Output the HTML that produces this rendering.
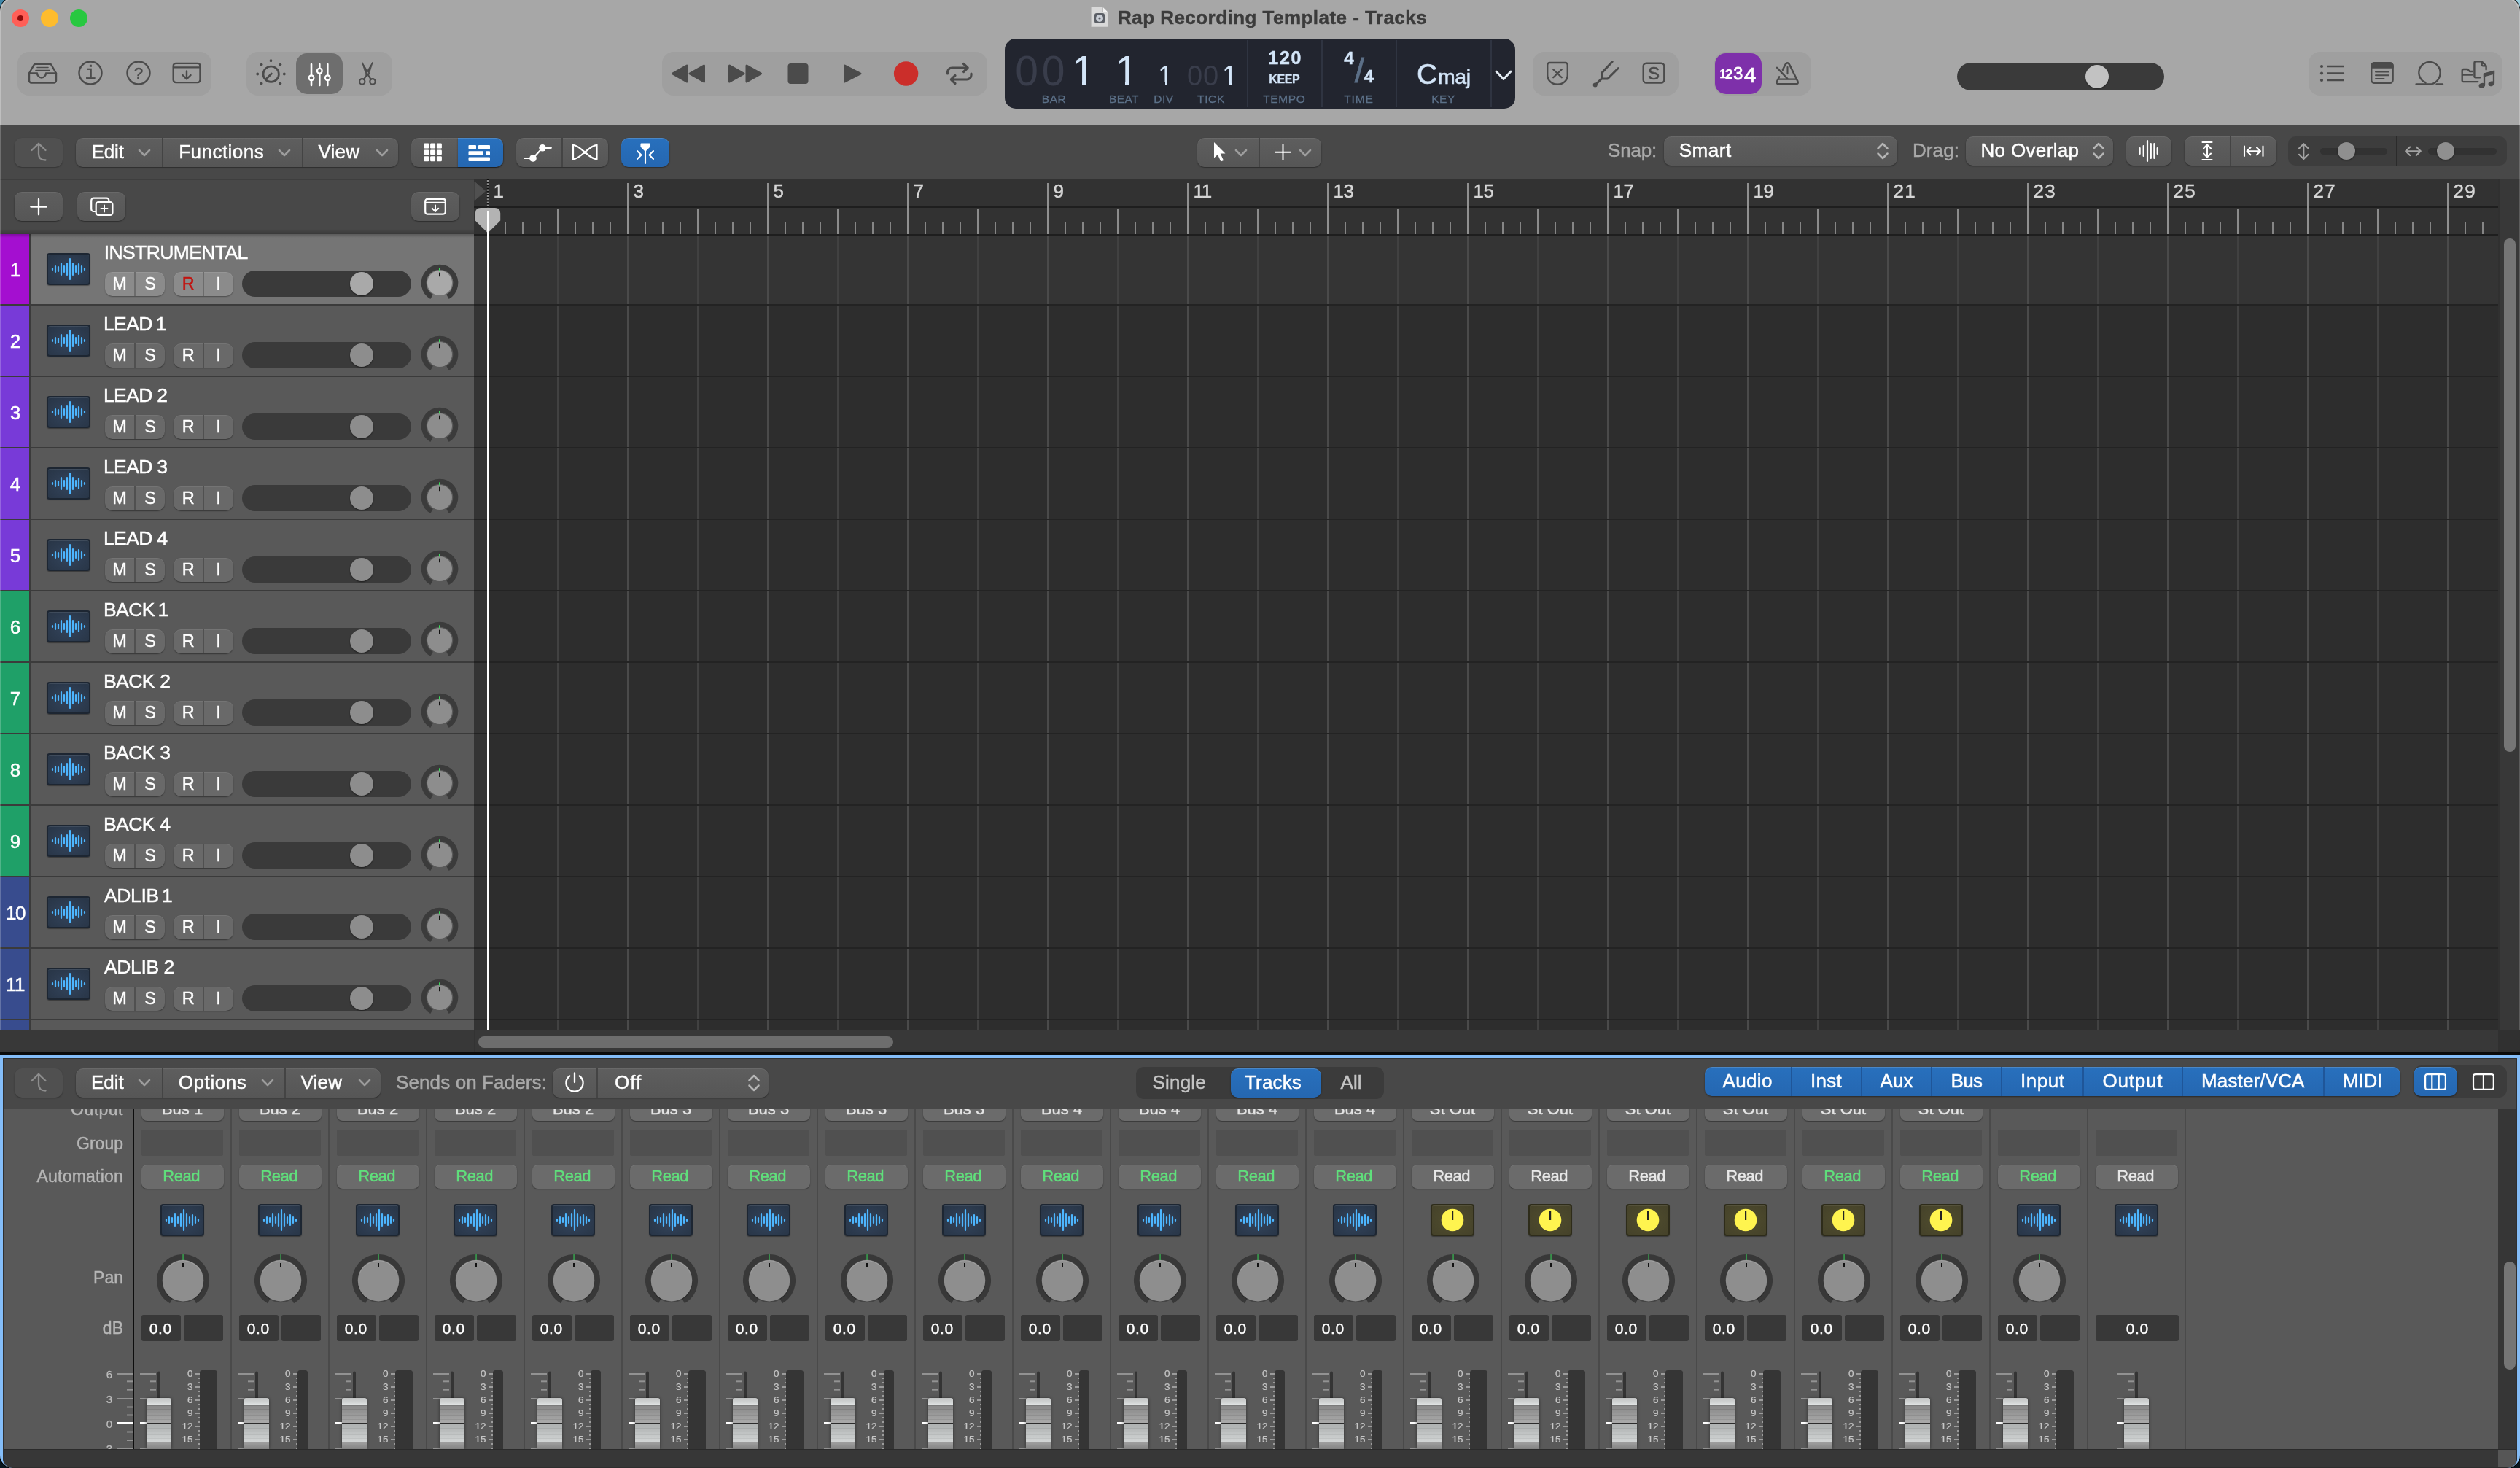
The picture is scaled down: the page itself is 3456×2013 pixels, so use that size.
<!DOCTYPE html>
<html lang="en"><head><meta charset="utf-8"><title>Rap Recording Template - Tracks</title>
<style>
html,body{margin:0;padding:0;}
body{width:3456px;height:2013px;position:relative;background:linear-gradient(to right,#3f86a8 0,#3f86a8 100px,#9ccfe0 3300px,#9ccfe0 100%) 0 0/3456px 60px no-repeat,#08161e;font-family:"Liberation Sans",sans-serif;}
#win{will-change:transform;position:absolute;left:0;top:-4px;width:3456px;height:2017px;overflow:hidden;background:#484848;border-radius:20px 20px 18px 18px;box-shadow:0 0 0 1px #000;}
#win div,#win span.t,#win svg{position:absolute;box-sizing:border-box;}
span.t{white-space:pre;display:block;-webkit-text-stroke:0.018em currentColor;}
.grp{background:#9f9f9f;border-radius:16px;}
.btn{background:linear-gradient(#5e5e5e,#565656);border-radius:10px;box-shadow:0 1px 2px rgba(0,0,0,.45),inset 0 1px 0 rgba(255,255,255,.07);}
.btnd{background:#505050;border-radius:10px;box-shadow:0 1px 2px rgba(0,0,0,.3);}
.blue{background:linear-gradient(#2870bd,#2567b1);border-radius:10px;box-shadow:0 1px 2px rgba(0,0,0,.45),inset 0 1px 0 rgba(255,255,255,.16);}
.sep{background:#444;width:2px;}
.tb{background:#696969;border-radius:10px;box-shadow:0 1px 1.5px rgba(0,0,0,.4),inset 0 1px 0 rgba(255,255,255,.08);}
.tbs{background:#8b8b8b;border-radius:10px;box-shadow:0 1px 1.5px rgba(0,0,0,.35),inset 0 1px 0 rgba(255,255,255,.1);}
.ico{border-radius:4px;border:2px solid #1d2632;background:radial-gradient(ellipse at 50% 55%,#33445c 0%,#2b394c 70%,#283546 100%);box-shadow:0 1px 1px rgba(0,0,0,.35),inset 0 1px 0 rgba(255,255,255,.1);}
.icoy{border-radius:4px;border:2px solid #2e2c1a;background:radial-gradient(ellipse at 50% 50%,#504d2e 0%,#45422a 100%);box-shadow:0 1px 1px rgba(0,0,0,.35),inset 0 1px 0 rgba(255,255,255,.08);}
.slot{background:#3a3a3a;border-radius:18px;}
.kn{border-radius:50%;box-shadow:0 1px 2px rgba(0,0,0,.5);}
.rd{background:#6b6b6b;border-radius:8px;box-shadow:0 1px 1.5px rgba(0,0,0,.4),inset 0 1px 0 rgba(255,255,255,.08);}
.db{background:#383838;border-radius:3px;}
.gs{background:#505050;border-radius:2px;}
#win #in{left:0;top:4px;width:3456px;height:2013px;}
</style></head><body><div id="win"><div id="in">
<div style="left:0px;top:0px;width:3456px;height:171px;background:#a7a7a7;"></div>
<div style="left:0px;top:-4px;width:3456px;height:175px;border:2px solid rgba(255,255,255,.28);border-bottom:none;border-radius:20px 20px 0 0;"></div>
<div style="left:16px;top:13px;width:24px;height:24px;background:#ff5f57;border-radius:50%;"></div>
<div style="left:24px;top:21px;width:8px;height:8px;background:#8e0b0b;border-radius:50%;"></div>
<div style="left:56px;top:13px;width:24px;height:24px;background:#febc2e;border-radius:50%;"></div>
<div style="left:96px;top:13px;width:24px;height:24px;background:#28c840;border-radius:50%;"></div>
<div class="grp" style="left:24px;top:71px;width:266px;height:60px;"></div>
<div class="grp" style="left:338px;top:71px;width:200px;height:60px;"></div>
<div class="grp" style="left:908px;top:71px;width:446px;height:60px;"></div>
<div class="grp" style="left:2102px;top:71px;width:200px;height:60px;"></div>
<div class="grp" style="left:2351px;top:71px;width:133px;height:60px;"></div>
<div class="grp" style="left:3166px;top:71px;width:266px;height:60px;"></div>
<svg style="left:1496px;top:9px;" width="24" height="28" viewBox="0 0 24 28"><path d="M1.5,0.5 h15 l7,7 v19.5 a1,1 0 0 1 -1,1 h-21 a1,1 0 0 1 -1,-1 v-25.5 a1,1 0 0 1 1,-1z" fill="#d9d9d9" stroke="#bdbdbd" stroke-width="1"/><path d="M16.5,0.5 v7 h7z" fill="#f2f2f2" stroke="#bdbdbd" stroke-width="1"/><rect x="5" y="9" width="14" height="14" rx="3" fill="#5b5f66"/><circle cx="12" cy="16" r="5" fill="#c9ced6"/><circle cx="12" cy="16" r="1.6" fill="#5b5f66"/></svg>
<span class="t" style="left:1533.00px;top:11.29px;font-size:26px;line-height:26px;color:#3b3b3b;font-weight:bold;letter-spacing:0.460px;">Rap Recording Template - Tracks</span>
<svg style="left:30px;top:75px;" width="260" height="52" viewBox="0 0 260 52"><g fill="none" stroke="#4b4b4b" stroke-width="2.4" stroke-linecap="round" stroke-linejoin="round"><path d="M10,25.5 L16.5,14 a2.5,2.5 0 0 1 2.2,-1.3 h19.6 a2.5,2.5 0 0 1 2.2,1.3 L47,25.5"/><path d="M10,25.5 h11 a6,6 0 0 0 12,0 h14 v10 a3,3 0 0 1 -3,3 h-31 a3,3 0 0 1 -3,-3 z"/><path d="M21,17.5 h15 M19,21.5 h19" stroke-width="1.6"/><circle cx="94" cy="25" r="15.5"/><circle cx="160" cy="25" r="15.5"/><rect x="207.7" y="11.9" width="36.8" height="26.2" rx="3.5"/><path d="M208,17.3 h36" stroke-width="2.2"/><path d="M226,22.5 v10.5 M220.5,28 l5.5,5.5 l5.5,-5.5"/></g><text x="94" y="32.6" font-family="Liberation Mono,monospace" font-size="25" text-anchor="middle" fill="#4b4b4b" stroke="#4b4b4b" stroke-width="0.5">i</text><text x="160" y="33" font-family="Liberation Sans,sans-serif" font-size="22.5" text-anchor="middle" fill="#4b4b4b" stroke="#4b4b4b" stroke-width="0.5">?</text></svg>
<div style="left:406px;top:73px;width:64px;height:56px;background:#6e6e6e;border-radius:15px;"></div>
<svg style="left:340px;top:75px;" width="200" height="52" viewBox="0 0 200 52"><g fill="none" stroke="#4b4b4b" stroke-width="2.4" stroke-linecap="round" stroke-linejoin="round"><circle cx="31.7" cy="26.7" r="10.7" stroke-width="2.7"/><path d="M25.2,33.2 L32.3,26" stroke-width="2.8"/><circle cx="49.8" cy="26.5" r="1.9" fill="#4b4b4b" stroke="none"/><circle cx="44.4" cy="13.6" r="1.9" fill="#4b4b4b" stroke="none"/><circle cx="31.5" cy="8.2" r="1.9" fill="#4b4b4b" stroke="none"/><circle cx="18.6" cy="13.6" r="1.9" fill="#4b4b4b" stroke="none"/><circle cx="13.2" cy="26.5" r="1.9" fill="#4b4b4b" stroke="none"/><circle cx="18.6" cy="39.4" r="1.9" fill="#4b4b4b" stroke="none"/><circle cx="44.4" cy="39.4" r="1.9" fill="#4b4b4b" stroke="none"/><circle cx="156.7" cy="36.9" r="3.7" stroke-width="2.2"/><circle cx="171" cy="36.9" r="3.7" stroke-width="2.2"/><path d="M156.7,10.4 L165.6,25 L162.4,28.2 Z M171,10.4 L162.1,25 L165.3,28.2 Z" fill="#4b4b4b" stroke-width="1"/><path d="M164.3,27 L168.6,33.6 M163.5,27 L159.1,33.6" stroke-width="2.2"/></g><g fill="none" stroke="#fff" stroke-width="2.6" stroke-linecap="round"><path d="M87,13 v29 M98.3,13 v29 M109.3,13 v29"/><circle cx="87" cy="31.7" r="3.4" fill="#6e6e6e" stroke-width="2.2"/><circle cx="98.3" cy="22.2" r="3.4" fill="#6e6e6e" stroke-width="2.2"/><circle cx="109.3" cy="31.7" r="3.4" fill="#6e6e6e" stroke-width="2.2"/></g></svg>
<svg style="left:908px;top:71px;" width="446" height="60" viewBox="0 0 446 60"><g fill="#4b4b4b" stroke="#4b4b4b" stroke-width="3" stroke-linejoin="round"><path d="M14.5,30 L34,19 V41 Z M38,30 L57.5,19 V41 Z"/><path d="M92.5,19 L112,30 L92.5,41 Z M116,19 L135.5,30 L116,41 Z"/><rect x="174" y="17.5" width="25" height="25" rx="2.5"/><path d="M250.5,19 L272,30 L250.5,41 Z"/></g><circle cx="334.6" cy="30" r="16.7" fill="#cb2e2a"/><g fill="none" stroke="#4b4b4b" stroke-width="3.2" stroke-linecap="round" stroke-linejoin="round"><path d="M391.5,30 v-2 a6,6 0 0 1 6,-6 h21.5 M413.5,16.5 l5.7,5.5 l-5.7,5.5"/><path d="M424,30 v2 a6,6 0 0 1 -6,6 h-21.5 M402,32.5 l-5.7,5.5 l5.7,5.5"/></g></svg>
<div style="left:1378px;top:53px;width:700px;height:95.5px;background:#22252f;border-radius:15px;"></div>
<div style="left:1710px;top:55px;width:2px;height:91.5px;background:#2f3441;"></div>
<div style="left:1812px;top:55px;width:2px;height:91.5px;background:#2f3441;"></div>
<div style="left:1914px;top:55px;width:2px;height:91.5px;background:#2f3441;"></div>
<div style="left:2043.5px;top:55px;width:2px;height:91.5px;background:#2f3441;"></div>
<span class="t" style="left:1392.15px;top:68.75px;font-size:57px;line-height:57px;color:#393d4b;-webkit-text-stroke:0;">0</span>
<span class="t" style="left:1428.65px;top:68.75px;font-size:57px;line-height:57px;color:#393d4b;-webkit-text-stroke:0;">0</span>
<span class="t" style="left:1627.93px;top:84.83px;font-size:38px;line-height:38px;color:#393d4b;-webkit-text-stroke:0;">0</span>
<span class="t" style="left:1649.93px;top:84.83px;font-size:38px;line-height:38px;color:#393d4b;-webkit-text-stroke:0;">0</span>
<span class="t" style="left:1469.65px;top:68.75px;font-size:57px;line-height:57px;color:#d3e5f8;-webkit-text-stroke:0;">1</span>
<div style="left:1472.15px;top:112.2px;width:11.9px;height:5.6px;background:#22252f;"></div>
<div style="left:1488.95px;top:112.2px;width:11.5px;height:5.6px;background:#22252f;"></div>
<span class="t" style="left:1528.95px;top:68.75px;font-size:57px;line-height:57px;color:#d3e5f8;-webkit-text-stroke:0;">1</span>
<div style="left:1531.45px;top:112.2px;width:11.9px;height:5.6px;background:#22252f;"></div>
<div style="left:1548.25px;top:112.2px;width:11.5px;height:5.6px;background:#22252f;"></div>
<span class="t" style="left:1588.03px;top:84.83px;font-size:38px;line-height:38px;color:#d3e5f8;-webkit-text-stroke:0;">1</span>
<div style="left:1589.53px;top:113.2px;width:8.3px;height:4.6px;background:#22252f;"></div>
<div style="left:1601.33px;top:113.2px;width:6.5px;height:4.6px;background:#22252f;"></div>
<span class="t" style="left:1676.03px;top:84.83px;font-size:38px;line-height:38px;color:#d3e5f8;-webkit-text-stroke:0;">1</span>
<div style="left:1677.53px;top:113.2px;width:8.3px;height:4.6px;background:#22252f;"></div>
<div style="left:1689.33px;top:113.2px;width:6.5px;height:4.6px;background:#22252f;"></div>
<span class="t" style="left:1428.75px;top:127.88px;font-size:15.5px;line-height:15.5px;color:#5c7088;letter-spacing:0.542px;">BAR</span>
<span class="t" style="left:1521.00px;top:127.88px;font-size:15.5px;line-height:15.5px;color:#5c7088;letter-spacing:0.414px;">BEAT</span>
<span class="t" style="left:1582.25px;top:127.88px;font-size:15.5px;line-height:15.5px;color:#5c7088;letter-spacing:0.552px;">DIV</span>
<span class="t" style="left:1642.00px;top:127.88px;font-size:15.5px;line-height:15.5px;color:#5c7088;letter-spacing:0.672px;">TICK</span>
<span class="t" style="left:1732.30px;top:127.88px;font-size:15.5px;line-height:15.5px;color:#5c7088;letter-spacing:0.575px;">TEMPO</span>
<span class="t" style="left:1843.25px;top:127.88px;font-size:15.5px;line-height:15.5px;color:#5c7088;letter-spacing:0.867px;">TIME</span>
<span class="t" style="left:1963.25px;top:127.88px;font-size:15.5px;line-height:15.5px;color:#5c7088;letter-spacing:0.490px;">KEY</span>
<span class="t" style="left:1739.30px;top:67.14px;font-size:25px;line-height:25px;color:#d3e5f8;font-weight:bold;letter-spacing:1.760px;">120</span>
<span class="t" style="left:1740.30px;top:101.16px;font-size:16px;line-height:16px;color:#d3e5f8;font-weight:bold;letter-spacing:-0.395px;">KEEP</span>
<span class="t" style="left:1843.13px;top:67.68px;font-size:24px;line-height:24px;color:#d3e5f8;font-weight:bold;">4</span>
<span class="t" style="left:1857.77px;top:72.71px;font-size:47px;line-height:47px;color:#5c7088;">/</span>
<span class="t" style="left:1870.83px;top:93.48px;font-size:24px;line-height:24px;color:#d3e5f8;font-weight:bold;">4</span>
<span class="t" style="left:1943.00px;top:81.99px;font-size:39px;line-height:39px;color:#d3e5f8;">C</span>
<span class="t" style="left:1972.00px;top:90.87px;font-size:28.5px;line-height:28.5px;color:#d3e5f8;letter-spacing:-0.469px;">maj</span>
<svg style="left:2046px;top:92px;" width="32" height="24" viewBox="0 0 32 24"><path d="M6,6 L16,16.5 L26,6" fill="none" stroke="#e3ebf3" stroke-width="3" stroke-linecap="round" stroke-linejoin="round"/></svg>
<svg style="left:2102px;top:71px;" width="200" height="60" viewBox="0 0 200 60"><g fill="none" stroke="#4b4b4b" stroke-width="2.4" stroke-linecap="round" stroke-linejoin="round"><path d="M20.2,18 a3,3 0 0 1 3,-3 h21.6 a3,3 0 0 1 3,3 v14.3 a13.8,12.4 0 0 1 -27.6,0 z"/><path d="M28.2,24.3 l11.6,11 M39.8,24.3 l-11.6,11" stroke-width="2.2"/><path d="M109.2,13.6 L94.8,29 V36.4 M117.3,22.5 L102.8,37 H95.2 M94.8,36.6 L86,45.2" stroke-width="3"/><circle cx="85.7" cy="45.4" r="3" fill="#4b4b4b" stroke="none"/><rect x="151.7" y="15.8" width="28.6" height="26.8" rx="4"/></g><text x="166" y="37.8" font-family="Liberation Sans,sans-serif" font-size="24" text-anchor="middle" fill="#4b4b4b" stroke="#4b4b4b" stroke-width="0.6">S</text></svg>
<div style="left:2352px;top:73px;width:64px;height:56px;background:#7e30aa;border-radius:15px;"></div>
<span class="t" style="left:2358.20px;top:94.46px;font-size:16px;line-height:16px;color:#fff;font-weight:bold;">1</span>
<span class="t" style="left:2366.00px;top:93.14px;font-size:18.5px;line-height:18.5px;color:#fff;font-weight:bold;letter-spacing:1.219px;">2</span>
<span class="t" style="left:2377.30px;top:89.81px;font-size:23.5px;line-height:23.5px;color:#fff;letter-spacing:1.938px;-webkit-text-stroke:0.8px #fff;">3</span>
<span class="t" style="left:2391.80px;top:87.51px;font-size:30px;line-height:30px;color:#fff;letter-spacing:3.312px;-webkit-text-stroke:0.6px #fff;">4</span>
<svg style="left:2430px;top:80px;" width="44" height="44" viewBox="0 0 44 44"><g fill="none" stroke="#4b4b4b" stroke-width="2.4" stroke-linecap="round" stroke-linejoin="round"><path d="M14.8,15.9 L17.9,9.6 Q21.3,2.8 24.7,9.6 L35.5,31.6 Q37,35.3 33,35.3 H9.5 Q5.5,35.3 7,31.6 L10.2,25.2"/><path d="M7,12.7 L22,28.6 M9.3,28.6 h24"/><path d="M21.5,12 v9.3" stroke-width="2.1"/></g></svg>
<div style="left:2683.5px;top:86px;width:284.5px;height:38px;background:#3a3a3a;border-radius:19px;"></div>
<div style="left:2860px;top:89px;width:32px;height:32px;background:#c2c2c2;border-radius:50%;box-shadow:0 1px 2px rgba(0,0,0,.4);"></div>
<svg style="left:3166px;top:71px;" width="266" height="60" viewBox="0 0 266 60"><g fill="none" stroke="#4b4b4b" stroke-width="2.4" stroke-linecap="round" stroke-linejoin="round"><path d="M26.3,20 h21.6 M26.3,29.5 h21.6 M26.3,39 h21.6" stroke-width="2.5"/><circle cx="18" cy="20" r="2.1" fill="#4b4b4b" stroke="none"/><circle cx="18" cy="29.5" r="2.1" fill="#4b4b4b" stroke="none"/><circle cx="18" cy="39" r="2.1" fill="#4b4b4b" stroke="none"/><rect x="86.2" y="15.2" width="29.4" height="27.6" rx="4"/><path d="M86.2,21.5 v-2.3 a4,4 0 0 1 4,-4 h21.4 a4,4 0 0 1 4,4 v2.3 z" fill="#4b4b4b"/><path d="M92,27.5 h18 M92,32.3 h18 M92,37 h11.5" stroke-width="2"/><path d="M147.6,44.5 H166 C174,44.5 180.65,37 180.65,28.65 A14.65,14.65 0 1 0 160.5,42.2 M175.5,44.5 h8.5"/><path d="M210.7,39.5 v-13.5 a2,2 0 0 1 2,-2 h5.5 l2.8,3 h3.5 M210.7,31.5 h13.5 M210.7,39.5 a1.6,1.6 0 0 0 1.6,1.6 h20"/><path d="M227.4,34 v-18.5 a2.2,2.2 0 0 1 2.2,-2.2 h8 l6,6 v5 M237.6,13.3 v4.3 a1.8,1.8 0 0 0 1.8,1.8 h4.2 M227.4,34 a1.2,1.2 0 0 0 1.2,1.2 h6.5"/><path d="M241,30.5 v15.5 M254,27 v16.5" stroke-width="2.3"/><path d="M239.9,29.6 L255.1,25.5 V30.6 L239.9,34.7 Z" fill="#4b4b4b" stroke="none"/><ellipse cx="237.7" cy="46.3" rx="4.2" ry="3.3" transform="rotate(-20 237.7 46.3)" fill="#4b4b4b" stroke="none"/><ellipse cx="250.7" cy="43.8" rx="4.2" ry="3.3" transform="rotate(-20 250.7 43.8)" fill="#4b4b4b" stroke="none"/></g></svg>
<div style="left:0px;top:171px;width:3456px;height:74px;background:#484848;"></div>
<div class="btnd" style="left:20px;top:189px;width:66px;height:40px;"></div>
<svg style="left:20px;top:189px;" width="66" height="40" viewBox="0 0 66 40"><path d="M23.5,17 L33,7.8 L42.5,17 M33,8.2 V22 Q33,30.5 42.5,30.5" fill="none" stroke="#8d8d8d" stroke-width="2.3" stroke-linecap="round" stroke-linejoin="round"/></svg>
<div class="btn" style="left:104px;top:189px;width:441.5px;height:40px;"></div>
<div class="sep" style="left:222px;top:189px;width:2px;height:40px;"></div>
<div class="sep" style="left:414px;top:189px;width:2px;height:40px;"></div>
<span class="t" style="left:125.40px;top:194.99px;font-size:26px;line-height:26px;color:#fff;letter-spacing:-0.074px;">Edit</span>
<svg style="left:189px;top:203.7px;" width="18" height="11.2" viewBox="0 0 18 11.2"><path d="M2,2 L9,9.2 L16,2" fill="none" stroke="#9c9c9c" stroke-width="2.6" stroke-linecap="round" stroke-linejoin="round"/></svg>
<span class="t" style="left:245.20px;top:194.99px;font-size:26px;line-height:26px;color:#fff;letter-spacing:0.479px;">Functions</span>
<svg style="left:381px;top:203.7px;" width="18" height="11.2" viewBox="0 0 18 11.2"><path d="M2,2 L9,9.2 L16,2" fill="none" stroke="#9c9c9c" stroke-width="2.6" stroke-linecap="round" stroke-linejoin="round"/></svg>
<span class="t" style="left:436.40px;top:194.99px;font-size:26px;line-height:26px;color:#fff;letter-spacing:0.277px;">View</span>
<svg style="left:514.6px;top:203.7px;" width="18" height="11.2" viewBox="0 0 18 11.2"><path d="M2,2 L9,9.2 L16,2" fill="none" stroke="#9c9c9c" stroke-width="2.6" stroke-linecap="round" stroke-linejoin="round"/></svg>
<div class="btn" style="left:564px;top:189px;width:126px;height:40px;"></div>
<div class="blue" style="left:627.5px;top:189px;width:62.5px;height:40px;border-radius:0 10px 10px 0;"></div>
<svg style="left:564px;top:189px;" width="126" height="40" viewBox="0 0 126 40"><g fill="#fff"><rect x="17.3" y="7.6" width="7" height="7" rx="1.3"/><rect x="17.3" y="16.4" width="7" height="7" rx="1.3"/><rect x="17.3" y="25.2" width="7" height="7" rx="1.3"/><rect x="26.1" y="7.6" width="7" height="7" rx="1.3"/><rect x="26.1" y="16.4" width="7" height="7" rx="1.3"/><rect x="26.1" y="25.2" width="7" height="7" rx="1.3"/><rect x="34.9" y="7.6" width="7" height="7" rx="1.3"/><rect x="34.9" y="16.4" width="7" height="7" rx="1.3"/><rect x="34.9" y="25.2" width="7" height="7" rx="1.3"/><rect x="78.5" y="10" width="10.5" height="5.6" rx="1"/><rect x="92" y="10" width="16" height="5.6" rx="1"/><rect x="78.5" y="18.2" width="20.5" height="5.6" rx="1"/><rect x="102" y="18.2" width="6" height="5.6" rx="1"/><rect x="78.5" y="26.4" width="29.5" height="5.6" rx="1"/></g></svg>
<div class="btn" style="left:708px;top:189px;width:126px;height:40px;"></div>
<div class="sep" style="left:770px;top:189px;width:2px;height:40px;"></div>
<svg style="left:708px;top:189px;" width="126" height="40" viewBox="0 0 126 40"><g fill="none" stroke="#fff" stroke-width="2.2" stroke-linecap="round" stroke-linejoin="round"><path d="M11.5,28 h11.5 L36,13.8 h11.8"/><circle cx="23" cy="28" r="4.8" fill="#fff" stroke="none"/><circle cx="36" cy="13.8" r="4.8" fill="#fff" stroke="none"/><path d="M78,9.5 v20 M110.5,9.5 v20 M78,9.8 C88,10 100,29.3 110.5,29.3 M78,29.3 C88,29.3 100,10 110.5,9.8"/></g></svg>
<div class="blue" style="left:852px;top:189px;width:66px;height:40px;"></div>
<svg style="left:852px;top:189px;" width="66" height="40" viewBox="0 0 66 40"><g fill="none" stroke="#fff" stroke-width="2.1" stroke-linecap="round" stroke-linejoin="round"><path d="M33,14 V35"/><path d="M27.5,8.5 h11 v3.5 L33,17.5 L27.5,12 z" fill="#fff"/><path d="M22,18 l5.5,5.5 l-5.5,5.5 M44,18 l-5.5,5.5 l5.5,5.5"/></g></svg>
<div class="btn" style="left:1642px;top:189px;width:170px;height:40px;"></div>
<div class="sep" style="left:1726px;top:189px;width:2px;height:40px;"></div>
<svg style="left:1642px;top:189px;" width="170" height="40" viewBox="0 0 170 40"><path d="M23,6 V27.5 L28,23 L32.3,32.5 L36,31 L31.7,21.5 H38.5 Z" fill="#fff"/><path d="M117.5,9 v21.5 M106.8,19.8 h21.5" fill="none" stroke="#fff" stroke-width="2"/></svg>
<svg style="left:1693px;top:203.7px;" width="18" height="11.2" viewBox="0 0 18 11.2"><path d="M2,2 L9,9.2 L16,2" fill="none" stroke="#9c9c9c" stroke-width="2.6" stroke-linecap="round" stroke-linejoin="round"/></svg>
<svg style="left:1781px;top:203.7px;" width="18" height="11.2" viewBox="0 0 18 11.2"><path d="M2,2 L9,9.2 L16,2" fill="none" stroke="#9c9c9c" stroke-width="2.6" stroke-linecap="round" stroke-linejoin="round"/></svg>
<span class="t" style="left:2205.00px;top:193.19px;font-size:26px;line-height:26px;color:#a9a9a9;letter-spacing:-0.184px;">Snap:</span>
<div class="btn" style="left:2281.5px;top:187px;width:320.5px;height:40px;"></div>
<span class="t" style="left:2302.70px;top:193.19px;font-size:26px;line-height:26px;color:#fff;letter-spacing:0.534px;">Smart</span>
<svg style="left:2571.5px;top:193.4px;" width="20" height="28" viewBox="0 0 20 28"><path d="M3.5,10.5 L10,4 L16.5,10.5 M3.5,17.5 L10,24 L16.5,17.5" fill="none" stroke="#b4b4b4" stroke-width="2.5" stroke-linecap="round" stroke-linejoin="round"/></svg>
<span class="t" style="left:2623.00px;top:193.19px;font-size:26px;line-height:26px;color:#a9a9a9;letter-spacing:0.087px;">Drag:</span>
<div class="btn" style="left:2696px;top:187px;width:202px;height:40px;"></div>
<span class="t" style="left:2716.40px;top:193.19px;font-size:26px;line-height:26px;color:#fff;letter-spacing:0.353px;">No Overlap</span>
<svg style="left:2868px;top:193.4px;" width="20" height="28" viewBox="0 0 20 28"><path d="M3.5,10.5 L10,4 L16.5,10.5 M3.5,17.5 L10,24 L16.5,17.5" fill="none" stroke="#b4b4b4" stroke-width="2.5" stroke-linecap="round" stroke-linejoin="round"/></svg>
<div class="btn" style="left:2916px;top:187px;width:62px;height:40px;"></div>
<svg style="left:2916px;top:187px;" width="62" height="40" viewBox="0 0 62 40"><path d="M18.6,16 v8 M23.7,13 v14 M29,6 v28 M33.8,10 v20 M38.4,10 v20 M42.7,16 v8 " fill="none" stroke="#fff" stroke-width="2.2" stroke-linecap="round"/></svg>
<div class="btn" style="left:2996px;top:187px;width:126px;height:40px;"></div>
<div class="sep" style="left:3058px;top:187px;width:2px;height:40px;"></div>
<svg style="left:2996px;top:187px;" width="126" height="40" viewBox="0 0 126 40"><g fill="none" stroke="#fff" stroke-width="2.1" stroke-linecap="round" stroke-linejoin="round"><path d="M24.5,8 h13 M24.5,32 h13 M31,11.5 v17 M26,16.5 l5,-5 l5,5 M26,23.5 l5,5 l5,-5"/><path d="M82,13.5 v13.5 M107.5,13.5 v13.5 M85.5,20.3 h18.5 M90.5,15.3 l-5,5 l5,5 M99,15.3 l5,5 l-5,5"/></g></svg>
<div style="left:3138px;top:187px;width:300px;height:39.5px;background:#3d3d3d;border-radius:10px;"></div>
<div style="left:3286px;top:187px;width:2px;height:39.5px;background:#2b2b2b;"></div>
<svg style="left:3138px;top:187px;" width="300" height="40" viewBox="0 0 300 40"><g fill="none" stroke="#a2a2a2" stroke-width="2.1" stroke-linecap="round" stroke-linejoin="round"><path d="M21.3,11 v19.5 M15,16.5 l6.3,-6.3 l6.3,6.3 M15,24.8 l6.3,6.3 l6.3,-6.3"/><path d="M162,20.3 h19 M167.2,14.5 l-6,5.8 l6,5.8 M175.8,14.5 l6,5.8 l-6,5.8"/></g></svg>
<div style="left:3181.5px;top:202.8px;width:92.5px;height:9px;background:#323232;border-radius:4.5px;"></div>
<div style="left:3330px;top:202.8px;width:94px;height:9px;background:#323232;border-radius:4.5px;"></div>
<div class="kn" style="left:3206px;top:195.3px;width:24px;height:24px;background:#8f8f8f;"></div>
<div class="kn" style="left:3342px;top:195.3px;width:24px;height:24px;background:#8f8f8f;"></div>
<div style="left:0px;top:245px;width:650px;height:2px;background:#3e3e3e;"></div>
<div style="left:650px;top:245px;width:2776px;height:78px;background:#323232;"></div>
<div style="left:650px;top:283px;width:2776px;height:2px;background:#1e1e1e;"></div>
<div style="left:650px;top:321px;width:2776px;height:2px;background:#1e1e1e;"></div>
<div style="left:3426px;top:245px;width:30px;height:1198px;background:#383838;"></div>
<div style="left:3426px;top:245px;width:2px;height:1168px;background:#303030;"></div>
<div style="left:650px;top:323px;width:2776px;height:1090px;background:#2d2d2d;"></div>
<div style="left:650px;top:323px;width:2776px;height:94px;background:#343434;"></div>
<div style="left:650px;top:323px;width:18px;height:1090px;background:rgba(255,255,255,.035);"></div>
<svg style="left:650px;top:245px;" width="2776" height="78" viewBox="0 0 2776 78"><rect x="42" y="60" width="2" height="16" fill="#858585"/><rect x="66" y="60" width="2" height="16" fill="#858585"/><rect x="90" y="60" width="2" height="16" fill="#858585"/><rect x="114" y="42" width="2" height="34" fill="#8c8c8c"/><rect x="138" y="60" width="2" height="16" fill="#858585"/><rect x="162" y="60" width="2" height="16" fill="#858585"/><rect x="186" y="60" width="2" height="16" fill="#858585"/><rect x="210" y="6" width="2" height="70" fill="#909090"/><rect x="234" y="60" width="2" height="16" fill="#858585"/><rect x="258" y="60" width="2" height="16" fill="#858585"/><rect x="282" y="60" width="2" height="16" fill="#858585"/><rect x="306" y="42" width="2" height="34" fill="#8c8c8c"/><rect x="330" y="60" width="2" height="16" fill="#858585"/><rect x="354" y="60" width="2" height="16" fill="#858585"/><rect x="378" y="60" width="2" height="16" fill="#858585"/><rect x="402" y="6" width="2" height="70" fill="#909090"/><rect x="426" y="60" width="2" height="16" fill="#858585"/><rect x="450" y="60" width="2" height="16" fill="#858585"/><rect x="474" y="60" width="2" height="16" fill="#858585"/><rect x="498" y="42" width="2" height="34" fill="#8c8c8c"/><rect x="522" y="60" width="2" height="16" fill="#858585"/><rect x="546" y="60" width="2" height="16" fill="#858585"/><rect x="570" y="60" width="2" height="16" fill="#858585"/><rect x="594" y="6" width="2" height="70" fill="#909090"/><rect x="618" y="60" width="2" height="16" fill="#858585"/><rect x="642" y="60" width="2" height="16" fill="#858585"/><rect x="666" y="60" width="2" height="16" fill="#858585"/><rect x="690" y="42" width="2" height="34" fill="#8c8c8c"/><rect x="714" y="60" width="2" height="16" fill="#858585"/><rect x="738" y="60" width="2" height="16" fill="#858585"/><rect x="762" y="60" width="2" height="16" fill="#858585"/><rect x="786" y="6" width="2" height="70" fill="#909090"/><rect x="810" y="60" width="2" height="16" fill="#858585"/><rect x="834" y="60" width="2" height="16" fill="#858585"/><rect x="858" y="60" width="2" height="16" fill="#858585"/><rect x="882" y="42" width="2" height="34" fill="#8c8c8c"/><rect x="906" y="60" width="2" height="16" fill="#858585"/><rect x="930" y="60" width="2" height="16" fill="#858585"/><rect x="954" y="60" width="2" height="16" fill="#858585"/><rect x="978" y="6" width="2" height="70" fill="#909090"/><rect x="1002" y="60" width="2" height="16" fill="#858585"/><rect x="1026" y="60" width="2" height="16" fill="#858585"/><rect x="1050" y="60" width="2" height="16" fill="#858585"/><rect x="1074" y="42" width="2" height="34" fill="#8c8c8c"/><rect x="1098" y="60" width="2" height="16" fill="#858585"/><rect x="1122" y="60" width="2" height="16" fill="#858585"/><rect x="1146" y="60" width="2" height="16" fill="#858585"/><rect x="1170" y="6" width="2" height="70" fill="#909090"/><rect x="1194" y="60" width="2" height="16" fill="#858585"/><rect x="1218" y="60" width="2" height="16" fill="#858585"/><rect x="1242" y="60" width="2" height="16" fill="#858585"/><rect x="1266" y="42" width="2" height="34" fill="#8c8c8c"/><rect x="1290" y="60" width="2" height="16" fill="#858585"/><rect x="1314" y="60" width="2" height="16" fill="#858585"/><rect x="1338" y="60" width="2" height="16" fill="#858585"/><rect x="1362" y="6" width="2" height="70" fill="#909090"/><rect x="1386" y="60" width="2" height="16" fill="#858585"/><rect x="1410" y="60" width="2" height="16" fill="#858585"/><rect x="1434" y="60" width="2" height="16" fill="#858585"/><rect x="1458" y="42" width="2" height="34" fill="#8c8c8c"/><rect x="1482" y="60" width="2" height="16" fill="#858585"/><rect x="1506" y="60" width="2" height="16" fill="#858585"/><rect x="1530" y="60" width="2" height="16" fill="#858585"/><rect x="1554" y="6" width="2" height="70" fill="#909090"/><rect x="1578" y="60" width="2" height="16" fill="#858585"/><rect x="1602" y="60" width="2" height="16" fill="#858585"/><rect x="1626" y="60" width="2" height="16" fill="#858585"/><rect x="1650" y="42" width="2" height="34" fill="#8c8c8c"/><rect x="1674" y="60" width="2" height="16" fill="#858585"/><rect x="1698" y="60" width="2" height="16" fill="#858585"/><rect x="1722" y="60" width="2" height="16" fill="#858585"/><rect x="1746" y="6" width="2" height="70" fill="#909090"/><rect x="1770" y="60" width="2" height="16" fill="#858585"/><rect x="1794" y="60" width="2" height="16" fill="#858585"/><rect x="1818" y="60" width="2" height="16" fill="#858585"/><rect x="1842" y="42" width="2" height="34" fill="#8c8c8c"/><rect x="1866" y="60" width="2" height="16" fill="#858585"/><rect x="1890" y="60" width="2" height="16" fill="#858585"/><rect x="1914" y="60" width="2" height="16" fill="#858585"/><rect x="1938" y="6" width="2" height="70" fill="#909090"/><rect x="1962" y="60" width="2" height="16" fill="#858585"/><rect x="1986" y="60" width="2" height="16" fill="#858585"/><rect x="2010" y="60" width="2" height="16" fill="#858585"/><rect x="2034" y="42" width="2" height="34" fill="#8c8c8c"/><rect x="2058" y="60" width="2" height="16" fill="#858585"/><rect x="2082" y="60" width="2" height="16" fill="#858585"/><rect x="2106" y="60" width="2" height="16" fill="#858585"/><rect x="2130" y="6" width="2" height="70" fill="#909090"/><rect x="2154" y="60" width="2" height="16" fill="#858585"/><rect x="2178" y="60" width="2" height="16" fill="#858585"/><rect x="2202" y="60" width="2" height="16" fill="#858585"/><rect x="2226" y="42" width="2" height="34" fill="#8c8c8c"/><rect x="2250" y="60" width="2" height="16" fill="#858585"/><rect x="2274" y="60" width="2" height="16" fill="#858585"/><rect x="2298" y="60" width="2" height="16" fill="#858585"/><rect x="2322" y="6" width="2" height="70" fill="#909090"/><rect x="2346" y="60" width="2" height="16" fill="#858585"/><rect x="2370" y="60" width="2" height="16" fill="#858585"/><rect x="2394" y="60" width="2" height="16" fill="#858585"/><rect x="2418" y="42" width="2" height="34" fill="#8c8c8c"/><rect x="2442" y="60" width="2" height="16" fill="#858585"/><rect x="2466" y="60" width="2" height="16" fill="#858585"/><rect x="2490" y="60" width="2" height="16" fill="#858585"/><rect x="2514" y="6" width="2" height="70" fill="#909090"/><rect x="2538" y="60" width="2" height="16" fill="#858585"/><rect x="2562" y="60" width="2" height="16" fill="#858585"/><rect x="2586" y="60" width="2" height="16" fill="#858585"/><rect x="2610" y="42" width="2" height="34" fill="#8c8c8c"/><rect x="2634" y="60" width="2" height="16" fill="#858585"/><rect x="2658" y="60" width="2" height="16" fill="#858585"/><rect x="2682" y="60" width="2" height="16" fill="#858585"/><rect x="2706" y="6" width="2" height="70" fill="#909090"/><rect x="2730" y="60" width="2" height="16" fill="#858585"/><rect x="2754" y="60" width="2" height="16" fill="#858585"/></svg>
<svg style="left:650px;top:323px;" width="2776" height="1090" viewBox="0 0 2776 1090"><rect x="114" y="0" width="2" height="1090" fill="#414141"/><rect x="210" y="0" width="2" height="1090" fill="#4a4a4a"/><rect x="306" y="0" width="2" height="1090" fill="#414141"/><rect x="402" y="0" width="2" height="1090" fill="#4a4a4a"/><rect x="498" y="0" width="2" height="1090" fill="#414141"/><rect x="594" y="0" width="2" height="1090" fill="#4a4a4a"/><rect x="690" y="0" width="2" height="1090" fill="#414141"/><rect x="786" y="0" width="2" height="1090" fill="#4a4a4a"/><rect x="882" y="0" width="2" height="1090" fill="#414141"/><rect x="978" y="0" width="2" height="1090" fill="#4a4a4a"/><rect x="1074" y="0" width="2" height="1090" fill="#414141"/><rect x="1170" y="0" width="2" height="1090" fill="#4a4a4a"/><rect x="1266" y="0" width="2" height="1090" fill="#414141"/><rect x="1362" y="0" width="2" height="1090" fill="#4a4a4a"/><rect x="1458" y="0" width="2" height="1090" fill="#414141"/><rect x="1554" y="0" width="2" height="1090" fill="#4a4a4a"/><rect x="1650" y="0" width="2" height="1090" fill="#414141"/><rect x="1746" y="0" width="2" height="1090" fill="#4a4a4a"/><rect x="1842" y="0" width="2" height="1090" fill="#414141"/><rect x="1938" y="0" width="2" height="1090" fill="#4a4a4a"/><rect x="2034" y="0" width="2" height="1090" fill="#414141"/><rect x="2130" y="0" width="2" height="1090" fill="#4a4a4a"/><rect x="2226" y="0" width="2" height="1090" fill="#414141"/><rect x="2322" y="0" width="2" height="1090" fill="#4a4a4a"/><rect x="2418" y="0" width="2" height="1090" fill="#414141"/><rect x="2514" y="0" width="2" height="1090" fill="#4a4a4a"/><rect x="2610" y="0" width="2" height="1090" fill="#414141"/><rect x="2706" y="0" width="2" height="1090" fill="#4a4a4a"/><rect x="0" y="94" width="2776" height="2" fill="#232323"/><rect x="0" y="192" width="2776" height="2" fill="#232323"/><rect x="0" y="290" width="2776" height="2" fill="#232323"/><rect x="0" y="388" width="2776" height="2" fill="#232323"/><rect x="0" y="486" width="2776" height="2" fill="#232323"/><rect x="0" y="584" width="2776" height="2" fill="#232323"/><rect x="0" y="682" width="2776" height="2" fill="#232323"/><rect x="0" y="780" width="2776" height="2" fill="#232323"/><rect x="0" y="878" width="2776" height="2" fill="#232323"/><rect x="0" y="976" width="2776" height="2" fill="#232323"/><rect x="0" y="1074" width="2776" height="2" fill="#232323"/></svg>
<span class="t" style="left:676.50px;top:248.99px;font-size:26px;line-height:26px;color:#d6d6d6;">1</span>
<span class="t" style="left:868.50px;top:248.99px;font-size:26px;line-height:26px;color:#d6d6d6;">3</span>
<span class="t" style="left:1060.50px;top:248.99px;font-size:26px;line-height:26px;color:#d6d6d6;">5</span>
<span class="t" style="left:1252.50px;top:248.99px;font-size:26px;line-height:26px;color:#d6d6d6;">7</span>
<span class="t" style="left:1444.50px;top:248.99px;font-size:26px;line-height:26px;color:#d6d6d6;">9</span>
<span class="t" style="left:1636.50px;top:248.99px;font-size:26px;line-height:26px;color:#d6d6d6;letter-spacing:-1.242px;">11</span>
<span class="t" style="left:1828.50px;top:248.99px;font-size:26px;line-height:26px;color:#d6d6d6;letter-spacing:-0.453px;">13</span>
<span class="t" style="left:2020.50px;top:248.99px;font-size:26px;line-height:26px;color:#d6d6d6;letter-spacing:-0.453px;">15</span>
<span class="t" style="left:2212.50px;top:248.99px;font-size:26px;line-height:26px;color:#d6d6d6;letter-spacing:-0.453px;">17</span>
<span class="t" style="left:2404.50px;top:248.99px;font-size:26px;line-height:26px;color:#d6d6d6;letter-spacing:-0.453px;">19</span>
<span class="t" style="left:2596.50px;top:248.99px;font-size:26px;line-height:26px;color:#d6d6d6;letter-spacing:1.297px;">21</span>
<span class="t" style="left:2788.50px;top:248.99px;font-size:26px;line-height:26px;color:#d6d6d6;letter-spacing:1.297px;">23</span>
<span class="t" style="left:2980.50px;top:248.99px;font-size:26px;line-height:26px;color:#d6d6d6;letter-spacing:1.297px;">25</span>
<span class="t" style="left:3172.50px;top:248.99px;font-size:26px;line-height:26px;color:#d6d6d6;letter-spacing:1.297px;">27</span>
<span class="t" style="left:3364.50px;top:248.99px;font-size:26px;line-height:26px;color:#d6d6d6;letter-spacing:1.297px;">29</span>
<svg style="left:650px;top:245px;" width="40" height="80" viewBox="0 0 40 80"><path d="M1,4.5 L15.5,17 L1,29.5 Z" fill="#505050" stroke="#505050" stroke-width="1" stroke-linejoin="round"/><path d="M19,0 V40" stroke="#0e0e0e" stroke-width="2.4"/><path d="M19,2 V40" stroke="#929292" stroke-width="2.4" stroke-dasharray="2.1,2.1"/><path d="M1.8,47.5 q0,-7.5 7.5,-7.5 h19.4 q7.5,0 7.5,7.5 v10 L19,74.5 L1.8,57.5 z" fill="#b3b3b3"/></svg>
<div style="left:667.8px;top:290px;width:2.6px;height:1123px;background:#fff;"></div>
<div style="left:0px;top:247px;width:650px;height:74px;background:#484848;"></div>
<div class="btn" style="left:20px;top:263px;width:66px;height:40px;"></div>
<div class="btn" style="left:106px;top:263px;width:66px;height:40px;"></div>
<div class="btn" style="left:564px;top:263px;width:66px;height:40px;"></div>
<svg style="left:20px;top:263px;" width="66" height="40" viewBox="0 0 66 40"><path d="M33,10 V31.3 M22.3,20.6 H43.7" fill="none" stroke="#fff" stroke-width="2.3" stroke-linecap="round"/></svg>
<svg style="left:106px;top:263px;" width="66" height="40" viewBox="0 0 66 40"><g fill="none" stroke="#fff" stroke-width="2.2" stroke-linecap="round" stroke-linejoin="round"><path d="M24.5,27 h-2 a3.3,3.3 0 0 1 -3.3,-3.3 v-11.8 a3.3,3.3 0 0 1 3.3,-3.3 h17.6 a3.3,3.3 0 0 1 3.3,3.3 v1.5"/><rect x="25.7" y="14.1" width="22.7" height="17.8" rx="3.3"/><path d="M37,18.5 v9 M32.5,23 h9" stroke-width="2"/></g></svg>
<svg style="left:564px;top:263px;" width="66" height="40" viewBox="0 0 66 40"><g fill="none" stroke="#fff" stroke-width="2.2" stroke-linecap="round" stroke-linejoin="round"><rect x="19.2" y="9.8" width="27.6" height="20.8" rx="3"/><path d="M19.5,14.6 h27" stroke-width="1.8"/><path d="M33,18.5 v8 M28.8,22.8 l4.2,4.2 l4.2,-4.2" stroke-width="2"/></g></svg>
<div style="left:0;top:321px;width:650px;height:1092px;overflow:hidden;">
<div style="left:0px;top:0px;width:650px;height:96px;background:#757575;"></div>
<div style="left:0px;top:96px;width:650px;height:2px;background:#3b3b3b;"></div>
<div style="left:0px;top:0px;width:40px;height:96px;background:#a40fd0;"></div>
<div style="left:40px;top:0px;width:2px;height:98px;background:#3b3b3b;"></div>
<span class="t" style="left:13.77px;top:36.19px;font-size:26px;line-height:26px;color:#fff;">1</span>
<div class="ico" style="left:64px;top:26px;width:60px;height:44px;"></div>
<svg style="left:64px;top:26px;" width="60" height="44" viewBox="0 0 60 44"><path d="M8,21 v2 M12,18 v8 M16,19 v6 M20,14 v16 M24,18 v8 M28,14 v16 M32,8 v28 M36,14 v16 M40,18 v8 M44,15 v14 M48,18 v8 M52,21 v2 " fill="none" stroke="#4db6ff" stroke-width="2.2" stroke-linecap="round"/></svg>
<span class="t" style="left:142.70px;top:12.07px;font-size:26.5px;line-height:26.5px;color:#fff;letter-spacing:-0.596px;">INSTRUMENTAL</span>
<div class="tbs" style="left:143.5px;top:52px;width:82.5px;height:33px;"></div>
<div class="tbs" style="left:237.5px;top:52px;width:82.5px;height:33px;"></div>
<div style="left:184px;top:52px;width:2px;height:33px;background:#6c6c6c;"></div>
<div style="left:278px;top:52px;width:2px;height:33px;background:#6c6c6c;"></div>
<span class="t" style="left:154.21px;top:56.71px;font-size:23.5px;line-height:23.5px;color:#fff;">M</span>
<span class="t" style="left:198.16px;top:56.71px;font-size:23.5px;line-height:23.5px;color:#fff;">S</span>
<span class="t" style="left:249.82px;top:56.71px;font-size:23.5px;line-height:23.5px;color:#c21410;">R</span>
<span class="t" style="left:296.23px;top:56.71px;font-size:23.5px;line-height:23.5px;color:#fff;">I</span>
<div class="slot" style="left:332px;top:50px;width:232px;height:36px;"></div>
<div class="kn" style="left:480px;top:52px;width:32px;height:32px;background:#a9a9a9;"></div>
<svg style="left:575px;top:38.7px;" width="56" height="56" viewBox="0 0 56 56"><path d="M17.10,46.88 A21.8,21.8 0 1 1 38.90,46.88" fill="none" stroke="#3b3b3b" stroke-width="7"/><circle cx="28" cy="28" r="17" fill="#a9a9a9"/><rect x="27" y="7.3" width="2" height="4" fill="#3ddc5c"/><rect x="27" y="13.7" width="2" height="5.5" fill="#111"/></svg>
<div style="left:0px;top:98px;width:650px;height:96px;background:#595959;"></div>
<div style="left:0px;top:194px;width:650px;height:2px;background:#3b3b3b;"></div>
<div style="left:0px;top:98px;width:40px;height:96px;background:#783ad8;"></div>
<div style="left:40px;top:98px;width:2px;height:98px;background:#3b3b3b;"></div>
<span class="t" style="left:13.77px;top:134.19px;font-size:26px;line-height:26px;color:#fff;">2</span>
<div class="ico" style="left:64px;top:124px;width:60px;height:44px;"></div>
<svg style="left:64px;top:124px;" width="60" height="44" viewBox="0 0 60 44"><path d="M8,21 v2 M12,18 v8 M16,19 v6 M20,14 v16 M24,18 v8 M28,14 v16 M32,8 v28 M36,14 v16 M40,18 v8 M44,15 v14 M48,18 v8 M52,21 v2 " fill="none" stroke="#4db6ff" stroke-width="2.2" stroke-linecap="round"/></svg>
<span class="t" style="left:142.00px;top:110.07px;font-size:26.5px;line-height:26.5px;color:#fff;letter-spacing:-0.644px;">LEAD </span>
<span class="t" style="left:213.40px;top:110.07px;font-size:26.5px;line-height:26.5px;color:#fff;">1</span>
<div class="tb" style="left:143.5px;top:150px;width:82.5px;height:33px;"></div>
<div class="tb" style="left:237.5px;top:150px;width:82.5px;height:33px;"></div>
<div style="left:184px;top:150px;width:2px;height:33px;background:#505050;"></div>
<div style="left:278px;top:150px;width:2px;height:33px;background:#505050;"></div>
<span class="t" style="left:154.21px;top:154.71px;font-size:23.5px;line-height:23.5px;color:#fff;">M</span>
<span class="t" style="left:198.16px;top:154.71px;font-size:23.5px;line-height:23.5px;color:#fff;">S</span>
<span class="t" style="left:249.82px;top:154.71px;font-size:23.5px;line-height:23.5px;color:#fff;">R</span>
<span class="t" style="left:296.23px;top:154.71px;font-size:23.5px;line-height:23.5px;color:#fff;">I</span>
<div class="slot" style="left:332px;top:148px;width:232px;height:36px;"></div>
<div class="kn" style="left:480px;top:150px;width:32px;height:32px;background:#8d8d8d;"></div>
<svg style="left:575px;top:136.7px;" width="56" height="56" viewBox="0 0 56 56"><path d="M17.10,46.88 A21.8,21.8 0 1 1 38.90,46.88" fill="none" stroke="#3b3b3b" stroke-width="7"/><circle cx="28" cy="28" r="17" fill="#8d8d8d"/><rect x="27" y="7.3" width="2" height="4" fill="#3ddc5c"/><rect x="27" y="13.7" width="2" height="5.5" fill="#111"/></svg>
<div style="left:0px;top:196px;width:650px;height:96px;background:#595959;"></div>
<div style="left:0px;top:292px;width:650px;height:2px;background:#3b3b3b;"></div>
<div style="left:0px;top:196px;width:40px;height:96px;background:#783ad8;"></div>
<div style="left:40px;top:196px;width:2px;height:98px;background:#3b3b3b;"></div>
<span class="t" style="left:13.77px;top:232.19px;font-size:26px;line-height:26px;color:#fff;">3</span>
<div class="ico" style="left:64px;top:222px;width:60px;height:44px;"></div>
<svg style="left:64px;top:222px;" width="60" height="44" viewBox="0 0 60 44"><path d="M8,21 v2 M12,18 v8 M16,19 v6 M20,14 v16 M24,18 v8 M28,14 v16 M32,8 v28 M36,14 v16 M40,18 v8 M44,15 v14 M48,18 v8 M52,21 v2 " fill="none" stroke="#4db6ff" stroke-width="2.2" stroke-linecap="round"/></svg>
<span class="t" style="left:142.00px;top:208.07px;font-size:26.5px;line-height:26.5px;color:#fff;letter-spacing:-0.644px;">LEAD </span>
<span class="t" style="left:215.20px;top:208.07px;font-size:26.5px;line-height:26.5px;color:#fff;">2</span>
<div class="tb" style="left:143.5px;top:248px;width:82.5px;height:33px;"></div>
<div class="tb" style="left:237.5px;top:248px;width:82.5px;height:33px;"></div>
<div style="left:184px;top:248px;width:2px;height:33px;background:#505050;"></div>
<div style="left:278px;top:248px;width:2px;height:33px;background:#505050;"></div>
<span class="t" style="left:154.21px;top:252.71px;font-size:23.5px;line-height:23.5px;color:#fff;">M</span>
<span class="t" style="left:198.16px;top:252.71px;font-size:23.5px;line-height:23.5px;color:#fff;">S</span>
<span class="t" style="left:249.82px;top:252.71px;font-size:23.5px;line-height:23.5px;color:#fff;">R</span>
<span class="t" style="left:296.23px;top:252.71px;font-size:23.5px;line-height:23.5px;color:#fff;">I</span>
<div class="slot" style="left:332px;top:246px;width:232px;height:36px;"></div>
<div class="kn" style="left:480px;top:248px;width:32px;height:32px;background:#8d8d8d;"></div>
<svg style="left:575px;top:234.7px;" width="56" height="56" viewBox="0 0 56 56"><path d="M17.10,46.88 A21.8,21.8 0 1 1 38.90,46.88" fill="none" stroke="#3b3b3b" stroke-width="7"/><circle cx="28" cy="28" r="17" fill="#8d8d8d"/><rect x="27" y="7.3" width="2" height="4" fill="#3ddc5c"/><rect x="27" y="13.7" width="2" height="5.5" fill="#111"/></svg>
<div style="left:0px;top:294px;width:650px;height:96px;background:#595959;"></div>
<div style="left:0px;top:390px;width:650px;height:2px;background:#3b3b3b;"></div>
<div style="left:0px;top:294px;width:40px;height:96px;background:#783ad8;"></div>
<div style="left:40px;top:294px;width:2px;height:98px;background:#3b3b3b;"></div>
<span class="t" style="left:13.77px;top:330.19px;font-size:26px;line-height:26px;color:#fff;">4</span>
<div class="ico" style="left:64px;top:320px;width:60px;height:44px;"></div>
<svg style="left:64px;top:320px;" width="60" height="44" viewBox="0 0 60 44"><path d="M8,21 v2 M12,18 v8 M16,19 v6 M20,14 v16 M24,18 v8 M28,14 v16 M32,8 v28 M36,14 v16 M40,18 v8 M44,15 v14 M48,18 v8 M52,21 v2 " fill="none" stroke="#4db6ff" stroke-width="2.2" stroke-linecap="round"/></svg>
<span class="t" style="left:142.00px;top:306.07px;font-size:26.5px;line-height:26.5px;color:#fff;letter-spacing:-0.644px;">LEAD </span>
<span class="t" style="left:215.20px;top:306.07px;font-size:26.5px;line-height:26.5px;color:#fff;">3</span>
<div class="tb" style="left:143.5px;top:346px;width:82.5px;height:33px;"></div>
<div class="tb" style="left:237.5px;top:346px;width:82.5px;height:33px;"></div>
<div style="left:184px;top:346px;width:2px;height:33px;background:#505050;"></div>
<div style="left:278px;top:346px;width:2px;height:33px;background:#505050;"></div>
<span class="t" style="left:154.21px;top:350.71px;font-size:23.5px;line-height:23.5px;color:#fff;">M</span>
<span class="t" style="left:198.16px;top:350.71px;font-size:23.5px;line-height:23.5px;color:#fff;">S</span>
<span class="t" style="left:249.82px;top:350.71px;font-size:23.5px;line-height:23.5px;color:#fff;">R</span>
<span class="t" style="left:296.23px;top:350.71px;font-size:23.5px;line-height:23.5px;color:#fff;">I</span>
<div class="slot" style="left:332px;top:344px;width:232px;height:36px;"></div>
<div class="kn" style="left:480px;top:346px;width:32px;height:32px;background:#8d8d8d;"></div>
<svg style="left:575px;top:332.7px;" width="56" height="56" viewBox="0 0 56 56"><path d="M17.10,46.88 A21.8,21.8 0 1 1 38.90,46.88" fill="none" stroke="#3b3b3b" stroke-width="7"/><circle cx="28" cy="28" r="17" fill="#8d8d8d"/><rect x="27" y="7.3" width="2" height="4" fill="#3ddc5c"/><rect x="27" y="13.7" width="2" height="5.5" fill="#111"/></svg>
<div style="left:0px;top:392px;width:650px;height:96px;background:#595959;"></div>
<div style="left:0px;top:488px;width:650px;height:2px;background:#3b3b3b;"></div>
<div style="left:0px;top:392px;width:40px;height:96px;background:#783ad8;"></div>
<div style="left:40px;top:392px;width:2px;height:98px;background:#3b3b3b;"></div>
<span class="t" style="left:13.77px;top:428.19px;font-size:26px;line-height:26px;color:#fff;">5</span>
<div class="ico" style="left:64px;top:418px;width:60px;height:44px;"></div>
<svg style="left:64px;top:418px;" width="60" height="44" viewBox="0 0 60 44"><path d="M8,21 v2 M12,18 v8 M16,19 v6 M20,14 v16 M24,18 v8 M28,14 v16 M32,8 v28 M36,14 v16 M40,18 v8 M44,15 v14 M48,18 v8 M52,21 v2 " fill="none" stroke="#4db6ff" stroke-width="2.2" stroke-linecap="round"/></svg>
<span class="t" style="left:142.00px;top:404.07px;font-size:26.5px;line-height:26.5px;color:#fff;letter-spacing:-0.644px;">LEAD </span>
<span class="t" style="left:215.20px;top:404.07px;font-size:26.5px;line-height:26.5px;color:#fff;">4</span>
<div class="tb" style="left:143.5px;top:444px;width:82.5px;height:33px;"></div>
<div class="tb" style="left:237.5px;top:444px;width:82.5px;height:33px;"></div>
<div style="left:184px;top:444px;width:2px;height:33px;background:#505050;"></div>
<div style="left:278px;top:444px;width:2px;height:33px;background:#505050;"></div>
<span class="t" style="left:154.21px;top:448.71px;font-size:23.5px;line-height:23.5px;color:#fff;">M</span>
<span class="t" style="left:198.16px;top:448.71px;font-size:23.5px;line-height:23.5px;color:#fff;">S</span>
<span class="t" style="left:249.82px;top:448.71px;font-size:23.5px;line-height:23.5px;color:#fff;">R</span>
<span class="t" style="left:296.23px;top:448.71px;font-size:23.5px;line-height:23.5px;color:#fff;">I</span>
<div class="slot" style="left:332px;top:442px;width:232px;height:36px;"></div>
<div class="kn" style="left:480px;top:444px;width:32px;height:32px;background:#8d8d8d;"></div>
<svg style="left:575px;top:430.7px;" width="56" height="56" viewBox="0 0 56 56"><path d="M17.10,46.88 A21.8,21.8 0 1 1 38.90,46.88" fill="none" stroke="#3b3b3b" stroke-width="7"/><circle cx="28" cy="28" r="17" fill="#8d8d8d"/><rect x="27" y="7.3" width="2" height="4" fill="#3ddc5c"/><rect x="27" y="13.7" width="2" height="5.5" fill="#111"/></svg>
<div style="left:0px;top:490px;width:650px;height:96px;background:#595959;"></div>
<div style="left:0px;top:586px;width:650px;height:2px;background:#3b3b3b;"></div>
<div style="left:0px;top:490px;width:40px;height:96px;background:#1fa068;"></div>
<div style="left:40px;top:490px;width:2px;height:98px;background:#3b3b3b;"></div>
<span class="t" style="left:13.77px;top:526.19px;font-size:26px;line-height:26px;color:#fff;">6</span>
<div class="ico" style="left:64px;top:516px;width:60px;height:44px;"></div>
<svg style="left:64px;top:516px;" width="60" height="44" viewBox="0 0 60 44"><path d="M8,21 v2 M12,18 v8 M16,19 v6 M20,14 v16 M24,18 v8 M28,14 v16 M32,8 v28 M36,14 v16 M40,18 v8 M44,15 v14 M48,18 v8 M52,21 v2 " fill="none" stroke="#4db6ff" stroke-width="2.2" stroke-linecap="round"/></svg>
<span class="t" style="left:142.00px;top:502.07px;font-size:26.5px;line-height:26.5px;color:#fff;letter-spacing:-0.571px;">BACK </span>
<span class="t" style="left:216.60px;top:502.07px;font-size:26.5px;line-height:26.5px;color:#fff;">1</span>
<div class="tb" style="left:143.5px;top:542px;width:82.5px;height:33px;"></div>
<div class="tb" style="left:237.5px;top:542px;width:82.5px;height:33px;"></div>
<div style="left:184px;top:542px;width:2px;height:33px;background:#505050;"></div>
<div style="left:278px;top:542px;width:2px;height:33px;background:#505050;"></div>
<span class="t" style="left:154.21px;top:546.71px;font-size:23.5px;line-height:23.5px;color:#fff;">M</span>
<span class="t" style="left:198.16px;top:546.71px;font-size:23.5px;line-height:23.5px;color:#fff;">S</span>
<span class="t" style="left:249.82px;top:546.71px;font-size:23.5px;line-height:23.5px;color:#fff;">R</span>
<span class="t" style="left:296.23px;top:546.71px;font-size:23.5px;line-height:23.5px;color:#fff;">I</span>
<div class="slot" style="left:332px;top:540px;width:232px;height:36px;"></div>
<div class="kn" style="left:480px;top:542px;width:32px;height:32px;background:#8d8d8d;"></div>
<svg style="left:575px;top:528.7px;" width="56" height="56" viewBox="0 0 56 56"><path d="M17.10,46.88 A21.8,21.8 0 1 1 38.90,46.88" fill="none" stroke="#3b3b3b" stroke-width="7"/><circle cx="28" cy="28" r="17" fill="#8d8d8d"/><rect x="27" y="7.3" width="2" height="4" fill="#3ddc5c"/><rect x="27" y="13.7" width="2" height="5.5" fill="#111"/></svg>
<div style="left:0px;top:588px;width:650px;height:96px;background:#595959;"></div>
<div style="left:0px;top:684px;width:650px;height:2px;background:#3b3b3b;"></div>
<div style="left:0px;top:588px;width:40px;height:96px;background:#1fa068;"></div>
<div style="left:40px;top:588px;width:2px;height:98px;background:#3b3b3b;"></div>
<span class="t" style="left:13.77px;top:624.19px;font-size:26px;line-height:26px;color:#fff;">7</span>
<div class="ico" style="left:64px;top:614px;width:60px;height:44px;"></div>
<svg style="left:64px;top:614px;" width="60" height="44" viewBox="0 0 60 44"><path d="M8,21 v2 M12,18 v8 M16,19 v6 M20,14 v16 M24,18 v8 M28,14 v16 M32,8 v28 M36,14 v16 M40,18 v8 M44,15 v14 M48,18 v8 M52,21 v2 " fill="none" stroke="#4db6ff" stroke-width="2.2" stroke-linecap="round"/></svg>
<span class="t" style="left:142.00px;top:600.07px;font-size:26.5px;line-height:26.5px;color:#fff;letter-spacing:-0.571px;">BACK </span>
<span class="t" style="left:219.30px;top:600.07px;font-size:26.5px;line-height:26.5px;color:#fff;">2</span>
<div class="tb" style="left:143.5px;top:640px;width:82.5px;height:33px;"></div>
<div class="tb" style="left:237.5px;top:640px;width:82.5px;height:33px;"></div>
<div style="left:184px;top:640px;width:2px;height:33px;background:#505050;"></div>
<div style="left:278px;top:640px;width:2px;height:33px;background:#505050;"></div>
<span class="t" style="left:154.21px;top:644.71px;font-size:23.5px;line-height:23.5px;color:#fff;">M</span>
<span class="t" style="left:198.16px;top:644.71px;font-size:23.5px;line-height:23.5px;color:#fff;">S</span>
<span class="t" style="left:249.82px;top:644.71px;font-size:23.5px;line-height:23.5px;color:#fff;">R</span>
<span class="t" style="left:296.23px;top:644.71px;font-size:23.5px;line-height:23.5px;color:#fff;">I</span>
<div class="slot" style="left:332px;top:638px;width:232px;height:36px;"></div>
<div class="kn" style="left:480px;top:640px;width:32px;height:32px;background:#8d8d8d;"></div>
<svg style="left:575px;top:626.7px;" width="56" height="56" viewBox="0 0 56 56"><path d="M17.10,46.88 A21.8,21.8 0 1 1 38.90,46.88" fill="none" stroke="#3b3b3b" stroke-width="7"/><circle cx="28" cy="28" r="17" fill="#8d8d8d"/><rect x="27" y="7.3" width="2" height="4" fill="#3ddc5c"/><rect x="27" y="13.7" width="2" height="5.5" fill="#111"/></svg>
<div style="left:0px;top:686px;width:650px;height:96px;background:#595959;"></div>
<div style="left:0px;top:782px;width:650px;height:2px;background:#3b3b3b;"></div>
<div style="left:0px;top:686px;width:40px;height:96px;background:#1fa068;"></div>
<div style="left:40px;top:686px;width:2px;height:98px;background:#3b3b3b;"></div>
<span class="t" style="left:13.77px;top:722.19px;font-size:26px;line-height:26px;color:#fff;">8</span>
<div class="ico" style="left:64px;top:712px;width:60px;height:44px;"></div>
<svg style="left:64px;top:712px;" width="60" height="44" viewBox="0 0 60 44"><path d="M8,21 v2 M12,18 v8 M16,19 v6 M20,14 v16 M24,18 v8 M28,14 v16 M32,8 v28 M36,14 v16 M40,18 v8 M44,15 v14 M48,18 v8 M52,21 v2 " fill="none" stroke="#4db6ff" stroke-width="2.2" stroke-linecap="round"/></svg>
<span class="t" style="left:142.00px;top:698.07px;font-size:26.5px;line-height:26.5px;color:#fff;letter-spacing:-0.571px;">BACK </span>
<span class="t" style="left:219.30px;top:698.07px;font-size:26.5px;line-height:26.5px;color:#fff;">3</span>
<div class="tb" style="left:143.5px;top:738px;width:82.5px;height:33px;"></div>
<div class="tb" style="left:237.5px;top:738px;width:82.5px;height:33px;"></div>
<div style="left:184px;top:738px;width:2px;height:33px;background:#505050;"></div>
<div style="left:278px;top:738px;width:2px;height:33px;background:#505050;"></div>
<span class="t" style="left:154.21px;top:742.71px;font-size:23.5px;line-height:23.5px;color:#fff;">M</span>
<span class="t" style="left:198.16px;top:742.71px;font-size:23.5px;line-height:23.5px;color:#fff;">S</span>
<span class="t" style="left:249.82px;top:742.71px;font-size:23.5px;line-height:23.5px;color:#fff;">R</span>
<span class="t" style="left:296.23px;top:742.71px;font-size:23.5px;line-height:23.5px;color:#fff;">I</span>
<div class="slot" style="left:332px;top:736px;width:232px;height:36px;"></div>
<div class="kn" style="left:480px;top:738px;width:32px;height:32px;background:#8d8d8d;"></div>
<svg style="left:575px;top:724.7px;" width="56" height="56" viewBox="0 0 56 56"><path d="M17.10,46.88 A21.8,21.8 0 1 1 38.90,46.88" fill="none" stroke="#3b3b3b" stroke-width="7"/><circle cx="28" cy="28" r="17" fill="#8d8d8d"/><rect x="27" y="7.3" width="2" height="4" fill="#3ddc5c"/><rect x="27" y="13.7" width="2" height="5.5" fill="#111"/></svg>
<div style="left:0px;top:784px;width:650px;height:96px;background:#595959;"></div>
<div style="left:0px;top:880px;width:650px;height:2px;background:#3b3b3b;"></div>
<div style="left:0px;top:784px;width:40px;height:96px;background:#1fa068;"></div>
<div style="left:40px;top:784px;width:2px;height:98px;background:#3b3b3b;"></div>
<span class="t" style="left:13.77px;top:820.19px;font-size:26px;line-height:26px;color:#fff;">9</span>
<div class="ico" style="left:64px;top:810px;width:60px;height:44px;"></div>
<svg style="left:64px;top:810px;" width="60" height="44" viewBox="0 0 60 44"><path d="M8,21 v2 M12,18 v8 M16,19 v6 M20,14 v16 M24,18 v8 M28,14 v16 M32,8 v28 M36,14 v16 M40,18 v8 M44,15 v14 M48,18 v8 M52,21 v2 " fill="none" stroke="#4db6ff" stroke-width="2.2" stroke-linecap="round"/></svg>
<span class="t" style="left:142.00px;top:796.07px;font-size:26.5px;line-height:26.5px;color:#fff;letter-spacing:-0.571px;">BACK </span>
<span class="t" style="left:219.30px;top:796.07px;font-size:26.5px;line-height:26.5px;color:#fff;">4</span>
<div class="tb" style="left:143.5px;top:836px;width:82.5px;height:33px;"></div>
<div class="tb" style="left:237.5px;top:836px;width:82.5px;height:33px;"></div>
<div style="left:184px;top:836px;width:2px;height:33px;background:#505050;"></div>
<div style="left:278px;top:836px;width:2px;height:33px;background:#505050;"></div>
<span class="t" style="left:154.21px;top:840.71px;font-size:23.5px;line-height:23.5px;color:#fff;">M</span>
<span class="t" style="left:198.16px;top:840.71px;font-size:23.5px;line-height:23.5px;color:#fff;">S</span>
<span class="t" style="left:249.82px;top:840.71px;font-size:23.5px;line-height:23.5px;color:#fff;">R</span>
<span class="t" style="left:296.23px;top:840.71px;font-size:23.5px;line-height:23.5px;color:#fff;">I</span>
<div class="slot" style="left:332px;top:834px;width:232px;height:36px;"></div>
<div class="kn" style="left:480px;top:836px;width:32px;height:32px;background:#8d8d8d;"></div>
<svg style="left:575px;top:822.7px;" width="56" height="56" viewBox="0 0 56 56"><path d="M17.10,46.88 A21.8,21.8 0 1 1 38.90,46.88" fill="none" stroke="#3b3b3b" stroke-width="7"/><circle cx="28" cy="28" r="17" fill="#8d8d8d"/><rect x="27" y="7.3" width="2" height="4" fill="#3ddc5c"/><rect x="27" y="13.7" width="2" height="5.5" fill="#111"/></svg>
<div style="left:0px;top:882px;width:650px;height:96px;background:#595959;"></div>
<div style="left:0px;top:978px;width:650px;height:2px;background:#3b3b3b;"></div>
<div style="left:0px;top:882px;width:40px;height:96px;background:#384c8e;"></div>
<div style="left:40px;top:882px;width:2px;height:98px;background:#3b3b3b;"></div>
<span class="t" style="left:8.00px;top:918.19px;font-size:26px;line-height:26px;color:#fff;letter-spacing:-1.453px;">10</span>
<div class="ico" style="left:64px;top:908px;width:60px;height:44px;"></div>
<svg style="left:64px;top:908px;" width="60" height="44" viewBox="0 0 60 44"><path d="M8,21 v2 M12,18 v8 M16,19 v6 M20,14 v16 M24,18 v8 M28,14 v16 M32,8 v28 M36,14 v16 M40,18 v8 M44,15 v14 M48,18 v8 M52,21 v2 " fill="none" stroke="#4db6ff" stroke-width="2.2" stroke-linecap="round"/></svg>
<span class="t" style="left:143.00px;top:894.07px;font-size:26.5px;line-height:26.5px;color:#fff;letter-spacing:-0.380px;">ADLIB </span>
<span class="t" style="left:222.00px;top:894.07px;font-size:26.5px;line-height:26.5px;color:#fff;">1</span>
<div class="tb" style="left:143.5px;top:934px;width:82.5px;height:33px;"></div>
<div class="tb" style="left:237.5px;top:934px;width:82.5px;height:33px;"></div>
<div style="left:184px;top:934px;width:2px;height:33px;background:#505050;"></div>
<div style="left:278px;top:934px;width:2px;height:33px;background:#505050;"></div>
<span class="t" style="left:154.21px;top:938.71px;font-size:23.5px;line-height:23.5px;color:#fff;">M</span>
<span class="t" style="left:198.16px;top:938.71px;font-size:23.5px;line-height:23.5px;color:#fff;">S</span>
<span class="t" style="left:249.82px;top:938.71px;font-size:23.5px;line-height:23.5px;color:#fff;">R</span>
<span class="t" style="left:296.23px;top:938.71px;font-size:23.5px;line-height:23.5px;color:#fff;">I</span>
<div class="slot" style="left:332px;top:932px;width:232px;height:36px;"></div>
<div class="kn" style="left:480px;top:934px;width:32px;height:32px;background:#8d8d8d;"></div>
<svg style="left:575px;top:920.7px;" width="56" height="56" viewBox="0 0 56 56"><path d="M17.10,46.88 A21.8,21.8 0 1 1 38.90,46.88" fill="none" stroke="#3b3b3b" stroke-width="7"/><circle cx="28" cy="28" r="17" fill="#8d8d8d"/><rect x="27" y="7.3" width="2" height="4" fill="#3ddc5c"/><rect x="27" y="13.7" width="2" height="5.5" fill="#111"/></svg>
<div style="left:0px;top:980px;width:650px;height:96px;background:#595959;"></div>
<div style="left:0px;top:1076px;width:650px;height:2px;background:#3b3b3b;"></div>
<div style="left:0px;top:980px;width:40px;height:96px;background:#384c8e;"></div>
<div style="left:40px;top:980px;width:2px;height:98px;background:#3b3b3b;"></div>
<span class="t" style="left:8.00px;top:1016.19px;font-size:26px;line-height:26px;color:#fff;letter-spacing:-0.492px;">11</span>
<div class="ico" style="left:64px;top:1006px;width:60px;height:44px;"></div>
<svg style="left:64px;top:1006px;" width="60" height="44" viewBox="0 0 60 44"><path d="M8,21 v2 M12,18 v8 M16,19 v6 M20,14 v16 M24,18 v8 M28,14 v16 M32,8 v28 M36,14 v16 M40,18 v8 M44,15 v14 M48,18 v8 M52,21 v2 " fill="none" stroke="#4db6ff" stroke-width="2.2" stroke-linecap="round"/></svg>
<span class="t" style="left:143.00px;top:992.07px;font-size:26.5px;line-height:26.5px;color:#fff;letter-spacing:-0.380px;">ADLIB </span>
<span class="t" style="left:224.40px;top:992.07px;font-size:26.5px;line-height:26.5px;color:#fff;">2</span>
<div class="tb" style="left:143.5px;top:1032px;width:82.5px;height:33px;"></div>
<div class="tb" style="left:237.5px;top:1032px;width:82.5px;height:33px;"></div>
<div style="left:184px;top:1032px;width:2px;height:33px;background:#505050;"></div>
<div style="left:278px;top:1032px;width:2px;height:33px;background:#505050;"></div>
<span class="t" style="left:154.21px;top:1036.71px;font-size:23.5px;line-height:23.5px;color:#fff;">M</span>
<span class="t" style="left:198.16px;top:1036.71px;font-size:23.5px;line-height:23.5px;color:#fff;">S</span>
<span class="t" style="left:249.82px;top:1036.71px;font-size:23.5px;line-height:23.5px;color:#fff;">R</span>
<span class="t" style="left:296.23px;top:1036.71px;font-size:23.5px;line-height:23.5px;color:#fff;">I</span>
<div class="slot" style="left:332px;top:1030px;width:232px;height:36px;"></div>
<div class="kn" style="left:480px;top:1032px;width:32px;height:32px;background:#8d8d8d;"></div>
<svg style="left:575px;top:1018.7px;" width="56" height="56" viewBox="0 0 56 56"><path d="M17.10,46.88 A21.8,21.8 0 1 1 38.90,46.88" fill="none" stroke="#3b3b3b" stroke-width="7"/><circle cx="28" cy="28" r="17" fill="#8d8d8d"/><rect x="27" y="7.3" width="2" height="4" fill="#3ddc5c"/><rect x="27" y="13.7" width="2" height="5.5" fill="#111"/></svg>
<div style="left:0px;top:1078px;width:650px;height:96px;background:#595959;"></div>
<div style="left:0px;top:1174px;width:650px;height:2px;background:#3b3b3b;"></div>
<div style="left:0px;top:1078px;width:40px;height:96px;background:#384c8e;"></div>
<div style="left:40px;top:1078px;width:2px;height:98px;background:#3b3b3b;"></div>
<span class="t" style="left:8.00px;top:1114.19px;font-size:26px;line-height:26px;color:#fff;letter-spacing:-1.453px;">12</span>
<div class="ico" style="left:64px;top:1104px;width:60px;height:44px;"></div>
<svg style="left:64px;top:1104px;" width="60" height="44" viewBox="0 0 60 44"><path d="M8,21 v2 M12,18 v8 M16,19 v6 M20,14 v16 M24,18 v8 M28,14 v16 M32,8 v28 M36,14 v16 M40,18 v8 M44,15 v14 M48,18 v8 M52,21 v2 " fill="none" stroke="#4db6ff" stroke-width="2.2" stroke-linecap="round"/></svg>
<span class="t" style="left:143.00px;top:1090.07px;font-size:26.5px;line-height:26.5px;color:#fff;letter-spacing:-0.380px;">ADLIB </span>
<span class="t" style="left:224.40px;top:1090.07px;font-size:26.5px;line-height:26.5px;color:#fff;">3</span>
<div class="tb" style="left:143.5px;top:1130px;width:82.5px;height:33px;"></div>
<div class="tb" style="left:237.5px;top:1130px;width:82.5px;height:33px;"></div>
<div style="left:184px;top:1130px;width:2px;height:33px;background:#505050;"></div>
<div style="left:278px;top:1130px;width:2px;height:33px;background:#505050;"></div>
<span class="t" style="left:154.21px;top:1134.71px;font-size:23.5px;line-height:23.5px;color:#fff;">M</span>
<span class="t" style="left:198.16px;top:1134.71px;font-size:23.5px;line-height:23.5px;color:#fff;">S</span>
<span class="t" style="left:249.82px;top:1134.71px;font-size:23.5px;line-height:23.5px;color:#fff;">R</span>
<span class="t" style="left:296.23px;top:1134.71px;font-size:23.5px;line-height:23.5px;color:#fff;">I</span>
<div class="slot" style="left:332px;top:1128px;width:232px;height:36px;"></div>
<div class="kn" style="left:480px;top:1130px;width:32px;height:32px;background:#8d8d8d;"></div>
<svg style="left:575px;top:1116.7px;" width="56" height="56" viewBox="0 0 56 56"><path d="M17.10,46.88 A21.8,21.8 0 1 1 38.90,46.88" fill="none" stroke="#3b3b3b" stroke-width="7"/><circle cx="28" cy="28" r="17" fill="#8d8d8d"/><rect x="27" y="7.3" width="2" height="4" fill="#3ddc5c"/><rect x="27" y="13.7" width="2" height="5.5" fill="#111"/></svg>
</div>
<div style="left:0px;top:314px;width:650px;height:7px;background:linear-gradient(rgba(0,0,0,0),rgba(0,0,0,.2));"></div>
<div style="left:0px;top:321px;width:650px;height:5px;background:linear-gradient(rgba(0,0,0,.22),rgba(0,0,0,0));"></div>
<div style="left:0px;top:171px;width:2px;height:1276px;background:rgba(255,255,255,.22);"></div>
<div style="left:3454px;top:171px;width:2px;height:1276px;background:rgba(255,255,255,.18);"></div>
<div style="left:0px;top:1413px;width:3456px;height:30px;background:#383838;"></div>
<div style="left:650px;top:1413px;width:2px;height:30px;background:#333;"></div>
<div style="left:3426px;top:1413px;width:30px;height:30px;background:#303030;"></div>
<div style="left:656px;top:1421px;width:569px;height:16px;background:#6d6d6d;border-radius:8px;"></div>
<div style="left:3434px;top:327px;width:16px;height:704px;background:#757575;border-radius:8px;"></div>
<div style="left:0px;top:1443px;width:3456px;height:4px;background:#0b0b0b;"></div>
<div style="left:4px;top:1451px;width:3448px;height:562px;background:#595959;"></div>
<div style="left:3426px;top:1520px;width:26px;height:467px;background:#363636;"></div>
<div style="left:182px;top:1520px;width:2px;height:467px;background:#0d0d0d;"></div>
<style>.cap{border-radius:3px 3px 0 0;box-shadow:0 0 4px rgba(0,0,0,.45);background:linear-gradient(#c2c4c4 0px,#d4d7d7 7px,#e6e9e9 9.5px,#e6e9e9 10px,#7a7a7a 10.0px,#7a7a7a 11.0px,#8a8a8a 11.0px,#8d8d8d 14.8px,#818181 14.8px,#818181 15.8px,#919191 15.8px,#949494 19.6px,#888888 19.6px,#888888 20.6px,#989898 20.6px,#9b9b9b 24.4px,#8f8f8f 24.4px,#8f8f8f 25.4px,#9f9f9f 25.4px,#a2a2a2 29.2px,#969696 29.2px,#969696 30.2px,#a6a6a6 30.2px,#a9a9a9 34.0px,#2c2c2c 34px,#2c2c2c 36px,#b0b3b3 36.0px,#b3b6b6 40.8px,#a9acac 40.8px,#a9acac 41.8px,#b7baba 41.8px,#babdbd 45.6px,#b1b4b4 45.6px,#b1b4b4 46.6px,#bfc2c2 46.6px,#c2c5c5 50.4px,#b8bbbb 50.4px,#b8bbbb 51.4px,#c6c9c9 51.4px,#c9cccc 55.2px,#c0c3c3 55.2px,#c0c3c3 56.2px,#ced1d1 56.2px,#d1d4d4 60.0px,#a2a2a2 60px,#828282 70px);}</style>
<div style="left:0;top:1521px;width:3426px;height:466px;overflow:hidden;"><div style="left:0;top:-1521px;width:3426px;height:2013px;">
<div style="left:316px;top:1520px;width:2px;height:467px;background:#4a4a4a;"></div>
<div class="rd" style="left:194px;top:1504px;width:112.5px;height:33px;"></div>
<span class="t" style="left:221.88px;top:1510.08px;font-size:22px;line-height:22px;color:#e4e4e4;">Bus 1</span>
<div class="gs" style="left:194px;top:1549px;width:112px;height:35.7px;"></div>
<div class="rd" style="left:194px;top:1596.6px;width:112.5px;height:33px;"></div>
<span class="t" style="left:223.20px;top:1602.38px;font-size:22px;line-height:22px;color:#60e07c;letter-spacing:-0.398px;">Read</span>
<div class="ico" style="left:220px;top:1651px;width:60px;height:44px;"></div>
<svg style="left:220px;top:1651px;" width="60" height="44" viewBox="0 0 60 44"><path d="M8,21 v2 M12,18 v8 M16,19 v6 M20,14 v16 M24,18 v8 M28,14 v16 M32,8 v28 M36,14 v16 M40,18 v8 M44,15 v14 M48,18 v8 M52,21 v2 " fill="none" stroke="#4db6ff" stroke-width="2.2" stroke-linecap="round"/></svg>
<svg style="left:211px;top:1715.8px;" width="80" height="80" viewBox="0 0 80 80"><path d="M23.90,67.89 A32.2,32.2 0 1 1 56.10,67.89" fill="none" stroke="#383838" stroke-width="7.6"/><circle cx="40" cy="41.6" r="28.6" fill="rgba(0,0,0,.22)"/><circle cx="40" cy="40.2" r="28.2" fill="#8e8e8e"/><path d="M14,30 A28.2,28.2 0 0 1 66,30" fill="none" stroke="rgba(255,255,255,.16)" stroke-width="1.2"/><rect x="39.5" y="4" width="1.1" height="8" fill="#39c957"/><rect x="39" y="16" width="2" height="6" fill="#111"/></svg>
<div class="db" style="left:194px;top:1803.3px;width:53.6px;height:35.3px;"></div>
<div class="db" style="left:252.4px;top:1803.3px;width:53.6px;height:35.3px;"></div>
<span class="t" style="left:204.80px;top:1811.22px;font-size:21px;line-height:21px;color:#fff;letter-spacing:0.609px;">0.0</span>
<svg style="left:184px;top:1880px;" width="134" height="107" viewBox="0 0 134 107"><rect x="8" y="3" width="22" height="2" fill="#929292"/><rect x="8" y="37" width="22" height="2" fill="#929292"/><rect x="8" y="105" width="22" height="2" fill="#929292"/><rect x="22" y="13.3" width="8" height="2" fill="#929292"/><rect x="22" y="24.7" width="8" height="2" fill="#929292"/><rect x="22" y="48.5" width="8" height="2" fill="#929292"/><rect x="22" y="59.5" width="8" height="2" fill="#929292"/><rect x="22" y="82.5" width="8" height="2" fill="#929292"/><rect x="22" y="94" width="8" height="2" fill="#929292"/><rect x="8" y="70" width="10" height="2.4" fill="#fff"/><rect x="32" y="0.5" width="4" height="110" rx="2" fill="#343434"/></svg>
<div class="cap" style="left:201px;top:1917px;width:34px;height:70px;"></div>
<svg style="left:184px;top:1880px;" width="134" height="107" viewBox="0 0 134 107"><rect x="84" y="3" width="6" height="2" fill="#9c9c9c"/><rect x="88" y="9" width="2" height="2" fill="#9c9c9c"/><rect x="88" y="15" width="2" height="2" fill="#9c9c9c"/><rect x="84" y="21" width="6" height="2" fill="#9c9c9c"/><rect x="88" y="27" width="2" height="2" fill="#9c9c9c"/><rect x="88" y="33" width="2" height="2" fill="#9c9c9c"/><rect x="84" y="39" width="6" height="2" fill="#9c9c9c"/><rect x="88" y="45" width="2" height="2" fill="#9c9c9c"/><rect x="88" y="51" width="2" height="2" fill="#9c9c9c"/><rect x="84" y="57" width="6" height="2" fill="#9c9c9c"/><rect x="88" y="63" width="2" height="2" fill="#9c9c9c"/><rect x="88" y="69" width="2" height="2" fill="#9c9c9c"/><rect x="84" y="75" width="6" height="2" fill="#9c9c9c"/><rect x="88" y="81" width="2" height="2" fill="#9c9c9c"/><rect x="88" y="87" width="2" height="2" fill="#9c9c9c"/><rect x="84" y="93" width="6" height="2" fill="#9c9c9c"/><rect x="88" y="99" width="2" height="2" fill="#9c9c9c"/><rect x="88" y="105" width="2" height="2" fill="#9c9c9c"/></svg>
<div style="left:274.2px;top:1879px;width:23.6px;height:110px;background:#353535;border-radius:3.5px 3.5px 0 0;"></div>
<span class="t" style="left:256.98px;top:1877.37px;font-size:13.5px;line-height:13.5px;color:#c6c6c6;">0</span>
<span class="t" style="left:256.98px;top:1895.37px;font-size:13.5px;line-height:13.5px;color:#c6c6c6;">3</span>
<span class="t" style="left:256.98px;top:1913.37px;font-size:13.5px;line-height:13.5px;color:#c6c6c6;">6</span>
<span class="t" style="left:256.98px;top:1931.37px;font-size:13.5px;line-height:13.5px;color:#c6c6c6;">9</span>
<span class="t" style="left:249.47px;top:1949.37px;font-size:13.5px;line-height:13.5px;color:#c6c6c6;">12</span>
<span class="t" style="left:249.47px;top:1967.37px;font-size:13.5px;line-height:13.5px;color:#c6c6c6;">15</span>
<div style="left:450px;top:1520px;width:2px;height:467px;background:#4a4a4a;"></div>
<div class="rd" style="left:328px;top:1504px;width:112.5px;height:33px;"></div>
<span class="t" style="left:355.88px;top:1510.08px;font-size:22px;line-height:22px;color:#e4e4e4;">Bus 2</span>
<div class="gs" style="left:328px;top:1549px;width:112px;height:35.7px;"></div>
<div class="rd" style="left:328px;top:1596.6px;width:112.5px;height:33px;"></div>
<span class="t" style="left:357.20px;top:1602.38px;font-size:22px;line-height:22px;color:#60e07c;letter-spacing:-0.398px;">Read</span>
<div class="ico" style="left:354px;top:1651px;width:60px;height:44px;"></div>
<svg style="left:354px;top:1651px;" width="60" height="44" viewBox="0 0 60 44"><path d="M8,21 v2 M12,18 v8 M16,19 v6 M20,14 v16 M24,18 v8 M28,14 v16 M32,8 v28 M36,14 v16 M40,18 v8 M44,15 v14 M48,18 v8 M52,21 v2 " fill="none" stroke="#4db6ff" stroke-width="2.2" stroke-linecap="round"/></svg>
<svg style="left:345px;top:1715.8px;" width="80" height="80" viewBox="0 0 80 80"><path d="M23.90,67.89 A32.2,32.2 0 1 1 56.10,67.89" fill="none" stroke="#383838" stroke-width="7.6"/><circle cx="40" cy="41.6" r="28.6" fill="rgba(0,0,0,.22)"/><circle cx="40" cy="40.2" r="28.2" fill="#8e8e8e"/><path d="M14,30 A28.2,28.2 0 0 1 66,30" fill="none" stroke="rgba(255,255,255,.16)" stroke-width="1.2"/><rect x="39.5" y="4" width="1.1" height="8" fill="#39c957"/><rect x="39" y="16" width="2" height="6" fill="#111"/></svg>
<div class="db" style="left:328px;top:1803.3px;width:53.6px;height:35.3px;"></div>
<div class="db" style="left:386.4px;top:1803.3px;width:53.6px;height:35.3px;"></div>
<span class="t" style="left:338.80px;top:1811.22px;font-size:21px;line-height:21px;color:#fff;letter-spacing:0.609px;">0.0</span>
<svg style="left:318px;top:1880px;" width="134" height="107" viewBox="0 0 134 107"><rect x="8" y="3" width="22" height="2" fill="#929292"/><rect x="8" y="37" width="22" height="2" fill="#929292"/><rect x="8" y="105" width="22" height="2" fill="#929292"/><rect x="22" y="13.3" width="8" height="2" fill="#929292"/><rect x="22" y="24.7" width="8" height="2" fill="#929292"/><rect x="22" y="48.5" width="8" height="2" fill="#929292"/><rect x="22" y="59.5" width="8" height="2" fill="#929292"/><rect x="22" y="82.5" width="8" height="2" fill="#929292"/><rect x="22" y="94" width="8" height="2" fill="#929292"/><rect x="8" y="70" width="10" height="2.4" fill="#fff"/><rect x="32" y="0.5" width="4" height="110" rx="2" fill="#343434"/></svg>
<div class="cap" style="left:335px;top:1917px;width:34px;height:70px;"></div>
<svg style="left:318px;top:1880px;" width="134" height="107" viewBox="0 0 134 107"><rect x="84" y="3" width="6" height="2" fill="#9c9c9c"/><rect x="88" y="9" width="2" height="2" fill="#9c9c9c"/><rect x="88" y="15" width="2" height="2" fill="#9c9c9c"/><rect x="84" y="21" width="6" height="2" fill="#9c9c9c"/><rect x="88" y="27" width="2" height="2" fill="#9c9c9c"/><rect x="88" y="33" width="2" height="2" fill="#9c9c9c"/><rect x="84" y="39" width="6" height="2" fill="#9c9c9c"/><rect x="88" y="45" width="2" height="2" fill="#9c9c9c"/><rect x="88" y="51" width="2" height="2" fill="#9c9c9c"/><rect x="84" y="57" width="6" height="2" fill="#9c9c9c"/><rect x="88" y="63" width="2" height="2" fill="#9c9c9c"/><rect x="88" y="69" width="2" height="2" fill="#9c9c9c"/><rect x="84" y="75" width="6" height="2" fill="#9c9c9c"/><rect x="88" y="81" width="2" height="2" fill="#9c9c9c"/><rect x="88" y="87" width="2" height="2" fill="#9c9c9c"/><rect x="84" y="93" width="6" height="2" fill="#9c9c9c"/><rect x="88" y="99" width="2" height="2" fill="#9c9c9c"/><rect x="88" y="105" width="2" height="2" fill="#9c9c9c"/></svg>
<div style="left:408.2px;top:1879px;width:13.4px;height:110px;background:#353535;border-radius:3.5px 3.5px 0 0;"></div>
<span class="t" style="left:390.98px;top:1877.37px;font-size:13.5px;line-height:13.5px;color:#c6c6c6;">0</span>
<span class="t" style="left:390.98px;top:1895.37px;font-size:13.5px;line-height:13.5px;color:#c6c6c6;">3</span>
<span class="t" style="left:390.98px;top:1913.37px;font-size:13.5px;line-height:13.5px;color:#c6c6c6;">6</span>
<span class="t" style="left:390.98px;top:1931.37px;font-size:13.5px;line-height:13.5px;color:#c6c6c6;">9</span>
<span class="t" style="left:383.47px;top:1949.37px;font-size:13.5px;line-height:13.5px;color:#c6c6c6;">12</span>
<span class="t" style="left:383.47px;top:1967.37px;font-size:13.5px;line-height:13.5px;color:#c6c6c6;">15</span>
<div style="left:584px;top:1520px;width:2px;height:467px;background:#4a4a4a;"></div>
<div class="rd" style="left:462px;top:1504px;width:112.5px;height:33px;"></div>
<span class="t" style="left:489.88px;top:1510.08px;font-size:22px;line-height:22px;color:#e4e4e4;">Bus 2</span>
<div class="gs" style="left:462px;top:1549px;width:112px;height:35.7px;"></div>
<div class="rd" style="left:462px;top:1596.6px;width:112.5px;height:33px;"></div>
<span class="t" style="left:491.20px;top:1602.38px;font-size:22px;line-height:22px;color:#60e07c;letter-spacing:-0.398px;">Read</span>
<div class="ico" style="left:488px;top:1651px;width:60px;height:44px;"></div>
<svg style="left:488px;top:1651px;" width="60" height="44" viewBox="0 0 60 44"><path d="M8,21 v2 M12,18 v8 M16,19 v6 M20,14 v16 M24,18 v8 M28,14 v16 M32,8 v28 M36,14 v16 M40,18 v8 M44,15 v14 M48,18 v8 M52,21 v2 " fill="none" stroke="#4db6ff" stroke-width="2.2" stroke-linecap="round"/></svg>
<svg style="left:479px;top:1715.8px;" width="80" height="80" viewBox="0 0 80 80"><path d="M23.90,67.89 A32.2,32.2 0 1 1 56.10,67.89" fill="none" stroke="#383838" stroke-width="7.6"/><circle cx="40" cy="41.6" r="28.6" fill="rgba(0,0,0,.22)"/><circle cx="40" cy="40.2" r="28.2" fill="#8e8e8e"/><path d="M14,30 A28.2,28.2 0 0 1 66,30" fill="none" stroke="rgba(255,255,255,.16)" stroke-width="1.2"/><rect x="39.5" y="4" width="1.1" height="8" fill="#39c957"/><rect x="39" y="16" width="2" height="6" fill="#111"/></svg>
<div class="db" style="left:462px;top:1803.3px;width:53.6px;height:35.3px;"></div>
<div class="db" style="left:520.4px;top:1803.3px;width:53.6px;height:35.3px;"></div>
<span class="t" style="left:472.80px;top:1811.22px;font-size:21px;line-height:21px;color:#fff;letter-spacing:0.609px;">0.0</span>
<svg style="left:452px;top:1880px;" width="134" height="107" viewBox="0 0 134 107"><rect x="8" y="3" width="22" height="2" fill="#929292"/><rect x="8" y="37" width="22" height="2" fill="#929292"/><rect x="8" y="105" width="22" height="2" fill="#929292"/><rect x="22" y="13.3" width="8" height="2" fill="#929292"/><rect x="22" y="24.7" width="8" height="2" fill="#929292"/><rect x="22" y="48.5" width="8" height="2" fill="#929292"/><rect x="22" y="59.5" width="8" height="2" fill="#929292"/><rect x="22" y="82.5" width="8" height="2" fill="#929292"/><rect x="22" y="94" width="8" height="2" fill="#929292"/><rect x="8" y="70" width="10" height="2.4" fill="#fff"/><rect x="32" y="0.5" width="4" height="110" rx="2" fill="#343434"/></svg>
<div class="cap" style="left:469px;top:1917px;width:34px;height:70px;"></div>
<svg style="left:452px;top:1880px;" width="134" height="107" viewBox="0 0 134 107"><rect x="84" y="3" width="6" height="2" fill="#9c9c9c"/><rect x="88" y="9" width="2" height="2" fill="#9c9c9c"/><rect x="88" y="15" width="2" height="2" fill="#9c9c9c"/><rect x="84" y="21" width="6" height="2" fill="#9c9c9c"/><rect x="88" y="27" width="2" height="2" fill="#9c9c9c"/><rect x="88" y="33" width="2" height="2" fill="#9c9c9c"/><rect x="84" y="39" width="6" height="2" fill="#9c9c9c"/><rect x="88" y="45" width="2" height="2" fill="#9c9c9c"/><rect x="88" y="51" width="2" height="2" fill="#9c9c9c"/><rect x="84" y="57" width="6" height="2" fill="#9c9c9c"/><rect x="88" y="63" width="2" height="2" fill="#9c9c9c"/><rect x="88" y="69" width="2" height="2" fill="#9c9c9c"/><rect x="84" y="75" width="6" height="2" fill="#9c9c9c"/><rect x="88" y="81" width="2" height="2" fill="#9c9c9c"/><rect x="88" y="87" width="2" height="2" fill="#9c9c9c"/><rect x="84" y="93" width="6" height="2" fill="#9c9c9c"/><rect x="88" y="99" width="2" height="2" fill="#9c9c9c"/><rect x="88" y="105" width="2" height="2" fill="#9c9c9c"/></svg>
<div style="left:542.2px;top:1879px;width:23.6px;height:110px;background:#353535;border-radius:3.5px 3.5px 0 0;"></div>
<span class="t" style="left:524.98px;top:1877.37px;font-size:13.5px;line-height:13.5px;color:#c6c6c6;">0</span>
<span class="t" style="left:524.98px;top:1895.37px;font-size:13.5px;line-height:13.5px;color:#c6c6c6;">3</span>
<span class="t" style="left:524.98px;top:1913.37px;font-size:13.5px;line-height:13.5px;color:#c6c6c6;">6</span>
<span class="t" style="left:524.98px;top:1931.37px;font-size:13.5px;line-height:13.5px;color:#c6c6c6;">9</span>
<span class="t" style="left:517.47px;top:1949.37px;font-size:13.5px;line-height:13.5px;color:#c6c6c6;">12</span>
<span class="t" style="left:517.47px;top:1967.37px;font-size:13.5px;line-height:13.5px;color:#c6c6c6;">15</span>
<div style="left:718px;top:1520px;width:2px;height:467px;background:#4a4a4a;"></div>
<div class="rd" style="left:596px;top:1504px;width:112.5px;height:33px;"></div>
<span class="t" style="left:623.88px;top:1510.08px;font-size:22px;line-height:22px;color:#e4e4e4;">Bus 2</span>
<div class="gs" style="left:596px;top:1549px;width:112px;height:35.7px;"></div>
<div class="rd" style="left:596px;top:1596.6px;width:112.5px;height:33px;"></div>
<span class="t" style="left:625.20px;top:1602.38px;font-size:22px;line-height:22px;color:#60e07c;letter-spacing:-0.398px;">Read</span>
<div class="ico" style="left:622px;top:1651px;width:60px;height:44px;"></div>
<svg style="left:622px;top:1651px;" width="60" height="44" viewBox="0 0 60 44"><path d="M8,21 v2 M12,18 v8 M16,19 v6 M20,14 v16 M24,18 v8 M28,14 v16 M32,8 v28 M36,14 v16 M40,18 v8 M44,15 v14 M48,18 v8 M52,21 v2 " fill="none" stroke="#4db6ff" stroke-width="2.2" stroke-linecap="round"/></svg>
<svg style="left:613px;top:1715.8px;" width="80" height="80" viewBox="0 0 80 80"><path d="M23.90,67.89 A32.2,32.2 0 1 1 56.10,67.89" fill="none" stroke="#383838" stroke-width="7.6"/><circle cx="40" cy="41.6" r="28.6" fill="rgba(0,0,0,.22)"/><circle cx="40" cy="40.2" r="28.2" fill="#8e8e8e"/><path d="M14,30 A28.2,28.2 0 0 1 66,30" fill="none" stroke="rgba(255,255,255,.16)" stroke-width="1.2"/><rect x="39.5" y="4" width="1.1" height="8" fill="#39c957"/><rect x="39" y="16" width="2" height="6" fill="#111"/></svg>
<div class="db" style="left:596px;top:1803.3px;width:53.6px;height:35.3px;"></div>
<div class="db" style="left:654.4px;top:1803.3px;width:53.6px;height:35.3px;"></div>
<span class="t" style="left:606.80px;top:1811.22px;font-size:21px;line-height:21px;color:#fff;letter-spacing:0.609px;">0.0</span>
<svg style="left:586px;top:1880px;" width="134" height="107" viewBox="0 0 134 107"><rect x="8" y="3" width="22" height="2" fill="#929292"/><rect x="8" y="37" width="22" height="2" fill="#929292"/><rect x="8" y="105" width="22" height="2" fill="#929292"/><rect x="22" y="13.3" width="8" height="2" fill="#929292"/><rect x="22" y="24.7" width="8" height="2" fill="#929292"/><rect x="22" y="48.5" width="8" height="2" fill="#929292"/><rect x="22" y="59.5" width="8" height="2" fill="#929292"/><rect x="22" y="82.5" width="8" height="2" fill="#929292"/><rect x="22" y="94" width="8" height="2" fill="#929292"/><rect x="8" y="70" width="10" height="2.4" fill="#fff"/><rect x="32" y="0.5" width="4" height="110" rx="2" fill="#343434"/></svg>
<div class="cap" style="left:603px;top:1917px;width:34px;height:70px;"></div>
<svg style="left:586px;top:1880px;" width="134" height="107" viewBox="0 0 134 107"><rect x="84" y="3" width="6" height="2" fill="#9c9c9c"/><rect x="88" y="9" width="2" height="2" fill="#9c9c9c"/><rect x="88" y="15" width="2" height="2" fill="#9c9c9c"/><rect x="84" y="21" width="6" height="2" fill="#9c9c9c"/><rect x="88" y="27" width="2" height="2" fill="#9c9c9c"/><rect x="88" y="33" width="2" height="2" fill="#9c9c9c"/><rect x="84" y="39" width="6" height="2" fill="#9c9c9c"/><rect x="88" y="45" width="2" height="2" fill="#9c9c9c"/><rect x="88" y="51" width="2" height="2" fill="#9c9c9c"/><rect x="84" y="57" width="6" height="2" fill="#9c9c9c"/><rect x="88" y="63" width="2" height="2" fill="#9c9c9c"/><rect x="88" y="69" width="2" height="2" fill="#9c9c9c"/><rect x="84" y="75" width="6" height="2" fill="#9c9c9c"/><rect x="88" y="81" width="2" height="2" fill="#9c9c9c"/><rect x="88" y="87" width="2" height="2" fill="#9c9c9c"/><rect x="84" y="93" width="6" height="2" fill="#9c9c9c"/><rect x="88" y="99" width="2" height="2" fill="#9c9c9c"/><rect x="88" y="105" width="2" height="2" fill="#9c9c9c"/></svg>
<div style="left:676.2px;top:1879px;width:13.4px;height:110px;background:#353535;border-radius:3.5px 3.5px 0 0;"></div>
<span class="t" style="left:658.98px;top:1877.37px;font-size:13.5px;line-height:13.5px;color:#c6c6c6;">0</span>
<span class="t" style="left:658.98px;top:1895.37px;font-size:13.5px;line-height:13.5px;color:#c6c6c6;">3</span>
<span class="t" style="left:658.98px;top:1913.37px;font-size:13.5px;line-height:13.5px;color:#c6c6c6;">6</span>
<span class="t" style="left:658.98px;top:1931.37px;font-size:13.5px;line-height:13.5px;color:#c6c6c6;">9</span>
<span class="t" style="left:651.47px;top:1949.37px;font-size:13.5px;line-height:13.5px;color:#c6c6c6;">12</span>
<span class="t" style="left:651.47px;top:1967.37px;font-size:13.5px;line-height:13.5px;color:#c6c6c6;">15</span>
<div style="left:852px;top:1520px;width:2px;height:467px;background:#4a4a4a;"></div>
<div class="rd" style="left:730px;top:1504px;width:112.5px;height:33px;"></div>
<span class="t" style="left:757.88px;top:1510.08px;font-size:22px;line-height:22px;color:#e4e4e4;">Bus 2</span>
<div class="gs" style="left:730px;top:1549px;width:112px;height:35.7px;"></div>
<div class="rd" style="left:730px;top:1596.6px;width:112.5px;height:33px;"></div>
<span class="t" style="left:759.20px;top:1602.38px;font-size:22px;line-height:22px;color:#60e07c;letter-spacing:-0.398px;">Read</span>
<div class="ico" style="left:756px;top:1651px;width:60px;height:44px;"></div>
<svg style="left:756px;top:1651px;" width="60" height="44" viewBox="0 0 60 44"><path d="M8,21 v2 M12,18 v8 M16,19 v6 M20,14 v16 M24,18 v8 M28,14 v16 M32,8 v28 M36,14 v16 M40,18 v8 M44,15 v14 M48,18 v8 M52,21 v2 " fill="none" stroke="#4db6ff" stroke-width="2.2" stroke-linecap="round"/></svg>
<svg style="left:747px;top:1715.8px;" width="80" height="80" viewBox="0 0 80 80"><path d="M23.90,67.89 A32.2,32.2 0 1 1 56.10,67.89" fill="none" stroke="#383838" stroke-width="7.6"/><circle cx="40" cy="41.6" r="28.6" fill="rgba(0,0,0,.22)"/><circle cx="40" cy="40.2" r="28.2" fill="#8e8e8e"/><path d="M14,30 A28.2,28.2 0 0 1 66,30" fill="none" stroke="rgba(255,255,255,.16)" stroke-width="1.2"/><rect x="39.5" y="4" width="1.1" height="8" fill="#39c957"/><rect x="39" y="16" width="2" height="6" fill="#111"/></svg>
<div class="db" style="left:730px;top:1803.3px;width:53.6px;height:35.3px;"></div>
<div class="db" style="left:788.4px;top:1803.3px;width:53.6px;height:35.3px;"></div>
<span class="t" style="left:740.80px;top:1811.22px;font-size:21px;line-height:21px;color:#fff;letter-spacing:0.609px;">0.0</span>
<svg style="left:720px;top:1880px;" width="134" height="107" viewBox="0 0 134 107"><rect x="8" y="3" width="22" height="2" fill="#929292"/><rect x="8" y="37" width="22" height="2" fill="#929292"/><rect x="8" y="105" width="22" height="2" fill="#929292"/><rect x="22" y="13.3" width="8" height="2" fill="#929292"/><rect x="22" y="24.7" width="8" height="2" fill="#929292"/><rect x="22" y="48.5" width="8" height="2" fill="#929292"/><rect x="22" y="59.5" width="8" height="2" fill="#929292"/><rect x="22" y="82.5" width="8" height="2" fill="#929292"/><rect x="22" y="94" width="8" height="2" fill="#929292"/><rect x="8" y="70" width="10" height="2.4" fill="#fff"/><rect x="32" y="0.5" width="4" height="110" rx="2" fill="#343434"/></svg>
<div class="cap" style="left:737px;top:1917px;width:34px;height:70px;"></div>
<svg style="left:720px;top:1880px;" width="134" height="107" viewBox="0 0 134 107"><rect x="84" y="3" width="6" height="2" fill="#9c9c9c"/><rect x="88" y="9" width="2" height="2" fill="#9c9c9c"/><rect x="88" y="15" width="2" height="2" fill="#9c9c9c"/><rect x="84" y="21" width="6" height="2" fill="#9c9c9c"/><rect x="88" y="27" width="2" height="2" fill="#9c9c9c"/><rect x="88" y="33" width="2" height="2" fill="#9c9c9c"/><rect x="84" y="39" width="6" height="2" fill="#9c9c9c"/><rect x="88" y="45" width="2" height="2" fill="#9c9c9c"/><rect x="88" y="51" width="2" height="2" fill="#9c9c9c"/><rect x="84" y="57" width="6" height="2" fill="#9c9c9c"/><rect x="88" y="63" width="2" height="2" fill="#9c9c9c"/><rect x="88" y="69" width="2" height="2" fill="#9c9c9c"/><rect x="84" y="75" width="6" height="2" fill="#9c9c9c"/><rect x="88" y="81" width="2" height="2" fill="#9c9c9c"/><rect x="88" y="87" width="2" height="2" fill="#9c9c9c"/><rect x="84" y="93" width="6" height="2" fill="#9c9c9c"/><rect x="88" y="99" width="2" height="2" fill="#9c9c9c"/><rect x="88" y="105" width="2" height="2" fill="#9c9c9c"/></svg>
<div style="left:810.2px;top:1879px;width:13.4px;height:110px;background:#353535;border-radius:3.5px 3.5px 0 0;"></div>
<span class="t" style="left:792.98px;top:1877.37px;font-size:13.5px;line-height:13.5px;color:#c6c6c6;">0</span>
<span class="t" style="left:792.98px;top:1895.37px;font-size:13.5px;line-height:13.5px;color:#c6c6c6;">3</span>
<span class="t" style="left:792.98px;top:1913.37px;font-size:13.5px;line-height:13.5px;color:#c6c6c6;">6</span>
<span class="t" style="left:792.98px;top:1931.37px;font-size:13.5px;line-height:13.5px;color:#c6c6c6;">9</span>
<span class="t" style="left:785.47px;top:1949.37px;font-size:13.5px;line-height:13.5px;color:#c6c6c6;">12</span>
<span class="t" style="left:785.47px;top:1967.37px;font-size:13.5px;line-height:13.5px;color:#c6c6c6;">15</span>
<div style="left:986px;top:1520px;width:2px;height:467px;background:#4a4a4a;"></div>
<div class="rd" style="left:864px;top:1504px;width:112.5px;height:33px;"></div>
<span class="t" style="left:891.88px;top:1510.08px;font-size:22px;line-height:22px;color:#e4e4e4;">Bus 3</span>
<div class="gs" style="left:864px;top:1549px;width:112px;height:35.7px;"></div>
<div class="rd" style="left:864px;top:1596.6px;width:112.5px;height:33px;"></div>
<span class="t" style="left:893.20px;top:1602.38px;font-size:22px;line-height:22px;color:#60e07c;letter-spacing:-0.398px;">Read</span>
<div class="ico" style="left:890px;top:1651px;width:60px;height:44px;"></div>
<svg style="left:890px;top:1651px;" width="60" height="44" viewBox="0 0 60 44"><path d="M8,21 v2 M12,18 v8 M16,19 v6 M20,14 v16 M24,18 v8 M28,14 v16 M32,8 v28 M36,14 v16 M40,18 v8 M44,15 v14 M48,18 v8 M52,21 v2 " fill="none" stroke="#4db6ff" stroke-width="2.2" stroke-linecap="round"/></svg>
<svg style="left:881px;top:1715.8px;" width="80" height="80" viewBox="0 0 80 80"><path d="M23.90,67.89 A32.2,32.2 0 1 1 56.10,67.89" fill="none" stroke="#383838" stroke-width="7.6"/><circle cx="40" cy="41.6" r="28.6" fill="rgba(0,0,0,.22)"/><circle cx="40" cy="40.2" r="28.2" fill="#8e8e8e"/><path d="M14,30 A28.2,28.2 0 0 1 66,30" fill="none" stroke="rgba(255,255,255,.16)" stroke-width="1.2"/><rect x="39.5" y="4" width="1.1" height="8" fill="#39c957"/><rect x="39" y="16" width="2" height="6" fill="#111"/></svg>
<div class="db" style="left:864px;top:1803.3px;width:53.6px;height:35.3px;"></div>
<div class="db" style="left:922.4px;top:1803.3px;width:53.6px;height:35.3px;"></div>
<span class="t" style="left:874.80px;top:1811.22px;font-size:21px;line-height:21px;color:#fff;letter-spacing:0.609px;">0.0</span>
<svg style="left:854px;top:1880px;" width="134" height="107" viewBox="0 0 134 107"><rect x="8" y="3" width="22" height="2" fill="#929292"/><rect x="8" y="37" width="22" height="2" fill="#929292"/><rect x="8" y="105" width="22" height="2" fill="#929292"/><rect x="22" y="13.3" width="8" height="2" fill="#929292"/><rect x="22" y="24.7" width="8" height="2" fill="#929292"/><rect x="22" y="48.5" width="8" height="2" fill="#929292"/><rect x="22" y="59.5" width="8" height="2" fill="#929292"/><rect x="22" y="82.5" width="8" height="2" fill="#929292"/><rect x="22" y="94" width="8" height="2" fill="#929292"/><rect x="8" y="70" width="10" height="2.4" fill="#fff"/><rect x="32" y="0.5" width="4" height="110" rx="2" fill="#343434"/></svg>
<div class="cap" style="left:871px;top:1917px;width:34px;height:70px;"></div>
<svg style="left:854px;top:1880px;" width="134" height="107" viewBox="0 0 134 107"><rect x="84" y="3" width="6" height="2" fill="#9c9c9c"/><rect x="88" y="9" width="2" height="2" fill="#9c9c9c"/><rect x="88" y="15" width="2" height="2" fill="#9c9c9c"/><rect x="84" y="21" width="6" height="2" fill="#9c9c9c"/><rect x="88" y="27" width="2" height="2" fill="#9c9c9c"/><rect x="88" y="33" width="2" height="2" fill="#9c9c9c"/><rect x="84" y="39" width="6" height="2" fill="#9c9c9c"/><rect x="88" y="45" width="2" height="2" fill="#9c9c9c"/><rect x="88" y="51" width="2" height="2" fill="#9c9c9c"/><rect x="84" y="57" width="6" height="2" fill="#9c9c9c"/><rect x="88" y="63" width="2" height="2" fill="#9c9c9c"/><rect x="88" y="69" width="2" height="2" fill="#9c9c9c"/><rect x="84" y="75" width="6" height="2" fill="#9c9c9c"/><rect x="88" y="81" width="2" height="2" fill="#9c9c9c"/><rect x="88" y="87" width="2" height="2" fill="#9c9c9c"/><rect x="84" y="93" width="6" height="2" fill="#9c9c9c"/><rect x="88" y="99" width="2" height="2" fill="#9c9c9c"/><rect x="88" y="105" width="2" height="2" fill="#9c9c9c"/></svg>
<div style="left:944.2px;top:1879px;width:23.6px;height:110px;background:#353535;border-radius:3.5px 3.5px 0 0;"></div>
<span class="t" style="left:926.98px;top:1877.37px;font-size:13.5px;line-height:13.5px;color:#c6c6c6;">0</span>
<span class="t" style="left:926.98px;top:1895.37px;font-size:13.5px;line-height:13.5px;color:#c6c6c6;">3</span>
<span class="t" style="left:926.98px;top:1913.37px;font-size:13.5px;line-height:13.5px;color:#c6c6c6;">6</span>
<span class="t" style="left:926.98px;top:1931.37px;font-size:13.5px;line-height:13.5px;color:#c6c6c6;">9</span>
<span class="t" style="left:919.47px;top:1949.37px;font-size:13.5px;line-height:13.5px;color:#c6c6c6;">12</span>
<span class="t" style="left:919.47px;top:1967.37px;font-size:13.5px;line-height:13.5px;color:#c6c6c6;">15</span>
<div style="left:1120px;top:1520px;width:2px;height:467px;background:#4a4a4a;"></div>
<div class="rd" style="left:998px;top:1504px;width:112.5px;height:33px;"></div>
<span class="t" style="left:1025.88px;top:1510.08px;font-size:22px;line-height:22px;color:#e4e4e4;">Bus 3</span>
<div class="gs" style="left:998px;top:1549px;width:112px;height:35.7px;"></div>
<div class="rd" style="left:998px;top:1596.6px;width:112.5px;height:33px;"></div>
<span class="t" style="left:1027.20px;top:1602.38px;font-size:22px;line-height:22px;color:#60e07c;letter-spacing:-0.398px;">Read</span>
<div class="ico" style="left:1024px;top:1651px;width:60px;height:44px;"></div>
<svg style="left:1024px;top:1651px;" width="60" height="44" viewBox="0 0 60 44"><path d="M8,21 v2 M12,18 v8 M16,19 v6 M20,14 v16 M24,18 v8 M28,14 v16 M32,8 v28 M36,14 v16 M40,18 v8 M44,15 v14 M48,18 v8 M52,21 v2 " fill="none" stroke="#4db6ff" stroke-width="2.2" stroke-linecap="round"/></svg>
<svg style="left:1015px;top:1715.8px;" width="80" height="80" viewBox="0 0 80 80"><path d="M23.90,67.89 A32.2,32.2 0 1 1 56.10,67.89" fill="none" stroke="#383838" stroke-width="7.6"/><circle cx="40" cy="41.6" r="28.6" fill="rgba(0,0,0,.22)"/><circle cx="40" cy="40.2" r="28.2" fill="#8e8e8e"/><path d="M14,30 A28.2,28.2 0 0 1 66,30" fill="none" stroke="rgba(255,255,255,.16)" stroke-width="1.2"/><rect x="39.5" y="4" width="1.1" height="8" fill="#39c957"/><rect x="39" y="16" width="2" height="6" fill="#111"/></svg>
<div class="db" style="left:998px;top:1803.3px;width:53.6px;height:35.3px;"></div>
<div class="db" style="left:1056.4px;top:1803.3px;width:53.6px;height:35.3px;"></div>
<span class="t" style="left:1008.80px;top:1811.22px;font-size:21px;line-height:21px;color:#fff;letter-spacing:0.609px;">0.0</span>
<svg style="left:988px;top:1880px;" width="134" height="107" viewBox="0 0 134 107"><rect x="8" y="3" width="22" height="2" fill="#929292"/><rect x="8" y="37" width="22" height="2" fill="#929292"/><rect x="8" y="105" width="22" height="2" fill="#929292"/><rect x="22" y="13.3" width="8" height="2" fill="#929292"/><rect x="22" y="24.7" width="8" height="2" fill="#929292"/><rect x="22" y="48.5" width="8" height="2" fill="#929292"/><rect x="22" y="59.5" width="8" height="2" fill="#929292"/><rect x="22" y="82.5" width="8" height="2" fill="#929292"/><rect x="22" y="94" width="8" height="2" fill="#929292"/><rect x="8" y="70" width="10" height="2.4" fill="#fff"/><rect x="32" y="0.5" width="4" height="110" rx="2" fill="#343434"/></svg>
<div class="cap" style="left:1005px;top:1917px;width:34px;height:70px;"></div>
<svg style="left:988px;top:1880px;" width="134" height="107" viewBox="0 0 134 107"><rect x="84" y="3" width="6" height="2" fill="#9c9c9c"/><rect x="88" y="9" width="2" height="2" fill="#9c9c9c"/><rect x="88" y="15" width="2" height="2" fill="#9c9c9c"/><rect x="84" y="21" width="6" height="2" fill="#9c9c9c"/><rect x="88" y="27" width="2" height="2" fill="#9c9c9c"/><rect x="88" y="33" width="2" height="2" fill="#9c9c9c"/><rect x="84" y="39" width="6" height="2" fill="#9c9c9c"/><rect x="88" y="45" width="2" height="2" fill="#9c9c9c"/><rect x="88" y="51" width="2" height="2" fill="#9c9c9c"/><rect x="84" y="57" width="6" height="2" fill="#9c9c9c"/><rect x="88" y="63" width="2" height="2" fill="#9c9c9c"/><rect x="88" y="69" width="2" height="2" fill="#9c9c9c"/><rect x="84" y="75" width="6" height="2" fill="#9c9c9c"/><rect x="88" y="81" width="2" height="2" fill="#9c9c9c"/><rect x="88" y="87" width="2" height="2" fill="#9c9c9c"/><rect x="84" y="93" width="6" height="2" fill="#9c9c9c"/><rect x="88" y="99" width="2" height="2" fill="#9c9c9c"/><rect x="88" y="105" width="2" height="2" fill="#9c9c9c"/></svg>
<div style="left:1078.2px;top:1879px;width:23.6px;height:110px;background:#353535;border-radius:3.5px 3.5px 0 0;"></div>
<span class="t" style="left:1060.98px;top:1877.37px;font-size:13.5px;line-height:13.5px;color:#c6c6c6;">0</span>
<span class="t" style="left:1060.98px;top:1895.37px;font-size:13.5px;line-height:13.5px;color:#c6c6c6;">3</span>
<span class="t" style="left:1060.98px;top:1913.37px;font-size:13.5px;line-height:13.5px;color:#c6c6c6;">6</span>
<span class="t" style="left:1060.98px;top:1931.37px;font-size:13.5px;line-height:13.5px;color:#c6c6c6;">9</span>
<span class="t" style="left:1053.47px;top:1949.37px;font-size:13.5px;line-height:13.5px;color:#c6c6c6;">12</span>
<span class="t" style="left:1053.47px;top:1967.37px;font-size:13.5px;line-height:13.5px;color:#c6c6c6;">15</span>
<div style="left:1254px;top:1520px;width:2px;height:467px;background:#4a4a4a;"></div>
<div class="rd" style="left:1132px;top:1504px;width:112.5px;height:33px;"></div>
<span class="t" style="left:1159.88px;top:1510.08px;font-size:22px;line-height:22px;color:#e4e4e4;">Bus 3</span>
<div class="gs" style="left:1132px;top:1549px;width:112px;height:35.7px;"></div>
<div class="rd" style="left:1132px;top:1596.6px;width:112.5px;height:33px;"></div>
<span class="t" style="left:1161.20px;top:1602.38px;font-size:22px;line-height:22px;color:#60e07c;letter-spacing:-0.398px;">Read</span>
<div class="ico" style="left:1158px;top:1651px;width:60px;height:44px;"></div>
<svg style="left:1158px;top:1651px;" width="60" height="44" viewBox="0 0 60 44"><path d="M8,21 v2 M12,18 v8 M16,19 v6 M20,14 v16 M24,18 v8 M28,14 v16 M32,8 v28 M36,14 v16 M40,18 v8 M44,15 v14 M48,18 v8 M52,21 v2 " fill="none" stroke="#4db6ff" stroke-width="2.2" stroke-linecap="round"/></svg>
<svg style="left:1149px;top:1715.8px;" width="80" height="80" viewBox="0 0 80 80"><path d="M23.90,67.89 A32.2,32.2 0 1 1 56.10,67.89" fill="none" stroke="#383838" stroke-width="7.6"/><circle cx="40" cy="41.6" r="28.6" fill="rgba(0,0,0,.22)"/><circle cx="40" cy="40.2" r="28.2" fill="#8e8e8e"/><path d="M14,30 A28.2,28.2 0 0 1 66,30" fill="none" stroke="rgba(255,255,255,.16)" stroke-width="1.2"/><rect x="39.5" y="4" width="1.1" height="8" fill="#39c957"/><rect x="39" y="16" width="2" height="6" fill="#111"/></svg>
<div class="db" style="left:1132px;top:1803.3px;width:53.6px;height:35.3px;"></div>
<div class="db" style="left:1190.4px;top:1803.3px;width:53.6px;height:35.3px;"></div>
<span class="t" style="left:1142.80px;top:1811.22px;font-size:21px;line-height:21px;color:#fff;letter-spacing:0.609px;">0.0</span>
<svg style="left:1122px;top:1880px;" width="134" height="107" viewBox="0 0 134 107"><rect x="8" y="3" width="22" height="2" fill="#929292"/><rect x="8" y="37" width="22" height="2" fill="#929292"/><rect x="8" y="105" width="22" height="2" fill="#929292"/><rect x="22" y="13.3" width="8" height="2" fill="#929292"/><rect x="22" y="24.7" width="8" height="2" fill="#929292"/><rect x="22" y="48.5" width="8" height="2" fill="#929292"/><rect x="22" y="59.5" width="8" height="2" fill="#929292"/><rect x="22" y="82.5" width="8" height="2" fill="#929292"/><rect x="22" y="94" width="8" height="2" fill="#929292"/><rect x="8" y="70" width="10" height="2.4" fill="#fff"/><rect x="32" y="0.5" width="4" height="110" rx="2" fill="#343434"/></svg>
<div class="cap" style="left:1139px;top:1917px;width:34px;height:70px;"></div>
<svg style="left:1122px;top:1880px;" width="134" height="107" viewBox="0 0 134 107"><rect x="84" y="3" width="6" height="2" fill="#9c9c9c"/><rect x="88" y="9" width="2" height="2" fill="#9c9c9c"/><rect x="88" y="15" width="2" height="2" fill="#9c9c9c"/><rect x="84" y="21" width="6" height="2" fill="#9c9c9c"/><rect x="88" y="27" width="2" height="2" fill="#9c9c9c"/><rect x="88" y="33" width="2" height="2" fill="#9c9c9c"/><rect x="84" y="39" width="6" height="2" fill="#9c9c9c"/><rect x="88" y="45" width="2" height="2" fill="#9c9c9c"/><rect x="88" y="51" width="2" height="2" fill="#9c9c9c"/><rect x="84" y="57" width="6" height="2" fill="#9c9c9c"/><rect x="88" y="63" width="2" height="2" fill="#9c9c9c"/><rect x="88" y="69" width="2" height="2" fill="#9c9c9c"/><rect x="84" y="75" width="6" height="2" fill="#9c9c9c"/><rect x="88" y="81" width="2" height="2" fill="#9c9c9c"/><rect x="88" y="87" width="2" height="2" fill="#9c9c9c"/><rect x="84" y="93" width="6" height="2" fill="#9c9c9c"/><rect x="88" y="99" width="2" height="2" fill="#9c9c9c"/><rect x="88" y="105" width="2" height="2" fill="#9c9c9c"/></svg>
<div style="left:1212.2px;top:1879px;width:13.4px;height:110px;background:#353535;border-radius:3.5px 3.5px 0 0;"></div>
<span class="t" style="left:1194.98px;top:1877.37px;font-size:13.5px;line-height:13.5px;color:#c6c6c6;">0</span>
<span class="t" style="left:1194.98px;top:1895.37px;font-size:13.5px;line-height:13.5px;color:#c6c6c6;">3</span>
<span class="t" style="left:1194.98px;top:1913.37px;font-size:13.5px;line-height:13.5px;color:#c6c6c6;">6</span>
<span class="t" style="left:1194.98px;top:1931.37px;font-size:13.5px;line-height:13.5px;color:#c6c6c6;">9</span>
<span class="t" style="left:1187.47px;top:1949.37px;font-size:13.5px;line-height:13.5px;color:#c6c6c6;">12</span>
<span class="t" style="left:1187.47px;top:1967.37px;font-size:13.5px;line-height:13.5px;color:#c6c6c6;">15</span>
<div style="left:1388px;top:1520px;width:2px;height:467px;background:#4a4a4a;"></div>
<div class="rd" style="left:1266px;top:1504px;width:112.5px;height:33px;"></div>
<span class="t" style="left:1293.88px;top:1510.08px;font-size:22px;line-height:22px;color:#e4e4e4;">Bus 3</span>
<div class="gs" style="left:1266px;top:1549px;width:112px;height:35.7px;"></div>
<div class="rd" style="left:1266px;top:1596.6px;width:112.5px;height:33px;"></div>
<span class="t" style="left:1295.20px;top:1602.38px;font-size:22px;line-height:22px;color:#60e07c;letter-spacing:-0.398px;">Read</span>
<div class="ico" style="left:1292px;top:1651px;width:60px;height:44px;"></div>
<svg style="left:1292px;top:1651px;" width="60" height="44" viewBox="0 0 60 44"><path d="M8,21 v2 M12,18 v8 M16,19 v6 M20,14 v16 M24,18 v8 M28,14 v16 M32,8 v28 M36,14 v16 M40,18 v8 M44,15 v14 M48,18 v8 M52,21 v2 " fill="none" stroke="#4db6ff" stroke-width="2.2" stroke-linecap="round"/></svg>
<svg style="left:1283px;top:1715.8px;" width="80" height="80" viewBox="0 0 80 80"><path d="M23.90,67.89 A32.2,32.2 0 1 1 56.10,67.89" fill="none" stroke="#383838" stroke-width="7.6"/><circle cx="40" cy="41.6" r="28.6" fill="rgba(0,0,0,.22)"/><circle cx="40" cy="40.2" r="28.2" fill="#8e8e8e"/><path d="M14,30 A28.2,28.2 0 0 1 66,30" fill="none" stroke="rgba(255,255,255,.16)" stroke-width="1.2"/><rect x="39.5" y="4" width="1.1" height="8" fill="#39c957"/><rect x="39" y="16" width="2" height="6" fill="#111"/></svg>
<div class="db" style="left:1266px;top:1803.3px;width:53.6px;height:35.3px;"></div>
<div class="db" style="left:1324.4px;top:1803.3px;width:53.6px;height:35.3px;"></div>
<span class="t" style="left:1276.80px;top:1811.22px;font-size:21px;line-height:21px;color:#fff;letter-spacing:0.609px;">0.0</span>
<svg style="left:1256px;top:1880px;" width="134" height="107" viewBox="0 0 134 107"><rect x="8" y="3" width="22" height="2" fill="#929292"/><rect x="8" y="37" width="22" height="2" fill="#929292"/><rect x="8" y="105" width="22" height="2" fill="#929292"/><rect x="22" y="13.3" width="8" height="2" fill="#929292"/><rect x="22" y="24.7" width="8" height="2" fill="#929292"/><rect x="22" y="48.5" width="8" height="2" fill="#929292"/><rect x="22" y="59.5" width="8" height="2" fill="#929292"/><rect x="22" y="82.5" width="8" height="2" fill="#929292"/><rect x="22" y="94" width="8" height="2" fill="#929292"/><rect x="8" y="70" width="10" height="2.4" fill="#fff"/><rect x="32" y="0.5" width="4" height="110" rx="2" fill="#343434"/></svg>
<div class="cap" style="left:1273px;top:1917px;width:34px;height:70px;"></div>
<svg style="left:1256px;top:1880px;" width="134" height="107" viewBox="0 0 134 107"><rect x="84" y="3" width="6" height="2" fill="#9c9c9c"/><rect x="88" y="9" width="2" height="2" fill="#9c9c9c"/><rect x="88" y="15" width="2" height="2" fill="#9c9c9c"/><rect x="84" y="21" width="6" height="2" fill="#9c9c9c"/><rect x="88" y="27" width="2" height="2" fill="#9c9c9c"/><rect x="88" y="33" width="2" height="2" fill="#9c9c9c"/><rect x="84" y="39" width="6" height="2" fill="#9c9c9c"/><rect x="88" y="45" width="2" height="2" fill="#9c9c9c"/><rect x="88" y="51" width="2" height="2" fill="#9c9c9c"/><rect x="84" y="57" width="6" height="2" fill="#9c9c9c"/><rect x="88" y="63" width="2" height="2" fill="#9c9c9c"/><rect x="88" y="69" width="2" height="2" fill="#9c9c9c"/><rect x="84" y="75" width="6" height="2" fill="#9c9c9c"/><rect x="88" y="81" width="2" height="2" fill="#9c9c9c"/><rect x="88" y="87" width="2" height="2" fill="#9c9c9c"/><rect x="84" y="93" width="6" height="2" fill="#9c9c9c"/><rect x="88" y="99" width="2" height="2" fill="#9c9c9c"/><rect x="88" y="105" width="2" height="2" fill="#9c9c9c"/></svg>
<div style="left:1346.2px;top:1879px;width:13.4px;height:110px;background:#353535;border-radius:3.5px 3.5px 0 0;"></div>
<span class="t" style="left:1328.98px;top:1877.37px;font-size:13.5px;line-height:13.5px;color:#c6c6c6;">0</span>
<span class="t" style="left:1328.98px;top:1895.37px;font-size:13.5px;line-height:13.5px;color:#c6c6c6;">3</span>
<span class="t" style="left:1328.98px;top:1913.37px;font-size:13.5px;line-height:13.5px;color:#c6c6c6;">6</span>
<span class="t" style="left:1328.98px;top:1931.37px;font-size:13.5px;line-height:13.5px;color:#c6c6c6;">9</span>
<span class="t" style="left:1321.47px;top:1949.37px;font-size:13.5px;line-height:13.5px;color:#c6c6c6;">12</span>
<span class="t" style="left:1321.47px;top:1967.37px;font-size:13.5px;line-height:13.5px;color:#c6c6c6;">15</span>
<div style="left:1522px;top:1520px;width:2px;height:467px;background:#4a4a4a;"></div>
<div class="rd" style="left:1400px;top:1504px;width:112.5px;height:33px;"></div>
<span class="t" style="left:1427.88px;top:1510.08px;font-size:22px;line-height:22px;color:#e4e4e4;">Bus 4</span>
<div class="gs" style="left:1400px;top:1549px;width:112px;height:35.7px;"></div>
<div class="rd" style="left:1400px;top:1596.6px;width:112.5px;height:33px;"></div>
<span class="t" style="left:1429.20px;top:1602.38px;font-size:22px;line-height:22px;color:#60e07c;letter-spacing:-0.398px;">Read</span>
<div class="ico" style="left:1426px;top:1651px;width:60px;height:44px;"></div>
<svg style="left:1426px;top:1651px;" width="60" height="44" viewBox="0 0 60 44"><path d="M8,21 v2 M12,18 v8 M16,19 v6 M20,14 v16 M24,18 v8 M28,14 v16 M32,8 v28 M36,14 v16 M40,18 v8 M44,15 v14 M48,18 v8 M52,21 v2 " fill="none" stroke="#4db6ff" stroke-width="2.2" stroke-linecap="round"/></svg>
<svg style="left:1417px;top:1715.8px;" width="80" height="80" viewBox="0 0 80 80"><path d="M23.90,67.89 A32.2,32.2 0 1 1 56.10,67.89" fill="none" stroke="#383838" stroke-width="7.6"/><circle cx="40" cy="41.6" r="28.6" fill="rgba(0,0,0,.22)"/><circle cx="40" cy="40.2" r="28.2" fill="#8e8e8e"/><path d="M14,30 A28.2,28.2 0 0 1 66,30" fill="none" stroke="rgba(255,255,255,.16)" stroke-width="1.2"/><rect x="39.5" y="4" width="1.1" height="8" fill="#39c957"/><rect x="39" y="16" width="2" height="6" fill="#111"/></svg>
<div class="db" style="left:1400px;top:1803.3px;width:53.6px;height:35.3px;"></div>
<div class="db" style="left:1458.4px;top:1803.3px;width:53.6px;height:35.3px;"></div>
<span class="t" style="left:1410.80px;top:1811.22px;font-size:21px;line-height:21px;color:#fff;letter-spacing:0.609px;">0.0</span>
<svg style="left:1390px;top:1880px;" width="134" height="107" viewBox="0 0 134 107"><rect x="8" y="3" width="22" height="2" fill="#929292"/><rect x="8" y="37" width="22" height="2" fill="#929292"/><rect x="8" y="105" width="22" height="2" fill="#929292"/><rect x="22" y="13.3" width="8" height="2" fill="#929292"/><rect x="22" y="24.7" width="8" height="2" fill="#929292"/><rect x="22" y="48.5" width="8" height="2" fill="#929292"/><rect x="22" y="59.5" width="8" height="2" fill="#929292"/><rect x="22" y="82.5" width="8" height="2" fill="#929292"/><rect x="22" y="94" width="8" height="2" fill="#929292"/><rect x="8" y="70" width="10" height="2.4" fill="#fff"/><rect x="32" y="0.5" width="4" height="110" rx="2" fill="#343434"/></svg>
<div class="cap" style="left:1407px;top:1917px;width:34px;height:70px;"></div>
<svg style="left:1390px;top:1880px;" width="134" height="107" viewBox="0 0 134 107"><rect x="84" y="3" width="6" height="2" fill="#9c9c9c"/><rect x="88" y="9" width="2" height="2" fill="#9c9c9c"/><rect x="88" y="15" width="2" height="2" fill="#9c9c9c"/><rect x="84" y="21" width="6" height="2" fill="#9c9c9c"/><rect x="88" y="27" width="2" height="2" fill="#9c9c9c"/><rect x="88" y="33" width="2" height="2" fill="#9c9c9c"/><rect x="84" y="39" width="6" height="2" fill="#9c9c9c"/><rect x="88" y="45" width="2" height="2" fill="#9c9c9c"/><rect x="88" y="51" width="2" height="2" fill="#9c9c9c"/><rect x="84" y="57" width="6" height="2" fill="#9c9c9c"/><rect x="88" y="63" width="2" height="2" fill="#9c9c9c"/><rect x="88" y="69" width="2" height="2" fill="#9c9c9c"/><rect x="84" y="75" width="6" height="2" fill="#9c9c9c"/><rect x="88" y="81" width="2" height="2" fill="#9c9c9c"/><rect x="88" y="87" width="2" height="2" fill="#9c9c9c"/><rect x="84" y="93" width="6" height="2" fill="#9c9c9c"/><rect x="88" y="99" width="2" height="2" fill="#9c9c9c"/><rect x="88" y="105" width="2" height="2" fill="#9c9c9c"/></svg>
<div style="left:1480.2px;top:1879px;width:13.4px;height:110px;background:#353535;border-radius:3.5px 3.5px 0 0;"></div>
<span class="t" style="left:1462.98px;top:1877.37px;font-size:13.5px;line-height:13.5px;color:#c6c6c6;">0</span>
<span class="t" style="left:1462.98px;top:1895.37px;font-size:13.5px;line-height:13.5px;color:#c6c6c6;">3</span>
<span class="t" style="left:1462.98px;top:1913.37px;font-size:13.5px;line-height:13.5px;color:#c6c6c6;">6</span>
<span class="t" style="left:1462.98px;top:1931.37px;font-size:13.5px;line-height:13.5px;color:#c6c6c6;">9</span>
<span class="t" style="left:1455.47px;top:1949.37px;font-size:13.5px;line-height:13.5px;color:#c6c6c6;">12</span>
<span class="t" style="left:1455.47px;top:1967.37px;font-size:13.5px;line-height:13.5px;color:#c6c6c6;">15</span>
<div style="left:1656px;top:1520px;width:2px;height:467px;background:#4a4a4a;"></div>
<div class="rd" style="left:1534px;top:1504px;width:112.5px;height:33px;"></div>
<span class="t" style="left:1561.88px;top:1510.08px;font-size:22px;line-height:22px;color:#e4e4e4;">Bus 4</span>
<div class="gs" style="left:1534px;top:1549px;width:112px;height:35.7px;"></div>
<div class="rd" style="left:1534px;top:1596.6px;width:112.5px;height:33px;"></div>
<span class="t" style="left:1563.20px;top:1602.38px;font-size:22px;line-height:22px;color:#60e07c;letter-spacing:-0.398px;">Read</span>
<div class="ico" style="left:1560px;top:1651px;width:60px;height:44px;"></div>
<svg style="left:1560px;top:1651px;" width="60" height="44" viewBox="0 0 60 44"><path d="M8,21 v2 M12,18 v8 M16,19 v6 M20,14 v16 M24,18 v8 M28,14 v16 M32,8 v28 M36,14 v16 M40,18 v8 M44,15 v14 M48,18 v8 M52,21 v2 " fill="none" stroke="#4db6ff" stroke-width="2.2" stroke-linecap="round"/></svg>
<svg style="left:1551px;top:1715.8px;" width="80" height="80" viewBox="0 0 80 80"><path d="M23.90,67.89 A32.2,32.2 0 1 1 56.10,67.89" fill="none" stroke="#383838" stroke-width="7.6"/><circle cx="40" cy="41.6" r="28.6" fill="rgba(0,0,0,.22)"/><circle cx="40" cy="40.2" r="28.2" fill="#8e8e8e"/><path d="M14,30 A28.2,28.2 0 0 1 66,30" fill="none" stroke="rgba(255,255,255,.16)" stroke-width="1.2"/><rect x="39.5" y="4" width="1.1" height="8" fill="#39c957"/><rect x="39" y="16" width="2" height="6" fill="#111"/></svg>
<div class="db" style="left:1534px;top:1803.3px;width:53.6px;height:35.3px;"></div>
<div class="db" style="left:1592.4px;top:1803.3px;width:53.6px;height:35.3px;"></div>
<span class="t" style="left:1544.80px;top:1811.22px;font-size:21px;line-height:21px;color:#fff;letter-spacing:0.609px;">0.0</span>
<svg style="left:1524px;top:1880px;" width="134" height="107" viewBox="0 0 134 107"><rect x="8" y="3" width="22" height="2" fill="#929292"/><rect x="8" y="37" width="22" height="2" fill="#929292"/><rect x="8" y="105" width="22" height="2" fill="#929292"/><rect x="22" y="13.3" width="8" height="2" fill="#929292"/><rect x="22" y="24.7" width="8" height="2" fill="#929292"/><rect x="22" y="48.5" width="8" height="2" fill="#929292"/><rect x="22" y="59.5" width="8" height="2" fill="#929292"/><rect x="22" y="82.5" width="8" height="2" fill="#929292"/><rect x="22" y="94" width="8" height="2" fill="#929292"/><rect x="8" y="70" width="10" height="2.4" fill="#fff"/><rect x="32" y="0.5" width="4" height="110" rx="2" fill="#343434"/></svg>
<div class="cap" style="left:1541px;top:1917px;width:34px;height:70px;"></div>
<svg style="left:1524px;top:1880px;" width="134" height="107" viewBox="0 0 134 107"><rect x="84" y="3" width="6" height="2" fill="#9c9c9c"/><rect x="88" y="9" width="2" height="2" fill="#9c9c9c"/><rect x="88" y="15" width="2" height="2" fill="#9c9c9c"/><rect x="84" y="21" width="6" height="2" fill="#9c9c9c"/><rect x="88" y="27" width="2" height="2" fill="#9c9c9c"/><rect x="88" y="33" width="2" height="2" fill="#9c9c9c"/><rect x="84" y="39" width="6" height="2" fill="#9c9c9c"/><rect x="88" y="45" width="2" height="2" fill="#9c9c9c"/><rect x="88" y="51" width="2" height="2" fill="#9c9c9c"/><rect x="84" y="57" width="6" height="2" fill="#9c9c9c"/><rect x="88" y="63" width="2" height="2" fill="#9c9c9c"/><rect x="88" y="69" width="2" height="2" fill="#9c9c9c"/><rect x="84" y="75" width="6" height="2" fill="#9c9c9c"/><rect x="88" y="81" width="2" height="2" fill="#9c9c9c"/><rect x="88" y="87" width="2" height="2" fill="#9c9c9c"/><rect x="84" y="93" width="6" height="2" fill="#9c9c9c"/><rect x="88" y="99" width="2" height="2" fill="#9c9c9c"/><rect x="88" y="105" width="2" height="2" fill="#9c9c9c"/></svg>
<div style="left:1614.2px;top:1879px;width:13.4px;height:110px;background:#353535;border-radius:3.5px 3.5px 0 0;"></div>
<span class="t" style="left:1596.98px;top:1877.37px;font-size:13.5px;line-height:13.5px;color:#c6c6c6;">0</span>
<span class="t" style="left:1596.98px;top:1895.37px;font-size:13.5px;line-height:13.5px;color:#c6c6c6;">3</span>
<span class="t" style="left:1596.98px;top:1913.37px;font-size:13.5px;line-height:13.5px;color:#c6c6c6;">6</span>
<span class="t" style="left:1596.98px;top:1931.37px;font-size:13.5px;line-height:13.5px;color:#c6c6c6;">9</span>
<span class="t" style="left:1589.47px;top:1949.37px;font-size:13.5px;line-height:13.5px;color:#c6c6c6;">12</span>
<span class="t" style="left:1589.47px;top:1967.37px;font-size:13.5px;line-height:13.5px;color:#c6c6c6;">15</span>
<div style="left:1790px;top:1520px;width:2px;height:467px;background:#4a4a4a;"></div>
<div class="rd" style="left:1668px;top:1504px;width:112.5px;height:33px;"></div>
<span class="t" style="left:1695.88px;top:1510.08px;font-size:22px;line-height:22px;color:#e4e4e4;">Bus 4</span>
<div class="gs" style="left:1668px;top:1549px;width:112px;height:35.7px;"></div>
<div class="rd" style="left:1668px;top:1596.6px;width:112.5px;height:33px;"></div>
<span class="t" style="left:1697.20px;top:1602.38px;font-size:22px;line-height:22px;color:#60e07c;letter-spacing:-0.398px;">Read</span>
<div class="ico" style="left:1694px;top:1651px;width:60px;height:44px;"></div>
<svg style="left:1694px;top:1651px;" width="60" height="44" viewBox="0 0 60 44"><path d="M8,21 v2 M12,18 v8 M16,19 v6 M20,14 v16 M24,18 v8 M28,14 v16 M32,8 v28 M36,14 v16 M40,18 v8 M44,15 v14 M48,18 v8 M52,21 v2 " fill="none" stroke="#4db6ff" stroke-width="2.2" stroke-linecap="round"/></svg>
<svg style="left:1685px;top:1715.8px;" width="80" height="80" viewBox="0 0 80 80"><path d="M23.90,67.89 A32.2,32.2 0 1 1 56.10,67.89" fill="none" stroke="#383838" stroke-width="7.6"/><circle cx="40" cy="41.6" r="28.6" fill="rgba(0,0,0,.22)"/><circle cx="40" cy="40.2" r="28.2" fill="#8e8e8e"/><path d="M14,30 A28.2,28.2 0 0 1 66,30" fill="none" stroke="rgba(255,255,255,.16)" stroke-width="1.2"/><rect x="39.5" y="4" width="1.1" height="8" fill="#39c957"/><rect x="39" y="16" width="2" height="6" fill="#111"/></svg>
<div class="db" style="left:1668px;top:1803.3px;width:53.6px;height:35.3px;"></div>
<div class="db" style="left:1726.4px;top:1803.3px;width:53.6px;height:35.3px;"></div>
<span class="t" style="left:1678.80px;top:1811.22px;font-size:21px;line-height:21px;color:#fff;letter-spacing:0.609px;">0.0</span>
<svg style="left:1658px;top:1880px;" width="134" height="107" viewBox="0 0 134 107"><rect x="8" y="3" width="22" height="2" fill="#929292"/><rect x="8" y="37" width="22" height="2" fill="#929292"/><rect x="8" y="105" width="22" height="2" fill="#929292"/><rect x="22" y="13.3" width="8" height="2" fill="#929292"/><rect x="22" y="24.7" width="8" height="2" fill="#929292"/><rect x="22" y="48.5" width="8" height="2" fill="#929292"/><rect x="22" y="59.5" width="8" height="2" fill="#929292"/><rect x="22" y="82.5" width="8" height="2" fill="#929292"/><rect x="22" y="94" width="8" height="2" fill="#929292"/><rect x="8" y="70" width="10" height="2.4" fill="#fff"/><rect x="32" y="0.5" width="4" height="110" rx="2" fill="#343434"/></svg>
<div class="cap" style="left:1675px;top:1917px;width:34px;height:70px;"></div>
<svg style="left:1658px;top:1880px;" width="134" height="107" viewBox="0 0 134 107"><rect x="84" y="3" width="6" height="2" fill="#9c9c9c"/><rect x="88" y="9" width="2" height="2" fill="#9c9c9c"/><rect x="88" y="15" width="2" height="2" fill="#9c9c9c"/><rect x="84" y="21" width="6" height="2" fill="#9c9c9c"/><rect x="88" y="27" width="2" height="2" fill="#9c9c9c"/><rect x="88" y="33" width="2" height="2" fill="#9c9c9c"/><rect x="84" y="39" width="6" height="2" fill="#9c9c9c"/><rect x="88" y="45" width="2" height="2" fill="#9c9c9c"/><rect x="88" y="51" width="2" height="2" fill="#9c9c9c"/><rect x="84" y="57" width="6" height="2" fill="#9c9c9c"/><rect x="88" y="63" width="2" height="2" fill="#9c9c9c"/><rect x="88" y="69" width="2" height="2" fill="#9c9c9c"/><rect x="84" y="75" width="6" height="2" fill="#9c9c9c"/><rect x="88" y="81" width="2" height="2" fill="#9c9c9c"/><rect x="88" y="87" width="2" height="2" fill="#9c9c9c"/><rect x="84" y="93" width="6" height="2" fill="#9c9c9c"/><rect x="88" y="99" width="2" height="2" fill="#9c9c9c"/><rect x="88" y="105" width="2" height="2" fill="#9c9c9c"/></svg>
<div style="left:1748.2px;top:1879px;width:13.4px;height:110px;background:#353535;border-radius:3.5px 3.5px 0 0;"></div>
<span class="t" style="left:1730.98px;top:1877.37px;font-size:13.5px;line-height:13.5px;color:#c6c6c6;">0</span>
<span class="t" style="left:1730.98px;top:1895.37px;font-size:13.5px;line-height:13.5px;color:#c6c6c6;">3</span>
<span class="t" style="left:1730.98px;top:1913.37px;font-size:13.5px;line-height:13.5px;color:#c6c6c6;">6</span>
<span class="t" style="left:1730.98px;top:1931.37px;font-size:13.5px;line-height:13.5px;color:#c6c6c6;">9</span>
<span class="t" style="left:1723.47px;top:1949.37px;font-size:13.5px;line-height:13.5px;color:#c6c6c6;">12</span>
<span class="t" style="left:1723.47px;top:1967.37px;font-size:13.5px;line-height:13.5px;color:#c6c6c6;">15</span>
<div style="left:1924px;top:1520px;width:2px;height:467px;background:#4a4a4a;"></div>
<div class="rd" style="left:1802px;top:1504px;width:112.5px;height:33px;"></div>
<span class="t" style="left:1829.88px;top:1510.08px;font-size:22px;line-height:22px;color:#e4e4e4;">Bus 4</span>
<div class="gs" style="left:1802px;top:1549px;width:112px;height:35.7px;"></div>
<div class="rd" style="left:1802px;top:1596.6px;width:112.5px;height:33px;"></div>
<span class="t" style="left:1831.20px;top:1602.38px;font-size:22px;line-height:22px;color:#60e07c;letter-spacing:-0.398px;">Read</span>
<div class="ico" style="left:1828px;top:1651px;width:60px;height:44px;"></div>
<svg style="left:1828px;top:1651px;" width="60" height="44" viewBox="0 0 60 44"><path d="M8,21 v2 M12,18 v8 M16,19 v6 M20,14 v16 M24,18 v8 M28,14 v16 M32,8 v28 M36,14 v16 M40,18 v8 M44,15 v14 M48,18 v8 M52,21 v2 " fill="none" stroke="#4db6ff" stroke-width="2.2" stroke-linecap="round"/></svg>
<svg style="left:1819px;top:1715.8px;" width="80" height="80" viewBox="0 0 80 80"><path d="M23.90,67.89 A32.2,32.2 0 1 1 56.10,67.89" fill="none" stroke="#383838" stroke-width="7.6"/><circle cx="40" cy="41.6" r="28.6" fill="rgba(0,0,0,.22)"/><circle cx="40" cy="40.2" r="28.2" fill="#8e8e8e"/><path d="M14,30 A28.2,28.2 0 0 1 66,30" fill="none" stroke="rgba(255,255,255,.16)" stroke-width="1.2"/><rect x="39.5" y="4" width="1.1" height="8" fill="#39c957"/><rect x="39" y="16" width="2" height="6" fill="#111"/></svg>
<div class="db" style="left:1802px;top:1803.3px;width:53.6px;height:35.3px;"></div>
<div class="db" style="left:1860.4px;top:1803.3px;width:53.6px;height:35.3px;"></div>
<span class="t" style="left:1812.80px;top:1811.22px;font-size:21px;line-height:21px;color:#fff;letter-spacing:0.609px;">0.0</span>
<svg style="left:1792px;top:1880px;" width="134" height="107" viewBox="0 0 134 107"><rect x="8" y="3" width="22" height="2" fill="#929292"/><rect x="8" y="37" width="22" height="2" fill="#929292"/><rect x="8" y="105" width="22" height="2" fill="#929292"/><rect x="22" y="13.3" width="8" height="2" fill="#929292"/><rect x="22" y="24.7" width="8" height="2" fill="#929292"/><rect x="22" y="48.5" width="8" height="2" fill="#929292"/><rect x="22" y="59.5" width="8" height="2" fill="#929292"/><rect x="22" y="82.5" width="8" height="2" fill="#929292"/><rect x="22" y="94" width="8" height="2" fill="#929292"/><rect x="8" y="70" width="10" height="2.4" fill="#fff"/><rect x="32" y="0.5" width="4" height="110" rx="2" fill="#343434"/></svg>
<div class="cap" style="left:1809px;top:1917px;width:34px;height:70px;"></div>
<svg style="left:1792px;top:1880px;" width="134" height="107" viewBox="0 0 134 107"><rect x="84" y="3" width="6" height="2" fill="#9c9c9c"/><rect x="88" y="9" width="2" height="2" fill="#9c9c9c"/><rect x="88" y="15" width="2" height="2" fill="#9c9c9c"/><rect x="84" y="21" width="6" height="2" fill="#9c9c9c"/><rect x="88" y="27" width="2" height="2" fill="#9c9c9c"/><rect x="88" y="33" width="2" height="2" fill="#9c9c9c"/><rect x="84" y="39" width="6" height="2" fill="#9c9c9c"/><rect x="88" y="45" width="2" height="2" fill="#9c9c9c"/><rect x="88" y="51" width="2" height="2" fill="#9c9c9c"/><rect x="84" y="57" width="6" height="2" fill="#9c9c9c"/><rect x="88" y="63" width="2" height="2" fill="#9c9c9c"/><rect x="88" y="69" width="2" height="2" fill="#9c9c9c"/><rect x="84" y="75" width="6" height="2" fill="#9c9c9c"/><rect x="88" y="81" width="2" height="2" fill="#9c9c9c"/><rect x="88" y="87" width="2" height="2" fill="#9c9c9c"/><rect x="84" y="93" width="6" height="2" fill="#9c9c9c"/><rect x="88" y="99" width="2" height="2" fill="#9c9c9c"/><rect x="88" y="105" width="2" height="2" fill="#9c9c9c"/></svg>
<div style="left:1882.2px;top:1879px;width:13.4px;height:110px;background:#353535;border-radius:3.5px 3.5px 0 0;"></div>
<span class="t" style="left:1864.98px;top:1877.37px;font-size:13.5px;line-height:13.5px;color:#c6c6c6;">0</span>
<span class="t" style="left:1864.98px;top:1895.37px;font-size:13.5px;line-height:13.5px;color:#c6c6c6;">3</span>
<span class="t" style="left:1864.98px;top:1913.37px;font-size:13.5px;line-height:13.5px;color:#c6c6c6;">6</span>
<span class="t" style="left:1864.98px;top:1931.37px;font-size:13.5px;line-height:13.5px;color:#c6c6c6;">9</span>
<span class="t" style="left:1857.47px;top:1949.37px;font-size:13.5px;line-height:13.5px;color:#c6c6c6;">12</span>
<span class="t" style="left:1857.47px;top:1967.37px;font-size:13.5px;line-height:13.5px;color:#c6c6c6;">15</span>
<div style="left:2058px;top:1520px;width:2px;height:467px;background:#4a4a4a;"></div>
<div class="rd" style="left:1936px;top:1504px;width:112.5px;height:33px;"></div>
<span class="t" style="left:1960.83px;top:1510.08px;font-size:22px;line-height:22px;color:#e4e4e4;">St Out</span>
<div class="gs" style="left:1936px;top:1549px;width:112px;height:35.7px;"></div>
<div class="rd" style="left:1936px;top:1596.6px;width:112.5px;height:33px;"></div>
<span class="t" style="left:1965.20px;top:1602.38px;font-size:22px;line-height:22px;color:#e9e9e9;letter-spacing:-0.398px;">Read</span>
<div class="icoy" style="left:1962px;top:1651px;width:60px;height:44px;"></div>
<svg style="left:1962px;top:1651px;" width="60" height="44" viewBox="0 0 60 44"><circle cx="30" cy="22" r="15.3" fill="#fff44f"/><rect x="29" y="9" width="2.2" height="13" fill="#222"/></svg>
<svg style="left:1953px;top:1715.8px;" width="80" height="80" viewBox="0 0 80 80"><path d="M23.90,67.89 A32.2,32.2 0 1 1 56.10,67.89" fill="none" stroke="#383838" stroke-width="7.6"/><circle cx="40" cy="41.6" r="28.6" fill="rgba(0,0,0,.22)"/><circle cx="40" cy="40.2" r="28.2" fill="#8e8e8e"/><path d="M14,30 A28.2,28.2 0 0 1 66,30" fill="none" stroke="rgba(255,255,255,.16)" stroke-width="1.2"/><rect x="39.5" y="4" width="1.1" height="8" fill="#39c957"/><rect x="39" y="16" width="2" height="6" fill="#111"/></svg>
<div class="db" style="left:1936px;top:1803.3px;width:53.6px;height:35.3px;"></div>
<div class="db" style="left:1994.4px;top:1803.3px;width:53.6px;height:35.3px;"></div>
<span class="t" style="left:1946.80px;top:1811.22px;font-size:21px;line-height:21px;color:#fff;letter-spacing:0.609px;">0.0</span>
<svg style="left:1926px;top:1880px;" width="134" height="107" viewBox="0 0 134 107"><rect x="8" y="3" width="22" height="2" fill="#929292"/><rect x="8" y="37" width="22" height="2" fill="#929292"/><rect x="8" y="105" width="22" height="2" fill="#929292"/><rect x="22" y="13.3" width="8" height="2" fill="#929292"/><rect x="22" y="24.7" width="8" height="2" fill="#929292"/><rect x="22" y="48.5" width="8" height="2" fill="#929292"/><rect x="22" y="59.5" width="8" height="2" fill="#929292"/><rect x="22" y="82.5" width="8" height="2" fill="#929292"/><rect x="22" y="94" width="8" height="2" fill="#929292"/><rect x="8" y="70" width="10" height="2.4" fill="#fff"/><rect x="32" y="0.5" width="4" height="110" rx="2" fill="#343434"/></svg>
<div class="cap" style="left:1943px;top:1917px;width:34px;height:70px;"></div>
<svg style="left:1926px;top:1880px;" width="134" height="107" viewBox="0 0 134 107"><rect x="84" y="3" width="6" height="2" fill="#9c9c9c"/><rect x="88" y="9" width="2" height="2" fill="#9c9c9c"/><rect x="88" y="15" width="2" height="2" fill="#9c9c9c"/><rect x="84" y="21" width="6" height="2" fill="#9c9c9c"/><rect x="88" y="27" width="2" height="2" fill="#9c9c9c"/><rect x="88" y="33" width="2" height="2" fill="#9c9c9c"/><rect x="84" y="39" width="6" height="2" fill="#9c9c9c"/><rect x="88" y="45" width="2" height="2" fill="#9c9c9c"/><rect x="88" y="51" width="2" height="2" fill="#9c9c9c"/><rect x="84" y="57" width="6" height="2" fill="#9c9c9c"/><rect x="88" y="63" width="2" height="2" fill="#9c9c9c"/><rect x="88" y="69" width="2" height="2" fill="#9c9c9c"/><rect x="84" y="75" width="6" height="2" fill="#9c9c9c"/><rect x="88" y="81" width="2" height="2" fill="#9c9c9c"/><rect x="88" y="87" width="2" height="2" fill="#9c9c9c"/><rect x="84" y="93" width="6" height="2" fill="#9c9c9c"/><rect x="88" y="99" width="2" height="2" fill="#9c9c9c"/><rect x="88" y="105" width="2" height="2" fill="#9c9c9c"/></svg>
<div style="left:2016.2px;top:1879px;width:23.6px;height:110px;background:#353535;border-radius:3.5px 3.5px 0 0;"></div>
<span class="t" style="left:1998.98px;top:1877.37px;font-size:13.5px;line-height:13.5px;color:#c6c6c6;">0</span>
<span class="t" style="left:1998.98px;top:1895.37px;font-size:13.5px;line-height:13.5px;color:#c6c6c6;">3</span>
<span class="t" style="left:1998.98px;top:1913.37px;font-size:13.5px;line-height:13.5px;color:#c6c6c6;">6</span>
<span class="t" style="left:1998.98px;top:1931.37px;font-size:13.5px;line-height:13.5px;color:#c6c6c6;">9</span>
<span class="t" style="left:1991.47px;top:1949.37px;font-size:13.5px;line-height:13.5px;color:#c6c6c6;">12</span>
<span class="t" style="left:1991.47px;top:1967.37px;font-size:13.5px;line-height:13.5px;color:#c6c6c6;">15</span>
<div style="left:2192px;top:1520px;width:2px;height:467px;background:#4a4a4a;"></div>
<div class="rd" style="left:2070px;top:1504px;width:112.5px;height:33px;"></div>
<span class="t" style="left:2094.83px;top:1510.08px;font-size:22px;line-height:22px;color:#e4e4e4;">St Out</span>
<div class="gs" style="left:2070px;top:1549px;width:112px;height:35.7px;"></div>
<div class="rd" style="left:2070px;top:1596.6px;width:112.5px;height:33px;"></div>
<span class="t" style="left:2099.20px;top:1602.38px;font-size:22px;line-height:22px;color:#e9e9e9;letter-spacing:-0.398px;">Read</span>
<div class="icoy" style="left:2096px;top:1651px;width:60px;height:44px;"></div>
<svg style="left:2096px;top:1651px;" width="60" height="44" viewBox="0 0 60 44"><circle cx="30" cy="22" r="15.3" fill="#fff44f"/><rect x="29" y="9" width="2.2" height="13" fill="#222"/></svg>
<svg style="left:2087px;top:1715.8px;" width="80" height="80" viewBox="0 0 80 80"><path d="M23.90,67.89 A32.2,32.2 0 1 1 56.10,67.89" fill="none" stroke="#383838" stroke-width="7.6"/><circle cx="40" cy="41.6" r="28.6" fill="rgba(0,0,0,.22)"/><circle cx="40" cy="40.2" r="28.2" fill="#8e8e8e"/><path d="M14,30 A28.2,28.2 0 0 1 66,30" fill="none" stroke="rgba(255,255,255,.16)" stroke-width="1.2"/><rect x="39.5" y="4" width="1.1" height="8" fill="#39c957"/><rect x="39" y="16" width="2" height="6" fill="#111"/></svg>
<div class="db" style="left:2070px;top:1803.3px;width:53.6px;height:35.3px;"></div>
<div class="db" style="left:2128.4px;top:1803.3px;width:53.6px;height:35.3px;"></div>
<span class="t" style="left:2080.80px;top:1811.22px;font-size:21px;line-height:21px;color:#fff;letter-spacing:0.609px;">0.0</span>
<svg style="left:2060px;top:1880px;" width="134" height="107" viewBox="0 0 134 107"><rect x="8" y="3" width="22" height="2" fill="#929292"/><rect x="8" y="37" width="22" height="2" fill="#929292"/><rect x="8" y="105" width="22" height="2" fill="#929292"/><rect x="22" y="13.3" width="8" height="2" fill="#929292"/><rect x="22" y="24.7" width="8" height="2" fill="#929292"/><rect x="22" y="48.5" width="8" height="2" fill="#929292"/><rect x="22" y="59.5" width="8" height="2" fill="#929292"/><rect x="22" y="82.5" width="8" height="2" fill="#929292"/><rect x="22" y="94" width="8" height="2" fill="#929292"/><rect x="8" y="70" width="10" height="2.4" fill="#fff"/><rect x="32" y="0.5" width="4" height="110" rx="2" fill="#343434"/></svg>
<div class="cap" style="left:2077px;top:1917px;width:34px;height:70px;"></div>
<svg style="left:2060px;top:1880px;" width="134" height="107" viewBox="0 0 134 107"><rect x="84" y="3" width="6" height="2" fill="#9c9c9c"/><rect x="88" y="9" width="2" height="2" fill="#9c9c9c"/><rect x="88" y="15" width="2" height="2" fill="#9c9c9c"/><rect x="84" y="21" width="6" height="2" fill="#9c9c9c"/><rect x="88" y="27" width="2" height="2" fill="#9c9c9c"/><rect x="88" y="33" width="2" height="2" fill="#9c9c9c"/><rect x="84" y="39" width="6" height="2" fill="#9c9c9c"/><rect x="88" y="45" width="2" height="2" fill="#9c9c9c"/><rect x="88" y="51" width="2" height="2" fill="#9c9c9c"/><rect x="84" y="57" width="6" height="2" fill="#9c9c9c"/><rect x="88" y="63" width="2" height="2" fill="#9c9c9c"/><rect x="88" y="69" width="2" height="2" fill="#9c9c9c"/><rect x="84" y="75" width="6" height="2" fill="#9c9c9c"/><rect x="88" y="81" width="2" height="2" fill="#9c9c9c"/><rect x="88" y="87" width="2" height="2" fill="#9c9c9c"/><rect x="84" y="93" width="6" height="2" fill="#9c9c9c"/><rect x="88" y="99" width="2" height="2" fill="#9c9c9c"/><rect x="88" y="105" width="2" height="2" fill="#9c9c9c"/></svg>
<div style="left:2150.2px;top:1879px;width:23.6px;height:110px;background:#353535;border-radius:3.5px 3.5px 0 0;"></div>
<span class="t" style="left:2132.98px;top:1877.37px;font-size:13.5px;line-height:13.5px;color:#c6c6c6;">0</span>
<span class="t" style="left:2132.98px;top:1895.37px;font-size:13.5px;line-height:13.5px;color:#c6c6c6;">3</span>
<span class="t" style="left:2132.98px;top:1913.37px;font-size:13.5px;line-height:13.5px;color:#c6c6c6;">6</span>
<span class="t" style="left:2132.98px;top:1931.37px;font-size:13.5px;line-height:13.5px;color:#c6c6c6;">9</span>
<span class="t" style="left:2125.47px;top:1949.37px;font-size:13.5px;line-height:13.5px;color:#c6c6c6;">12</span>
<span class="t" style="left:2125.47px;top:1967.37px;font-size:13.5px;line-height:13.5px;color:#c6c6c6;">15</span>
<div style="left:2326px;top:1520px;width:2px;height:467px;background:#4a4a4a;"></div>
<div class="rd" style="left:2204px;top:1504px;width:112.5px;height:33px;"></div>
<span class="t" style="left:2228.83px;top:1510.08px;font-size:22px;line-height:22px;color:#e4e4e4;">St Out</span>
<div class="gs" style="left:2204px;top:1549px;width:112px;height:35.7px;"></div>
<div class="rd" style="left:2204px;top:1596.6px;width:112.5px;height:33px;"></div>
<span class="t" style="left:2233.20px;top:1602.38px;font-size:22px;line-height:22px;color:#e9e9e9;letter-spacing:-0.398px;">Read</span>
<div class="icoy" style="left:2230px;top:1651px;width:60px;height:44px;"></div>
<svg style="left:2230px;top:1651px;" width="60" height="44" viewBox="0 0 60 44"><circle cx="30" cy="22" r="15.3" fill="#fff44f"/><rect x="29" y="9" width="2.2" height="13" fill="#222"/></svg>
<svg style="left:2221px;top:1715.8px;" width="80" height="80" viewBox="0 0 80 80"><path d="M23.90,67.89 A32.2,32.2 0 1 1 56.10,67.89" fill="none" stroke="#383838" stroke-width="7.6"/><circle cx="40" cy="41.6" r="28.6" fill="rgba(0,0,0,.22)"/><circle cx="40" cy="40.2" r="28.2" fill="#8e8e8e"/><path d="M14,30 A28.2,28.2 0 0 1 66,30" fill="none" stroke="rgba(255,255,255,.16)" stroke-width="1.2"/><rect x="39.5" y="4" width="1.1" height="8" fill="#39c957"/><rect x="39" y="16" width="2" height="6" fill="#111"/></svg>
<div class="db" style="left:2204px;top:1803.3px;width:53.6px;height:35.3px;"></div>
<div class="db" style="left:2262.4px;top:1803.3px;width:53.6px;height:35.3px;"></div>
<span class="t" style="left:2214.80px;top:1811.22px;font-size:21px;line-height:21px;color:#fff;letter-spacing:0.609px;">0.0</span>
<svg style="left:2194px;top:1880px;" width="134" height="107" viewBox="0 0 134 107"><rect x="8" y="3" width="22" height="2" fill="#929292"/><rect x="8" y="37" width="22" height="2" fill="#929292"/><rect x="8" y="105" width="22" height="2" fill="#929292"/><rect x="22" y="13.3" width="8" height="2" fill="#929292"/><rect x="22" y="24.7" width="8" height="2" fill="#929292"/><rect x="22" y="48.5" width="8" height="2" fill="#929292"/><rect x="22" y="59.5" width="8" height="2" fill="#929292"/><rect x="22" y="82.5" width="8" height="2" fill="#929292"/><rect x="22" y="94" width="8" height="2" fill="#929292"/><rect x="8" y="70" width="10" height="2.4" fill="#fff"/><rect x="32" y="0.5" width="4" height="110" rx="2" fill="#343434"/></svg>
<div class="cap" style="left:2211px;top:1917px;width:34px;height:70px;"></div>
<svg style="left:2194px;top:1880px;" width="134" height="107" viewBox="0 0 134 107"><rect x="84" y="3" width="6" height="2" fill="#9c9c9c"/><rect x="88" y="9" width="2" height="2" fill="#9c9c9c"/><rect x="88" y="15" width="2" height="2" fill="#9c9c9c"/><rect x="84" y="21" width="6" height="2" fill="#9c9c9c"/><rect x="88" y="27" width="2" height="2" fill="#9c9c9c"/><rect x="88" y="33" width="2" height="2" fill="#9c9c9c"/><rect x="84" y="39" width="6" height="2" fill="#9c9c9c"/><rect x="88" y="45" width="2" height="2" fill="#9c9c9c"/><rect x="88" y="51" width="2" height="2" fill="#9c9c9c"/><rect x="84" y="57" width="6" height="2" fill="#9c9c9c"/><rect x="88" y="63" width="2" height="2" fill="#9c9c9c"/><rect x="88" y="69" width="2" height="2" fill="#9c9c9c"/><rect x="84" y="75" width="6" height="2" fill="#9c9c9c"/><rect x="88" y="81" width="2" height="2" fill="#9c9c9c"/><rect x="88" y="87" width="2" height="2" fill="#9c9c9c"/><rect x="84" y="93" width="6" height="2" fill="#9c9c9c"/><rect x="88" y="99" width="2" height="2" fill="#9c9c9c"/><rect x="88" y="105" width="2" height="2" fill="#9c9c9c"/></svg>
<div style="left:2284.2px;top:1879px;width:23.6px;height:110px;background:#353535;border-radius:3.5px 3.5px 0 0;"></div>
<span class="t" style="left:2266.98px;top:1877.37px;font-size:13.5px;line-height:13.5px;color:#c6c6c6;">0</span>
<span class="t" style="left:2266.98px;top:1895.37px;font-size:13.5px;line-height:13.5px;color:#c6c6c6;">3</span>
<span class="t" style="left:2266.98px;top:1913.37px;font-size:13.5px;line-height:13.5px;color:#c6c6c6;">6</span>
<span class="t" style="left:2266.98px;top:1931.37px;font-size:13.5px;line-height:13.5px;color:#c6c6c6;">9</span>
<span class="t" style="left:2259.47px;top:1949.37px;font-size:13.5px;line-height:13.5px;color:#c6c6c6;">12</span>
<span class="t" style="left:2259.47px;top:1967.37px;font-size:13.5px;line-height:13.5px;color:#c6c6c6;">15</span>
<div style="left:2460px;top:1520px;width:2px;height:467px;background:#4a4a4a;"></div>
<div class="rd" style="left:2338px;top:1504px;width:112.5px;height:33px;"></div>
<span class="t" style="left:2362.83px;top:1510.08px;font-size:22px;line-height:22px;color:#e4e4e4;">St Out</span>
<div class="gs" style="left:2338px;top:1549px;width:112px;height:35.7px;"></div>
<div class="rd" style="left:2338px;top:1596.6px;width:112.5px;height:33px;"></div>
<span class="t" style="left:2367.20px;top:1602.38px;font-size:22px;line-height:22px;color:#e9e9e9;letter-spacing:-0.398px;">Read</span>
<div class="icoy" style="left:2364px;top:1651px;width:60px;height:44px;"></div>
<svg style="left:2364px;top:1651px;" width="60" height="44" viewBox="0 0 60 44"><circle cx="30" cy="22" r="15.3" fill="#fff44f"/><rect x="29" y="9" width="2.2" height="13" fill="#222"/></svg>
<svg style="left:2355px;top:1715.8px;" width="80" height="80" viewBox="0 0 80 80"><path d="M23.90,67.89 A32.2,32.2 0 1 1 56.10,67.89" fill="none" stroke="#383838" stroke-width="7.6"/><circle cx="40" cy="41.6" r="28.6" fill="rgba(0,0,0,.22)"/><circle cx="40" cy="40.2" r="28.2" fill="#8e8e8e"/><path d="M14,30 A28.2,28.2 0 0 1 66,30" fill="none" stroke="rgba(255,255,255,.16)" stroke-width="1.2"/><rect x="39.5" y="4" width="1.1" height="8" fill="#39c957"/><rect x="39" y="16" width="2" height="6" fill="#111"/></svg>
<div class="db" style="left:2338px;top:1803.3px;width:53.6px;height:35.3px;"></div>
<div class="db" style="left:2396.4px;top:1803.3px;width:53.6px;height:35.3px;"></div>
<span class="t" style="left:2348.80px;top:1811.22px;font-size:21px;line-height:21px;color:#fff;letter-spacing:0.609px;">0.0</span>
<svg style="left:2328px;top:1880px;" width="134" height="107" viewBox="0 0 134 107"><rect x="8" y="3" width="22" height="2" fill="#929292"/><rect x="8" y="37" width="22" height="2" fill="#929292"/><rect x="8" y="105" width="22" height="2" fill="#929292"/><rect x="22" y="13.3" width="8" height="2" fill="#929292"/><rect x="22" y="24.7" width="8" height="2" fill="#929292"/><rect x="22" y="48.5" width="8" height="2" fill="#929292"/><rect x="22" y="59.5" width="8" height="2" fill="#929292"/><rect x="22" y="82.5" width="8" height="2" fill="#929292"/><rect x="22" y="94" width="8" height="2" fill="#929292"/><rect x="8" y="70" width="10" height="2.4" fill="#fff"/><rect x="32" y="0.5" width="4" height="110" rx="2" fill="#343434"/></svg>
<div class="cap" style="left:2345px;top:1917px;width:34px;height:70px;"></div>
<svg style="left:2328px;top:1880px;" width="134" height="107" viewBox="0 0 134 107"><rect x="84" y="3" width="6" height="2" fill="#9c9c9c"/><rect x="88" y="9" width="2" height="2" fill="#9c9c9c"/><rect x="88" y="15" width="2" height="2" fill="#9c9c9c"/><rect x="84" y="21" width="6" height="2" fill="#9c9c9c"/><rect x="88" y="27" width="2" height="2" fill="#9c9c9c"/><rect x="88" y="33" width="2" height="2" fill="#9c9c9c"/><rect x="84" y="39" width="6" height="2" fill="#9c9c9c"/><rect x="88" y="45" width="2" height="2" fill="#9c9c9c"/><rect x="88" y="51" width="2" height="2" fill="#9c9c9c"/><rect x="84" y="57" width="6" height="2" fill="#9c9c9c"/><rect x="88" y="63" width="2" height="2" fill="#9c9c9c"/><rect x="88" y="69" width="2" height="2" fill="#9c9c9c"/><rect x="84" y="75" width="6" height="2" fill="#9c9c9c"/><rect x="88" y="81" width="2" height="2" fill="#9c9c9c"/><rect x="88" y="87" width="2" height="2" fill="#9c9c9c"/><rect x="84" y="93" width="6" height="2" fill="#9c9c9c"/><rect x="88" y="99" width="2" height="2" fill="#9c9c9c"/><rect x="88" y="105" width="2" height="2" fill="#9c9c9c"/></svg>
<div style="left:2418.2px;top:1879px;width:23.6px;height:110px;background:#353535;border-radius:3.5px 3.5px 0 0;"></div>
<span class="t" style="left:2400.98px;top:1877.37px;font-size:13.5px;line-height:13.5px;color:#c6c6c6;">0</span>
<span class="t" style="left:2400.98px;top:1895.37px;font-size:13.5px;line-height:13.5px;color:#c6c6c6;">3</span>
<span class="t" style="left:2400.98px;top:1913.37px;font-size:13.5px;line-height:13.5px;color:#c6c6c6;">6</span>
<span class="t" style="left:2400.98px;top:1931.37px;font-size:13.5px;line-height:13.5px;color:#c6c6c6;">9</span>
<span class="t" style="left:2393.47px;top:1949.37px;font-size:13.5px;line-height:13.5px;color:#c6c6c6;">12</span>
<span class="t" style="left:2393.47px;top:1967.37px;font-size:13.5px;line-height:13.5px;color:#c6c6c6;">15</span>
<div style="left:2594px;top:1520px;width:2px;height:467px;background:#4a4a4a;"></div>
<div class="rd" style="left:2472px;top:1504px;width:112.5px;height:33px;"></div>
<span class="t" style="left:2496.83px;top:1510.08px;font-size:22px;line-height:22px;color:#e4e4e4;">St Out</span>
<div class="gs" style="left:2472px;top:1549px;width:112px;height:35.7px;"></div>
<div class="rd" style="left:2472px;top:1596.6px;width:112.5px;height:33px;"></div>
<span class="t" style="left:2501.20px;top:1602.38px;font-size:22px;line-height:22px;color:#60e07c;letter-spacing:-0.398px;">Read</span>
<div class="icoy" style="left:2498px;top:1651px;width:60px;height:44px;"></div>
<svg style="left:2498px;top:1651px;" width="60" height="44" viewBox="0 0 60 44"><circle cx="30" cy="22" r="15.3" fill="#fff44f"/><rect x="29" y="9" width="2.2" height="13" fill="#222"/></svg>
<svg style="left:2489px;top:1715.8px;" width="80" height="80" viewBox="0 0 80 80"><path d="M23.90,67.89 A32.2,32.2 0 1 1 56.10,67.89" fill="none" stroke="#383838" stroke-width="7.6"/><circle cx="40" cy="41.6" r="28.6" fill="rgba(0,0,0,.22)"/><circle cx="40" cy="40.2" r="28.2" fill="#8e8e8e"/><path d="M14,30 A28.2,28.2 0 0 1 66,30" fill="none" stroke="rgba(255,255,255,.16)" stroke-width="1.2"/><rect x="39.5" y="4" width="1.1" height="8" fill="#39c957"/><rect x="39" y="16" width="2" height="6" fill="#111"/></svg>
<div class="db" style="left:2472px;top:1803.3px;width:53.6px;height:35.3px;"></div>
<div class="db" style="left:2530.4px;top:1803.3px;width:53.6px;height:35.3px;"></div>
<span class="t" style="left:2482.80px;top:1811.22px;font-size:21px;line-height:21px;color:#fff;letter-spacing:0.609px;">0.0</span>
<svg style="left:2462px;top:1880px;" width="134" height="107" viewBox="0 0 134 107"><rect x="8" y="3" width="22" height="2" fill="#929292"/><rect x="8" y="37" width="22" height="2" fill="#929292"/><rect x="8" y="105" width="22" height="2" fill="#929292"/><rect x="22" y="13.3" width="8" height="2" fill="#929292"/><rect x="22" y="24.7" width="8" height="2" fill="#929292"/><rect x="22" y="48.5" width="8" height="2" fill="#929292"/><rect x="22" y="59.5" width="8" height="2" fill="#929292"/><rect x="22" y="82.5" width="8" height="2" fill="#929292"/><rect x="22" y="94" width="8" height="2" fill="#929292"/><rect x="8" y="70" width="10" height="2.4" fill="#fff"/><rect x="32" y="0.5" width="4" height="110" rx="2" fill="#343434"/></svg>
<div class="cap" style="left:2479px;top:1917px;width:34px;height:70px;"></div>
<svg style="left:2462px;top:1880px;" width="134" height="107" viewBox="0 0 134 107"><rect x="84" y="3" width="6" height="2" fill="#9c9c9c"/><rect x="88" y="9" width="2" height="2" fill="#9c9c9c"/><rect x="88" y="15" width="2" height="2" fill="#9c9c9c"/><rect x="84" y="21" width="6" height="2" fill="#9c9c9c"/><rect x="88" y="27" width="2" height="2" fill="#9c9c9c"/><rect x="88" y="33" width="2" height="2" fill="#9c9c9c"/><rect x="84" y="39" width="6" height="2" fill="#9c9c9c"/><rect x="88" y="45" width="2" height="2" fill="#9c9c9c"/><rect x="88" y="51" width="2" height="2" fill="#9c9c9c"/><rect x="84" y="57" width="6" height="2" fill="#9c9c9c"/><rect x="88" y="63" width="2" height="2" fill="#9c9c9c"/><rect x="88" y="69" width="2" height="2" fill="#9c9c9c"/><rect x="84" y="75" width="6" height="2" fill="#9c9c9c"/><rect x="88" y="81" width="2" height="2" fill="#9c9c9c"/><rect x="88" y="87" width="2" height="2" fill="#9c9c9c"/><rect x="84" y="93" width="6" height="2" fill="#9c9c9c"/><rect x="88" y="99" width="2" height="2" fill="#9c9c9c"/><rect x="88" y="105" width="2" height="2" fill="#9c9c9c"/></svg>
<div style="left:2552.2px;top:1879px;width:23.6px;height:110px;background:#353535;border-radius:3.5px 3.5px 0 0;"></div>
<span class="t" style="left:2534.98px;top:1877.37px;font-size:13.5px;line-height:13.5px;color:#c6c6c6;">0</span>
<span class="t" style="left:2534.98px;top:1895.37px;font-size:13.5px;line-height:13.5px;color:#c6c6c6;">3</span>
<span class="t" style="left:2534.98px;top:1913.37px;font-size:13.5px;line-height:13.5px;color:#c6c6c6;">6</span>
<span class="t" style="left:2534.98px;top:1931.37px;font-size:13.5px;line-height:13.5px;color:#c6c6c6;">9</span>
<span class="t" style="left:2527.47px;top:1949.37px;font-size:13.5px;line-height:13.5px;color:#c6c6c6;">12</span>
<span class="t" style="left:2527.47px;top:1967.37px;font-size:13.5px;line-height:13.5px;color:#c6c6c6;">15</span>
<div style="left:2728px;top:1520px;width:2px;height:467px;background:#4a4a4a;"></div>
<div class="rd" style="left:2606px;top:1504px;width:112.5px;height:33px;"></div>
<span class="t" style="left:2630.83px;top:1510.08px;font-size:22px;line-height:22px;color:#e4e4e4;">St Out</span>
<div class="gs" style="left:2606px;top:1549px;width:112px;height:35.7px;"></div>
<div class="rd" style="left:2606px;top:1596.6px;width:112.5px;height:33px;"></div>
<span class="t" style="left:2635.20px;top:1602.38px;font-size:22px;line-height:22px;color:#60e07c;letter-spacing:-0.398px;">Read</span>
<div class="icoy" style="left:2632px;top:1651px;width:60px;height:44px;"></div>
<svg style="left:2632px;top:1651px;" width="60" height="44" viewBox="0 0 60 44"><circle cx="30" cy="22" r="15.3" fill="#fff44f"/><rect x="29" y="9" width="2.2" height="13" fill="#222"/></svg>
<svg style="left:2623px;top:1715.8px;" width="80" height="80" viewBox="0 0 80 80"><path d="M23.90,67.89 A32.2,32.2 0 1 1 56.10,67.89" fill="none" stroke="#383838" stroke-width="7.6"/><circle cx="40" cy="41.6" r="28.6" fill="rgba(0,0,0,.22)"/><circle cx="40" cy="40.2" r="28.2" fill="#8e8e8e"/><path d="M14,30 A28.2,28.2 0 0 1 66,30" fill="none" stroke="rgba(255,255,255,.16)" stroke-width="1.2"/><rect x="39.5" y="4" width="1.1" height="8" fill="#39c957"/><rect x="39" y="16" width="2" height="6" fill="#111"/></svg>
<div class="db" style="left:2606px;top:1803.3px;width:53.6px;height:35.3px;"></div>
<div class="db" style="left:2664.4px;top:1803.3px;width:53.6px;height:35.3px;"></div>
<span class="t" style="left:2616.80px;top:1811.22px;font-size:21px;line-height:21px;color:#fff;letter-spacing:0.609px;">0.0</span>
<svg style="left:2596px;top:1880px;" width="134" height="107" viewBox="0 0 134 107"><rect x="8" y="3" width="22" height="2" fill="#929292"/><rect x="8" y="37" width="22" height="2" fill="#929292"/><rect x="8" y="105" width="22" height="2" fill="#929292"/><rect x="22" y="13.3" width="8" height="2" fill="#929292"/><rect x="22" y="24.7" width="8" height="2" fill="#929292"/><rect x="22" y="48.5" width="8" height="2" fill="#929292"/><rect x="22" y="59.5" width="8" height="2" fill="#929292"/><rect x="22" y="82.5" width="8" height="2" fill="#929292"/><rect x="22" y="94" width="8" height="2" fill="#929292"/><rect x="8" y="70" width="10" height="2.4" fill="#fff"/><rect x="32" y="0.5" width="4" height="110" rx="2" fill="#343434"/></svg>
<div class="cap" style="left:2613px;top:1917px;width:34px;height:70px;"></div>
<svg style="left:2596px;top:1880px;" width="134" height="107" viewBox="0 0 134 107"><rect x="84" y="3" width="6" height="2" fill="#9c9c9c"/><rect x="88" y="9" width="2" height="2" fill="#9c9c9c"/><rect x="88" y="15" width="2" height="2" fill="#9c9c9c"/><rect x="84" y="21" width="6" height="2" fill="#9c9c9c"/><rect x="88" y="27" width="2" height="2" fill="#9c9c9c"/><rect x="88" y="33" width="2" height="2" fill="#9c9c9c"/><rect x="84" y="39" width="6" height="2" fill="#9c9c9c"/><rect x="88" y="45" width="2" height="2" fill="#9c9c9c"/><rect x="88" y="51" width="2" height="2" fill="#9c9c9c"/><rect x="84" y="57" width="6" height="2" fill="#9c9c9c"/><rect x="88" y="63" width="2" height="2" fill="#9c9c9c"/><rect x="88" y="69" width="2" height="2" fill="#9c9c9c"/><rect x="84" y="75" width="6" height="2" fill="#9c9c9c"/><rect x="88" y="81" width="2" height="2" fill="#9c9c9c"/><rect x="88" y="87" width="2" height="2" fill="#9c9c9c"/><rect x="84" y="93" width="6" height="2" fill="#9c9c9c"/><rect x="88" y="99" width="2" height="2" fill="#9c9c9c"/><rect x="88" y="105" width="2" height="2" fill="#9c9c9c"/></svg>
<div style="left:2686.2px;top:1879px;width:23.6px;height:110px;background:#353535;border-radius:3.5px 3.5px 0 0;"></div>
<span class="t" style="left:2668.98px;top:1877.37px;font-size:13.5px;line-height:13.5px;color:#c6c6c6;">0</span>
<span class="t" style="left:2668.98px;top:1895.37px;font-size:13.5px;line-height:13.5px;color:#c6c6c6;">3</span>
<span class="t" style="left:2668.98px;top:1913.37px;font-size:13.5px;line-height:13.5px;color:#c6c6c6;">6</span>
<span class="t" style="left:2668.98px;top:1931.37px;font-size:13.5px;line-height:13.5px;color:#c6c6c6;">9</span>
<span class="t" style="left:2661.47px;top:1949.37px;font-size:13.5px;line-height:13.5px;color:#c6c6c6;">12</span>
<span class="t" style="left:2661.47px;top:1967.37px;font-size:13.5px;line-height:13.5px;color:#c6c6c6;">15</span>
<div style="left:2862px;top:1520px;width:2px;height:467px;background:#4a4a4a;"></div>
<div class="gs" style="left:2740px;top:1549px;width:112px;height:35.7px;"></div>
<div class="rd" style="left:2740px;top:1596.6px;width:112.5px;height:33px;"></div>
<span class="t" style="left:2769.20px;top:1602.38px;font-size:22px;line-height:22px;color:#60e07c;letter-spacing:-0.398px;">Read</span>
<div class="ico" style="left:2766px;top:1651px;width:60px;height:44px;"></div>
<svg style="left:2766px;top:1651px;" width="60" height="44" viewBox="0 0 60 44"><path d="M8,21 v2 M12,18 v8 M16,19 v6 M20,14 v16 M24,18 v8 M28,14 v16 M32,8 v28 M36,14 v16 M40,18 v8 M44,15 v14 M48,18 v8 M52,21 v2 " fill="none" stroke="#4db6ff" stroke-width="2.2" stroke-linecap="round"/></svg>
<svg style="left:2757px;top:1715.8px;" width="80" height="80" viewBox="0 0 80 80"><path d="M23.90,67.89 A32.2,32.2 0 1 1 56.10,67.89" fill="none" stroke="#383838" stroke-width="7.6"/><circle cx="40" cy="41.6" r="28.6" fill="rgba(0,0,0,.22)"/><circle cx="40" cy="40.2" r="28.2" fill="#8e8e8e"/><path d="M14,30 A28.2,28.2 0 0 1 66,30" fill="none" stroke="rgba(255,255,255,.16)" stroke-width="1.2"/><rect x="39.5" y="4" width="1.1" height="8" fill="#39c957"/><rect x="39" y="16" width="2" height="6" fill="#111"/></svg>
<div class="db" style="left:2740px;top:1803.3px;width:53.6px;height:35.3px;"></div>
<div class="db" style="left:2798.4px;top:1803.3px;width:53.6px;height:35.3px;"></div>
<span class="t" style="left:2750.80px;top:1811.22px;font-size:21px;line-height:21px;color:#fff;letter-spacing:0.609px;">0.0</span>
<svg style="left:2730px;top:1880px;" width="134" height="107" viewBox="0 0 134 107"><rect x="8" y="3" width="22" height="2" fill="#929292"/><rect x="8" y="37" width="22" height="2" fill="#929292"/><rect x="8" y="105" width="22" height="2" fill="#929292"/><rect x="22" y="13.3" width="8" height="2" fill="#929292"/><rect x="22" y="24.7" width="8" height="2" fill="#929292"/><rect x="22" y="48.5" width="8" height="2" fill="#929292"/><rect x="22" y="59.5" width="8" height="2" fill="#929292"/><rect x="22" y="82.5" width="8" height="2" fill="#929292"/><rect x="22" y="94" width="8" height="2" fill="#929292"/><rect x="8" y="70" width="10" height="2.4" fill="#fff"/><rect x="32" y="0.5" width="4" height="110" rx="2" fill="#343434"/></svg>
<div class="cap" style="left:2747px;top:1917px;width:34px;height:70px;"></div>
<svg style="left:2730px;top:1880px;" width="134" height="107" viewBox="0 0 134 107"><rect x="84" y="3" width="6" height="2" fill="#9c9c9c"/><rect x="88" y="9" width="2" height="2" fill="#9c9c9c"/><rect x="88" y="15" width="2" height="2" fill="#9c9c9c"/><rect x="84" y="21" width="6" height="2" fill="#9c9c9c"/><rect x="88" y="27" width="2" height="2" fill="#9c9c9c"/><rect x="88" y="33" width="2" height="2" fill="#9c9c9c"/><rect x="84" y="39" width="6" height="2" fill="#9c9c9c"/><rect x="88" y="45" width="2" height="2" fill="#9c9c9c"/><rect x="88" y="51" width="2" height="2" fill="#9c9c9c"/><rect x="84" y="57" width="6" height="2" fill="#9c9c9c"/><rect x="88" y="63" width="2" height="2" fill="#9c9c9c"/><rect x="88" y="69" width="2" height="2" fill="#9c9c9c"/><rect x="84" y="75" width="6" height="2" fill="#9c9c9c"/><rect x="88" y="81" width="2" height="2" fill="#9c9c9c"/><rect x="88" y="87" width="2" height="2" fill="#9c9c9c"/><rect x="84" y="93" width="6" height="2" fill="#9c9c9c"/><rect x="88" y="99" width="2" height="2" fill="#9c9c9c"/><rect x="88" y="105" width="2" height="2" fill="#9c9c9c"/></svg>
<div style="left:2820.2px;top:1879px;width:23.6px;height:110px;background:#353535;border-radius:3.5px 3.5px 0 0;"></div>
<span class="t" style="left:2802.98px;top:1877.37px;font-size:13.5px;line-height:13.5px;color:#c6c6c6;">0</span>
<span class="t" style="left:2802.98px;top:1895.37px;font-size:13.5px;line-height:13.5px;color:#c6c6c6;">3</span>
<span class="t" style="left:2802.98px;top:1913.37px;font-size:13.5px;line-height:13.5px;color:#c6c6c6;">6</span>
<span class="t" style="left:2802.98px;top:1931.37px;font-size:13.5px;line-height:13.5px;color:#c6c6c6;">9</span>
<span class="t" style="left:2795.47px;top:1949.37px;font-size:13.5px;line-height:13.5px;color:#c6c6c6;">12</span>
<span class="t" style="left:2795.47px;top:1967.37px;font-size:13.5px;line-height:13.5px;color:#c6c6c6;">15</span>
<div style="left:2996px;top:1520px;width:2px;height:467px;background:#4a4a4a;"></div>
<div class="gs" style="left:2874px;top:1549px;width:112px;height:35.7px;"></div>
<div class="rd" style="left:2874px;top:1596.6px;width:112.5px;height:33px;"></div>
<span class="t" style="left:2903.20px;top:1602.38px;font-size:22px;line-height:22px;color:#e9e9e9;letter-spacing:-0.398px;">Read</span>
<div class="ico" style="left:2900px;top:1651px;width:60px;height:44px;"></div>
<svg style="left:2900px;top:1651px;" width="60" height="44" viewBox="0 0 60 44"><path d="M8,21 v2 M12,18 v8 M16,19 v6 M20,14 v16 M24,18 v8 M28,14 v16 M32,8 v28 M36,14 v16 M40,18 v8 M44,15 v14 M48,18 v8 M52,21 v2 " fill="none" stroke="#4db6ff" stroke-width="2.2" stroke-linecap="round"/></svg>
<div class="db" style="left:2874px;top:1803.3px;width:114px;height:35.3px;"></div>
<span class="t" style="left:2915.80px;top:1811.22px;font-size:21px;line-height:21px;color:#fff;letter-spacing:0.609px;">0.0</span>
<svg style="left:2864px;top:1880px;" width="134" height="107" viewBox="0 0 134 107"><rect x="40" y="3" width="22" height="2" fill="#929292"/><rect x="40" y="37" width="22" height="2" fill="#929292"/><rect x="40" y="105" width="22" height="2" fill="#929292"/><rect x="54" y="13.3" width="8" height="2" fill="#929292"/><rect x="54" y="24.7" width="8" height="2" fill="#929292"/><rect x="54" y="48.5" width="8" height="2" fill="#929292"/><rect x="54" y="59.5" width="8" height="2" fill="#929292"/><rect x="54" y="82.5" width="8" height="2" fill="#929292"/><rect x="54" y="94" width="8" height="2" fill="#929292"/><rect x="40" y="70" width="10" height="2.4" fill="#fff"/><rect x="64" y="0.5" width="4" height="110" rx="2" fill="#343434"/></svg>
<div class="cap" style="left:2913px;top:1917px;width:34px;height:70px;"></div>
<span class="t" style="left:97.00px;top:1509.53px;font-size:23px;line-height:23px;color:#b6b6b6;letter-spacing:0.490px;">Output</span>
<span class="t" style="left:105.06px;top:1556.53px;font-size:23px;line-height:23px;color:#b6b6b6;">Group</span>
<span class="t" style="left:50.50px;top:1601.53px;font-size:23px;line-height:23px;color:#b6b6b6;letter-spacing:0.212px;">Automation</span>
<span class="t" style="left:128.06px;top:1741.13px;font-size:23px;line-height:23px;color:#b6b6b6;">Pan</span>
<span class="t" style="left:140.86px;top:1809.53px;font-size:23px;line-height:23px;color:#b6b6b6;">dB</span>
<svg style="left:0px;top:1880px;" width="184" height="107" viewBox="0 0 184 107"><rect x="160" y="3" width="22" height="2" fill="#929292"/><rect x="160" y="37" width="22" height="2" fill="#929292"/><rect x="160" y="105" width="22" height="2" fill="#929292"/><rect x="174" y="13.3" width="8" height="2" fill="#929292"/><rect x="174" y="24.7" width="8" height="2" fill="#929292"/><rect x="174" y="48.5" width="8" height="2" fill="#929292"/><rect x="174" y="59.5" width="8" height="2" fill="#929292"/><rect x="174" y="82.5" width="8" height="2" fill="#929292"/><rect x="174" y="94" width="8" height="2" fill="#929292"/><rect x="160" y="70" width="22" height="2.4" fill="#fff"/></svg>
<span class="t" style="left:145.66px;top:1876.80px;font-size:15px;line-height:15px;color:#bdbdbd;">6</span>
<span class="t" style="left:145.66px;top:1910.80px;font-size:15px;line-height:15px;color:#bdbdbd;">3</span>
<span class="t" style="left:145.66px;top:1944.80px;font-size:15px;line-height:15px;color:#bdbdbd;">0</span>
<span class="t" style="left:145.66px;top:1978.80px;font-size:15px;line-height:15px;color:#bdbdbd;">3</span>
</div></div>
<div style="left:3434px;top:1730px;width:16px;height:148px;background:#757575;border-radius:8px;"></div>
<div style="left:4px;top:1987px;width:3448px;height:26px;background:#373737;"></div>
<div style="left:4px;top:1987px;width:3448px;height:2px;background:#2b2b2b;"></div>
<div style="left:3426px;top:1989px;width:26px;height:24px;background:#565656;"></div>
<div style="left:4px;top:2011px;width:3448px;height:2px;background:#2e2e2e;"></div>
<div style="left:4px;top:1451px;width:3448px;height:70px;background:#484848;"></div>
<div class="btnd" style="left:20px;top:1465px;width:66px;height:40px;"></div>
<svg style="left:20px;top:1465px;" width="66" height="40" viewBox="0 0 66 40"><path d="M23.5,17 L33,7.8 L42.5,17 M33,8.2 V22 Q33,30.5 42.5,30.5" fill="none" stroke="#8d8d8d" stroke-width="2.3" stroke-linecap="round" stroke-linejoin="round"/></svg>
<div class="btn" style="left:104px;top:1465px;width:418px;height:40px;"></div>
<div class="sep" style="left:222px;top:1465px;width:2px;height:40px;"></div>
<div class="sep" style="left:390px;top:1465px;width:2px;height:40px;"></div>
<span class="t" style="left:125.00px;top:1470.69px;font-size:26px;line-height:26px;color:#fff;letter-spacing:-0.024px;">Edit</span>
<svg style="left:189px;top:1479.4px;" width="18" height="11.2" viewBox="0 0 18 11.2"><path d="M2,2 L9,9.2 L16,2" fill="none" stroke="#9c9c9c" stroke-width="2.6" stroke-linecap="round" stroke-linejoin="round"/></svg>
<span class="t" style="left:244.80px;top:1470.69px;font-size:26px;line-height:26px;color:#fff;letter-spacing:0.560px;">Options</span>
<svg style="left:357.5px;top:1479.4px;" width="18" height="11.2" viewBox="0 0 18 11.2"><path d="M2,2 L9,9.2 L16,2" fill="none" stroke="#9c9c9c" stroke-width="2.6" stroke-linecap="round" stroke-linejoin="round"/></svg>
<span class="t" style="left:412.40px;top:1470.69px;font-size:26px;line-height:26px;color:#fff;letter-spacing:0.277px;">View</span>
<svg style="left:491px;top:1479.4px;" width="18" height="11.2" viewBox="0 0 18 11.2"><path d="M2,2 L9,9.2 L16,2" fill="none" stroke="#9c9c9c" stroke-width="2.6" stroke-linecap="round" stroke-linejoin="round"/></svg>
<span class="t" style="left:543.00px;top:1470.69px;font-size:26px;line-height:26px;color:#a9a9a9;letter-spacing:0.115px;">Sends on Faders:</span>
<div class="btn" style="left:758px;top:1465px;width:295.6px;height:40px;"></div>
<div class="sep" style="left:818px;top:1465px;width:2px;height:40px;"></div>
<svg style="left:758px;top:1465px;" width="62" height="40" viewBox="0 0 62 40"><path d="M30,6.5 V19 M23.3,10.5 A11.6,11.6 0 1 0 36.7,10.5" fill="none" stroke="#fff" stroke-width="2.3" stroke-linecap="round"/></svg>
<span class="t" style="left:842.90px;top:1470.69px;font-size:26px;line-height:26px;color:#fff;letter-spacing:1.104px;">Off</span>
<svg style="left:1024px;top:1471.2px;" width="20" height="28" viewBox="0 0 20 28"><path d="M3.5,10.5 L10,4 L16.5,10.5 M3.5,17.5 L10,24 L16.5,17.5" fill="none" stroke="#b4b4b4" stroke-width="2.5" stroke-linecap="round" stroke-linejoin="round"/></svg>
<div style="left:1558px;top:1463px;width:340px;height:43.7px;background:#3b3b3b;border-radius:11px;"></div>
<div class="blue" style="left:1688px;top:1465px;width:124px;height:40px;"></div>
<span class="t" style="left:1580.50px;top:1470.79px;font-size:26px;line-height:26px;color:#c4c4c4;letter-spacing:0.206px;">Single</span>
<span class="t" style="left:1707.00px;top:1470.79px;font-size:26px;line-height:26px;color:#fff;letter-spacing:0.164px;">Tracks</span>
<span class="t" style="left:1838.60px;top:1470.79px;font-size:26px;line-height:26px;color:#c4c4c4;letter-spacing:0.031px;">All</span>
<div class="blue" style="left:2338px;top:1463px;width:953.7px;height:40px;"></div>
<div style="left:2455.7px;top:1463px;width:2px;height:40px;background:#1f5699;"></div>
<div style="left:2552px;top:1463px;width:2px;height:40px;background:#1f5699;"></div>
<div style="left:2647.8px;top:1463px;width:2px;height:40px;background:#1f5699;"></div>
<div style="left:2743.8px;top:1463px;width:2px;height:40px;background:#1f5699;"></div>
<div style="left:2855.7px;top:1463px;width:2px;height:40px;background:#1f5699;"></div>
<div style="left:2992px;top:1463px;width:2px;height:40px;background:#1f5699;"></div>
<div style="left:3186px;top:1463px;width:2px;height:40px;background:#1f5699;"></div>
<span class="t" style="left:2362.40px;top:1468.69px;font-size:26px;line-height:26px;color:#fff;letter-spacing:0.403px;">Audio</span>
<span class="t" style="left:2483.00px;top:1468.69px;font-size:26px;line-height:26px;color:#fff;letter-spacing:0.277px;">Inst</span>
<span class="t" style="left:2578.60px;top:1468.69px;font-size:26px;line-height:26px;color:#fff;letter-spacing:0.068px;">Aux</span>
<span class="t" style="left:2675.50px;top:1468.69px;font-size:26px;line-height:26px;color:#fff;letter-spacing:-0.599px;">Bus</span>
<span class="t" style="left:2771.00px;top:1468.69px;font-size:26px;line-height:26px;color:#fff;letter-spacing:0.541px;">Input</span>
<span class="t" style="left:2883.40px;top:1468.69px;font-size:26px;line-height:26px;color:#fff;letter-spacing:0.831px;">Output</span>
<span class="t" style="left:3019.00px;top:1468.69px;font-size:26px;line-height:26px;color:#fff;letter-spacing:0.138px;">Master/VCA</span>
<span class="t" style="left:3213.00px;top:1468.69px;font-size:26px;line-height:26px;color:#fff;letter-spacing:-0.219px;">MIDI</span>
<div style="left:3309.6px;top:1461px;width:128.4px;height:44px;background:#3c3c3c;border-radius:11px;"></div>
<div class="blue" style="left:3310px;top:1463px;width:60px;height:40px;"></div>
<svg style="left:3310px;top:1463px;" width="128" height="40" viewBox="0 0 128 40"><g fill="none" stroke="#fff" stroke-width="2.2" stroke-linejoin="round"><rect x="16.1" y="10.1" width="27.8" height="20.8" rx="3"/><path d="M25.3,10 v21 M34.7,10 v21"/><rect x="82" y="10.1" width="27.8" height="20.8" rx="3"/><path d="M95.9,10 v21"/></g></svg>
<div style="left:0px;top:1447px;width:3456px;height:570px;border:4px solid #84bdf8;border-right-width:4.5px;border-radius:0 0 18px 18px;background:transparent;pointer-events:none;"></div>
<div style="left:4px;top:1451px;width:3447.5px;height:564px;border:1.5px solid #2f2f2f;border-radius:0 0 14px 14px;background:transparent;"></div>
</div></div></body></html>
